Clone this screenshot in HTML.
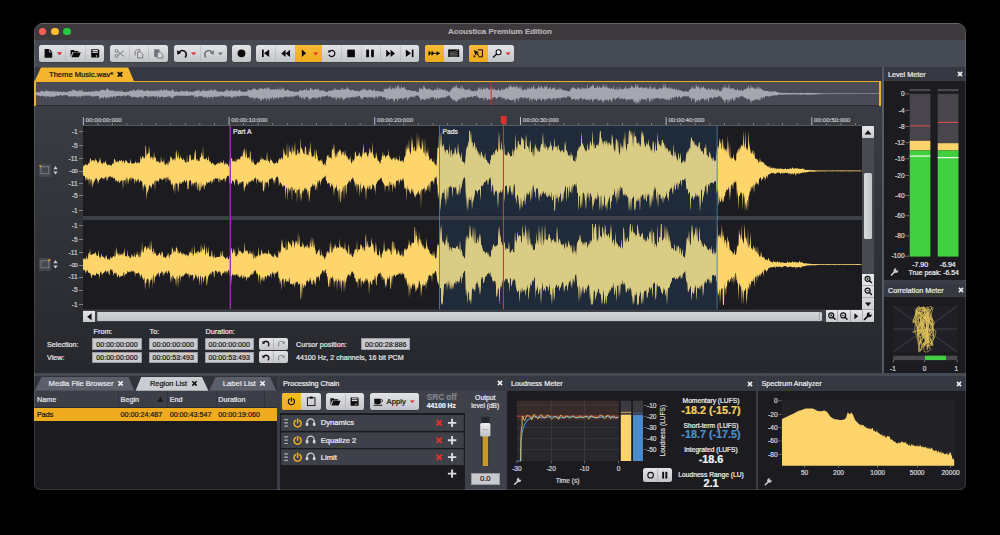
<!DOCTYPE html><html><head><meta charset="utf-8"><style>
html,body{margin:0;padding:0;background:#000;width:1000px;height:535px;overflow:hidden}
.win{position:absolute;left:34px;top:22.5px;width:932px;height:467.4px;border-radius:9px 9px 6px 6px;overflow:hidden;background:#2a2b30}
.wb{position:absolute;left:34px;top:22.5px;width:932px;height:467.4px;border-radius:9px 9px 6px 6px;box-sizing:border-box;border:1px solid rgba(200,205,215,0.16);pointer-events:none}
.win div,.win svg{position:absolute;box-sizing:border-box}
.t{white-space:nowrap;font-family:"Liberation Sans",sans-serif;-webkit-text-stroke:0.22px currentColor}
.btn{background:linear-gradient(#e3e4e7,#c3c4c8);border-radius:2.5px}
.ybtn{background:linear-gradient(#f6bb33,#eeaa1e)}
.dv{background:#b4b5ba}
</style></head><body><div class="win"><div style="left:0.00px;top:0.00px;width:932.00px;height:17.50px;background:#3d393d"></div>
<div style="left:0.00px;top:0.00px;width:932.00px;height:1.00px;background:#56525a"></div>
<div style="left:4.60px;top:5.00px;width:7.80px;height:7.80px;background:#fe5f57;border-radius:50%"></div>
<div style="left:16.90px;top:5.00px;width:7.80px;height:7.80px;background:#febc2e;border-radius:50%"></div>
<div style="left:29.10px;top:5.00px;width:7.80px;height:7.80px;background:#28c840;border-radius:50%"></div>
<div class="t" style="left:316.00px;width:300px;text-align:center;top:3.13px;font-size:8px;line-height:11.2px;color:#b3afb3;font-weight:bold;">Acoustica Premium Edition</div>
<div style="left:0.00px;top:17.50px;width:932.00px;height:27.40px;background:#464a53"></div>
<div style="left:0.00px;top:44.90px;width:848.00px;height:14.20px;background:#353840"></div>
<div style="left:0.00px;top:83.00px;width:848.00px;height:268.00px;background:linear-gradient(#3a3d44 0px,#313339 120px,#27282d 268px)"></div>
<div style="left:848.00px;top:44.90px;width:84.00px;height:306.00px;background:#3b3e46"></div>
<div class="btn" style="left:5.10px;top:22.60px;width:65.10px;height:16.60px;border-radius:2.5px;box-shadow:0 0.5px 0.5px rgba(0,0,0,0.35)"></div>
<div style="left:30.90px;top:23.10px;width:1.00px;height:15.60px;background:rgba(150,152,160,0.32)"></div>
<div style="left:51.20px;top:23.10px;width:1.00px;height:15.60px;background:rgba(150,152,160,0.32)"></div>
<div class="btn" style="left:75.80px;top:22.60px;width:58.20px;height:16.60px;border-radius:2.5px;box-shadow:0 0.5px 0.5px rgba(0,0,0,0.35)"></div>
<div style="left:94.90px;top:23.10px;width:1.00px;height:15.60px;background:rgba(150,152,160,0.32)"></div>
<div style="left:113.80px;top:23.10px;width:1.00px;height:15.60px;background:rgba(150,152,160,0.32)"></div>
<div class="btn" style="left:139.60px;top:22.60px;width:53.10px;height:16.60px;border-radius:2.5px;box-shadow:0 0.5px 0.5px rgba(0,0,0,0.35)"></div>
<div style="left:165.70px;top:23.10px;width:1.00px;height:15.60px;background:rgba(150,152,160,0.32)"></div>
<div class="btn" style="left:198.10px;top:22.60px;width:18.70px;height:16.60px;border-radius:2.5px;box-shadow:0 0.5px 0.5px rgba(0,0,0,0.35)"></div>
<div class="btn" style="left:222.30px;top:22.60px;width:162.70px;height:16.60px;border-radius:2.5px;box-shadow:0 0.5px 0.5px rgba(0,0,0,0.35)"></div>
<div class="ybtn" style="left:261.00px;top:22.60px;width:27.00px;height:16.60px;border-radius:0 0 0 0"></div>
<div style="left:240.70px;top:23.10px;width:1.00px;height:15.60px;background:rgba(150,152,160,0.32)"></div>
<div style="left:307.10px;top:23.10px;width:1.00px;height:15.60px;background:rgba(150,152,160,0.32)"></div>
<div style="left:326.70px;top:23.10px;width:1.00px;height:15.60px;background:rgba(150,152,160,0.32)"></div>
<div style="left:346.30px;top:23.10px;width:1.00px;height:15.60px;background:rgba(150,152,160,0.32)"></div>
<div style="left:365.60px;top:23.10px;width:1.00px;height:15.60px;background:rgba(150,152,160,0.32)"></div>
<div class="btn" style="left:390.80px;top:22.60px;width:38.20px;height:16.60px;border-radius:2.5px;box-shadow:0 0.5px 0.5px rgba(0,0,0,0.35)"></div>
<div class="ybtn" style="left:390.80px;top:22.60px;width:19.20px;height:16.60px;border-radius:2.5px 0 0 2.5px"></div>
<div class="btn" style="left:434.50px;top:22.60px;width:45.70px;height:16.60px;border-radius:2.5px;box-shadow:0 0.5px 0.5px rgba(0,0,0,0.35)"></div>
<div class="ybtn" style="left:434.50px;top:22.60px;width:19.50px;height:16.60px;border-radius:2.5px 0 0 2.5px"></div>
<svg style="left:0.00px;top:17.50px;width:486px;height:27px;" viewBox="34 40 486 27" width="486" height="27"><path d="M44.6 49.1h5l2.6 2.6v6h-7.6z" fill="#0a0a0a"/><path d="M49.4 49.1v2.9h2.8" fill="none" stroke="#d6d7da" stroke-width="0.7"/><path d="M56.9 52.3h5.3l-2.65 2.9z" fill="#d8262c"/><path d="M70.6 50h3.2l0.9 1h3.6v1.3h-6l-1.7 4.8z" fill="#0a0a0a"/><path d="M71.5 57.2l1.9-4.6h7.4l-2 4.6z" fill="#0a0a0a"/><path d="M91.2 49.2h7l1 1v7.3h-8z" fill="#0a0a0a"/><rect x="92.5" y="50" width="5.4" height="2.9" fill="#d9dadd"/><rect x="92.5" y="51.2" width="5.4" height="0.6" fill="#0a0a0a"/><rect x="95.9" y="55.4" width="1.2" height="1.2" fill="#d9dadd"/><g fill="none" stroke="#6f7179" stroke-width="0.9"><circle cx="116.6" cy="51" r="1.5"/><circle cx="116.6" cy="56" r="1.5"/><path d="M118 51.8L123.8 56.3M118 55.2L123.8 50.7"/></g><g fill="none" stroke="#6f7179" stroke-width="0.9"><path d="M135.2 55.5v-4l2-2h2.6v2"/><path d="M137.6 51.8h2.8l2.4 2.4v3.7h-5.2z" fill="#d4d5d8"/></g><rect x="154.2" y="49.3" width="5.2" height="7.6" fill="#6f7179"/><path d="M157.2 52.2h3.2l2.4 2.4v3.4h-5.6z" fill="#d4d5d8" stroke="#6f7179" stroke-width="0.9"/><path d="M179.2 52.3c1.2-1.6 3.4-2.2 5.2-1.2 2.2 1.2 2.4 4.2 0.8 6.3" fill="none" stroke="#0a0a0a" stroke-width="1.6"/><path d="M177 50.3l0.4 4.4 3.8-1.8z" fill="#0a0a0a"/><path d="M191.2 52.6h5l-2.5 2.7z" fill="#d8262c"/><path d="M211.8 52.3c-1.2-1.6-3.4-2.2-5.2-1.2-2.2 1.2-2.4 4.2-0.8 6.3" fill="none" stroke="#6f7179" stroke-width="1.6"/><path d="M214 50.3l-0.4 4.4-3.8-1.8z" fill="#6f7179"/><path d="M218 52.6h5l-2.5 2.7z" fill="#6f7179"/><circle cx="241.5" cy="53.3" r="3.9" fill="#0a0a0a"/><rect x="262" y="49.6" width="1.7" height="7.5" fill="#0a0a0a"/><path d="M269.2 49.6v7.5l-5.2-3.75z" fill="#0a0a0a"/><path d="M285.6 49.8v7.2l-4.4-3.6zM290 49.8v7.2l-4.4-3.6z" fill="#0a0a0a"/><path d="M301.8 49.5v7.6l4.3-3.8z" fill="#0a0a0a"/><path d="M313.3 52.6h4.9l-2.45 2.6z" fill="#d8262c"/><path d="M329.3 51.6a3.1 3.1 0 1 1 -0.4 3.2" fill="none" stroke="#0a0a0a" stroke-width="1.2"/><path d="M328.2 50l0.3 3 2.6-1.4z" fill="#0a0a0a"/><rect x="347.3" y="49.6" width="7.6" height="7.6" fill="#0a0a0a"/><rect x="366.2" y="49.6" width="2.8" height="7.6" fill="#0a0a0a"/><rect x="371.1" y="49.6" width="2.8" height="7.6" fill="#0a0a0a"/><path d="M386.2 49.8v7.2l4.4-3.6zM390.6 49.8v7.2l4.4-3.6z" fill="#0a0a0a"/><path d="M405.8 49.6v7.5l5.2-3.75z" fill="#0a0a0a"/><rect x="411.8" y="49.6" width="1.7" height="7.5" fill="#0a0a0a"/><g fill="#0a0a0a"><path d="M428.6 50.6v5.4l2.6-2.7zM431.6 50.6v5.4l2.6-2.7z"/><rect x="428.6" y="52.9" width="9" height="0.9"/><path d="M436.6 51.2l3.6 2.15-3.6 2.15z"/></g><rect x="448.2" y="49.4" width="11" height="7.6" fill="#0a0a0a"/><g fill="none" stroke="#c4c5c9" stroke-width="0.5"><path d="M449.6 52h3.6c2 0 3-1 4.6-1.6M449.6 53.4h3.6c2 0 3-0.6 4.6-0.9M449.6 54.8h3.6c2 0 3-0.3 4.6-0.4M449.6 56.1h8.2"/></g><path d="M477.8 49.8h4.6v7h-4M475.4 56.8h-1.4v-1.6" fill="none" stroke="#0a0a0a" stroke-width="1"/><path d="M473.9 50l5.2 2.2-2 0.7 2.1 2.3-0.9 0.9-2.1-2.3-0.8 1.9z" fill="#0a0a0a"/><circle cx="498.6" cy="52.3" r="2.5" fill="#f4f4f6" stroke="#0a0a0a" stroke-width="1.1"/><path d="M496.8 54.1l-3.8 3.3" stroke="#0a0a0a" stroke-width="1.3"/><path d="M505.6 52.6h5l-2.5 2.7z" fill="#d8262c"/></svg>
<svg style="left:0.00px;top:44.50px;width:110px;height:15px;" viewBox="34 67 110 15" width="110" height="15"><path d="M34.4 81.8L41 67.6H128.2L134.2 81.8Z" fill="#f5b52e"/></svg>
<div class="t" style="left:15.00px;top:47.55px;font-size:7.6px;line-height:10.64px;color:#111;font-weight:normal;">Theme Music.wav*</div>
<svg style="left:82.00px;top:47.50px;width:8px;height:8px;" viewBox="116 70 8 8" width="8" height="8"><path d="M117.8 72.2L122.2 76.6M122.2 72.2L117.8 76.6" stroke="#111" stroke-width="1.9"/></svg>
<div style="left:0.00px;top:58.70px;width:848.00px;height:24.30px;background:#4a4b55"></div>
<div style="left:0.00px;top:58.00px;width:847.00px;height:1.30px;background:#eeb028"></div>
<div style="left:0.00px;top:58.50px;width:2.00px;height:24.50px;background:#eeb028"></div>
<div style="left:845.00px;top:58.50px;width:2.00px;height:24.50px;background:#eeb028"></div>
<svg style="left:0.00px;top:58.50px;width:848px;height:25px;" viewBox="34 81 848 25" width="848" height="25"><path d="M35.5 92.1L36.0 92.0L36.5 92.4L37.0 92.1L37.5 92.2L38.0 92.3L38.5 92.0L39.0 92.2L39.5 92.4L40.0 91.0L40.5 92.3L41.0 90.4L41.5 91.0L42.0 91.2L42.5 91.1L43.0 91.1L43.5 91.6L44.0 91.6L44.5 91.7L45.0 91.4L45.5 91.3L46.0 90.6L46.5 90.6L47.0 90.8L47.5 91.0L48.0 91.0L48.5 91.1L49.0 91.3L49.5 91.4L50.0 91.1L50.5 91.4L51.0 91.6L51.5 91.8L52.0 91.0L52.5 91.0L53.0 91.6L53.5 91.3L54.0 91.8L54.5 91.8L55.0 90.3L55.5 92.0L56.0 91.7L56.5 91.7L57.0 91.6L57.5 91.1L58.0 91.5L58.5 91.7L59.0 91.8L59.5 92.0L60.0 91.8L60.5 92.0L61.0 90.6L61.5 92.2L62.0 92.4L62.5 92.0L63.0 92.1L63.5 91.2L64.0 92.2L64.5 92.3L65.0 91.5L65.5 92.0L66.0 92.1L66.5 92.1L67.0 92.3L67.5 92.2L68.0 91.9L68.5 91.3L69.0 91.4L69.5 90.9L70.0 91.2L70.5 91.0L71.0 91.4L71.5 91.2L72.0 89.4L72.5 89.6L73.0 91.5L73.5 89.3L74.0 89.9L74.5 90.2L75.0 90.3L75.5 90.6L76.0 90.7L76.5 91.0L77.0 91.3L77.5 91.1L78.0 91.1L78.5 91.7L79.0 88.9L79.5 91.3L80.0 90.5L80.5 90.8L81.0 91.4L81.5 89.8L82.0 89.8L82.5 91.2L83.0 92.0L83.5 91.7L84.0 91.4L84.5 91.9L85.0 91.6L85.5 91.8L86.0 92.0L86.5 91.7L87.0 91.7L87.5 92.0L88.0 92.1L88.5 91.9L89.0 90.2L89.5 92.0L90.0 91.9L90.5 91.9L91.0 91.6L91.5 91.5L92.0 90.2L92.5 92.0L93.0 91.3L93.5 91.6L94.0 91.7L94.5 91.6L95.0 90.3L95.5 91.5L96.0 90.4L96.5 90.8L97.0 91.0L97.5 91.6L98.0 91.5L98.5 91.6L99.0 91.4L99.5 90.6L100.0 90.7L100.5 90.4L101.0 90.3L101.5 90.1L102.0 89.8L102.5 89.5L103.0 90.1L103.5 89.7L104.0 90.0L104.5 90.5L105.0 90.4L105.5 90.3L106.0 89.8L106.5 90.1L107.0 87.6L107.5 88.4L108.0 89.3L108.5 89.8L109.0 90.5L109.5 90.8L110.0 90.1L110.5 90.2L111.0 90.4L111.5 90.5L112.0 90.5L112.5 90.0L113.0 91.0L113.5 91.1L114.0 90.6L114.5 91.0L115.0 91.7L115.5 91.2L116.0 91.1L116.5 91.1L117.0 91.2L117.5 91.4L118.0 91.1L118.5 91.3L119.0 91.8L119.5 91.6L120.0 89.6L120.5 92.0L121.0 91.9L121.5 90.1L122.0 91.3L122.5 91.3L123.0 91.9L123.5 92.1L124.0 91.8L124.5 92.3L125.0 91.8L125.5 91.8L126.0 92.1L126.5 92.4L127.0 91.2L127.5 91.4L128.0 91.9L128.5 92.1L129.0 91.2L129.5 90.9L130.0 91.0L130.5 90.6L131.0 90.6L131.5 91.0L132.0 90.8L132.5 91.0L133.0 89.6L133.5 89.5L134.0 90.1L134.5 90.4L135.0 90.8L135.5 91.1L136.0 90.5L136.5 90.1L137.0 90.1L137.5 90.2L138.0 90.5L138.5 87.7L139.0 90.5L139.5 90.1L140.0 91.1L140.5 90.0L141.0 90.1L141.5 88.8L142.0 90.4L142.5 89.8L143.0 90.8L143.5 91.1L144.0 91.1L144.5 90.9L145.0 91.2L145.5 91.1L146.0 90.3L146.5 90.9L147.0 90.8L147.5 89.6L148.0 90.4L148.5 90.5L149.0 90.8L149.5 91.4L150.0 90.7L150.5 90.7L151.0 90.9L151.5 90.6L152.0 90.7L152.5 90.9L153.0 90.8L153.5 91.2L154.0 91.0L154.5 91.2L155.0 89.8L155.5 90.4L156.0 90.9L156.5 91.3L157.0 90.7L157.5 90.7L158.0 88.9L158.5 90.9L159.0 90.9L159.5 91.3L160.0 88.9L160.5 90.8L161.0 89.1L161.5 90.1L162.0 90.4L162.5 90.2L163.0 91.2L163.5 88.4L164.0 91.1L164.5 89.6L165.0 90.1L165.5 90.0L166.0 90.4L166.5 88.0L167.0 90.7L167.5 90.9L168.0 89.9L168.5 91.1L169.0 90.5L169.5 90.7L170.0 90.7L170.5 91.3L171.0 91.2L171.5 91.0L172.0 89.1L172.5 90.1L173.0 89.3L173.5 90.9L174.0 91.4L174.5 91.3L175.0 91.8L175.5 91.6L176.0 91.5L176.5 91.7L177.0 90.6L177.5 91.8L178.0 92.0L178.5 92.1L179.0 92.1L179.5 92.0L180.0 91.8L180.5 91.8L181.0 90.1L181.5 90.7L182.0 90.9L182.5 91.6L183.0 91.3L183.5 91.6L184.0 90.6L184.5 91.4L185.0 91.7L185.5 91.2L186.0 91.4L186.5 90.0L187.0 91.2L187.5 91.5L188.0 91.3L188.5 91.6L189.0 91.7L189.5 92.2L190.0 91.2L190.5 91.1L191.0 91.9L191.5 91.9L192.0 92.1L192.5 91.6L193.0 92.0L193.5 91.3L194.0 92.3L194.5 91.3L195.0 91.1L195.5 91.1L196.0 90.5L196.5 90.6L197.0 90.3L197.5 91.2L198.0 89.5L198.5 90.9L199.0 88.9L199.5 91.0L200.0 91.8L200.5 91.4L201.0 91.7L201.5 90.4L202.0 91.0L202.5 90.9L203.0 90.7L203.5 88.6L204.0 91.0L204.5 90.9L205.0 91.2L205.5 90.6L206.0 90.6L206.5 90.9L207.0 91.1L207.5 90.9L208.0 90.4L208.5 90.4L209.0 90.0L209.5 90.8L210.0 90.7L210.5 89.9L211.0 88.4L211.5 90.0L212.0 90.4L212.5 90.5L213.0 90.9L213.5 90.6L214.0 88.4L214.5 90.7L215.0 88.7L215.5 89.9L216.0 90.5L216.5 90.6L217.0 91.2L217.5 91.4L218.0 91.5L218.5 91.7L219.0 91.4L219.5 91.3L220.0 91.8L220.5 92.1L221.0 90.7L221.5 91.7L222.0 91.6L222.5 91.8L223.0 91.9L223.5 91.9L224.0 91.2L224.5 91.2L225.0 91.5L225.5 90.9L226.0 89.0L226.5 90.6L227.0 90.8L227.5 88.5L228.0 90.8L228.5 90.9L229.0 91.2L229.5 90.6L230.0 90.9L230.5 90.7L231.0 90.6L231.5 90.6L232.0 88.3L232.5 91.0L233.0 91.0L233.5 91.2L234.0 91.2L234.5 90.8L235.0 90.2L235.5 90.4L236.0 91.0L236.5 91.1L237.0 91.4L237.5 91.3L238.0 89.9L238.5 90.5L239.0 90.9L239.5 89.5L240.0 90.1L240.5 91.2L241.0 91.4L241.5 91.8L242.0 91.6L242.5 91.8L243.0 91.8L243.5 91.7L244.0 91.8L244.5 91.9L245.0 91.9L245.5 91.8L246.0 91.9L246.5 91.1L247.0 91.9L247.5 90.7L248.0 88.7L248.5 89.7L249.0 90.0L249.5 90.1L250.0 90.8L250.5 90.0L251.0 90.4L251.5 90.2L252.0 89.5L252.5 88.7L253.0 89.3L253.5 89.6L254.0 87.4L254.5 88.6L255.0 89.1L255.5 88.8L256.0 90.3L256.5 89.4L257.0 90.1L257.5 89.4L258.0 90.2L258.5 89.3L259.0 89.4L259.5 87.9L260.0 87.9L260.5 88.6L261.0 89.1L261.5 88.8L262.0 88.7L262.5 88.0L263.0 89.1L263.5 89.5L264.0 89.2L264.5 87.9L265.0 88.1L265.5 88.9L266.0 89.3L266.5 86.6L267.0 89.3L267.5 89.1L268.0 87.3L268.5 87.3L269.0 88.0L269.5 88.5L270.0 90.2L270.5 90.0L271.0 89.1L271.5 89.5L272.0 89.6L272.5 89.4L273.0 90.0L273.5 89.0L274.0 88.9L274.5 89.7L275.0 89.6L275.5 88.7L276.0 89.9L276.5 90.2L277.0 89.1L277.5 88.4L278.0 89.1L278.5 89.8L279.0 89.4L279.5 89.7L280.0 85.8L280.5 90.1L281.0 90.3L281.5 89.9L282.0 87.5L282.5 88.8L283.0 89.3L283.5 86.6L284.0 90.6L284.5 89.7L285.0 90.6L285.5 90.7L286.0 90.8L286.5 90.5L287.0 88.9L287.5 89.6L288.0 90.1L288.5 89.9L289.0 90.3L289.5 91.1L290.0 91.3L290.5 91.1L291.0 91.1L291.5 91.1L292.0 91.3L292.5 91.6L293.0 91.2L293.5 91.5L294.0 91.8L294.5 91.9L295.0 91.5L295.5 91.8L296.0 91.4L296.5 91.6L297.0 91.8L297.5 92.3L298.0 92.2L298.5 91.4L299.0 91.2L299.5 89.4L300.0 91.1L300.5 90.3L301.0 90.3L301.5 90.2L302.0 90.2L302.5 90.7L303.0 91.0L303.5 90.0L304.0 89.6L304.5 89.9L305.0 89.5L305.5 90.6L306.0 89.9L306.5 86.9L307.0 90.7L307.5 90.8L308.0 90.1L308.5 90.6L309.0 90.2L309.5 90.8L310.0 88.1L310.5 88.6L311.0 87.0L311.5 89.6L312.0 89.7L312.5 89.5L313.0 89.6L313.5 90.3L314.0 90.0L314.5 89.7L315.0 89.6L315.5 88.3L316.0 89.3L316.5 89.6L317.0 89.2L317.5 89.5L318.0 89.9L318.5 87.5L319.0 90.4L319.5 90.6L320.0 90.1L320.5 90.7L321.0 90.5L321.5 90.9L322.0 90.4L322.5 89.6L323.0 90.2L323.5 91.0L324.0 90.6L324.5 90.9L325.0 91.3L325.5 91.4L326.0 91.8L326.5 91.8L327.0 91.9L327.5 91.7L328.0 91.7L328.5 90.2L329.0 90.7L329.5 91.0L330.0 90.5L330.5 90.7L331.0 90.9L331.5 90.9L332.0 89.4L332.5 90.2L333.0 89.9L333.5 90.4L334.0 90.5L334.5 87.7L335.0 88.0L335.5 89.5L336.0 89.7L336.5 90.1L337.0 89.5L337.5 89.6L338.0 90.1L338.5 89.4L339.0 90.3L339.5 90.0L340.0 89.6L340.5 90.2L341.0 89.6L341.5 87.6L342.0 88.9L342.5 90.2L343.0 87.1L343.5 89.7L344.0 89.5L344.5 89.2L345.0 89.3L345.5 89.2L346.0 89.6L346.5 89.3L347.0 86.5L347.5 87.4L348.0 88.5L348.5 88.9L349.0 89.2L349.5 89.6L350.0 90.4L350.5 89.5L351.0 90.5L351.5 90.5L352.0 90.1L352.5 89.4L353.0 89.6L353.5 90.9L354.0 90.3L354.5 90.6L355.0 90.7L355.5 91.0L356.0 91.3L356.5 90.8L357.0 90.6L357.5 91.0L358.0 90.5L358.5 91.7L359.0 91.8L359.5 91.0L360.0 90.6L360.5 90.5L361.0 90.8L361.5 90.3L362.0 88.8L362.5 89.6L363.0 89.2L363.5 89.5L364.0 90.9L364.5 87.1L365.0 89.0L365.5 89.4L366.0 90.2L366.5 89.9L367.0 90.3L367.5 90.4L368.0 90.8L368.5 90.2L369.0 88.4L369.5 90.4L370.0 88.8L370.5 89.5L371.0 90.2L371.5 90.0L372.0 90.7L372.5 91.0L373.0 90.7L373.5 89.5L374.0 90.9L374.5 88.5L375.0 90.6L375.5 91.5L376.0 91.4L376.5 90.9L377.0 90.7L377.5 90.6L378.0 90.8L378.5 91.6L379.0 91.1L379.5 91.6L380.0 90.9L380.5 91.7L381.0 91.8L381.5 91.2L382.0 91.2L382.5 91.9L383.0 92.0L383.5 91.0L384.0 87.7L384.5 89.5L385.0 89.0L385.5 89.3L386.0 88.3L386.5 89.2L387.0 88.2L387.5 88.5L388.0 89.7L388.5 87.1L389.0 88.8L389.5 88.1L390.0 85.1L390.5 88.6L391.0 88.6L391.5 89.9L392.0 89.5L392.5 87.3L393.0 88.1L393.5 88.5L394.0 89.5L394.5 88.3L395.0 88.8L395.5 85.2L396.0 88.4L396.5 89.5L397.0 85.5L397.5 85.2L398.0 88.3L398.5 86.0L399.0 85.0L399.5 88.5L400.0 88.7L400.5 88.5L401.0 88.6L401.5 85.4L402.0 87.7L402.5 88.2L403.0 87.9L403.5 86.9L404.0 88.0L404.5 86.5L405.0 88.7L405.5 89.3L406.0 89.9L406.5 89.2L407.0 89.9L407.5 90.2L408.0 90.5L408.5 90.2L409.0 90.1L409.5 89.4L410.0 90.5L410.5 90.2L411.0 90.6L411.5 91.2L412.0 90.8L412.5 90.9L413.0 91.0L413.5 91.3L414.0 90.5L414.5 91.3L415.0 90.9L415.5 90.4L416.0 91.5L416.5 91.8L417.0 91.6L417.5 91.7L418.0 92.3L418.5 92.3L419.0 90.8L419.5 87.6L420.0 88.3L420.5 88.7L421.0 89.1L421.5 88.6L422.0 88.1L422.5 89.7L423.0 89.6L423.5 85.4L424.0 86.0L424.5 87.0L425.0 88.1L425.5 88.4L426.0 89.1L426.5 89.4L427.0 88.8L427.5 89.5L428.0 89.9L428.5 88.3L429.0 88.6L429.5 88.6L430.0 89.3L430.5 90.0L431.0 89.9L431.5 89.6L432.0 90.2L432.5 90.7L433.0 90.4L433.5 89.9L434.0 90.6L434.5 89.3L435.0 89.4L435.5 89.6L436.0 89.8L436.5 90.4L437.0 86.7L437.5 87.4L438.0 89.7L438.5 89.8L439.0 89.9L439.5 87.7L440.0 88.6L440.5 88.7L441.0 90.0L441.5 88.3L442.0 89.4L442.5 89.9L443.0 89.7L443.5 89.8L444.0 90.7L444.5 88.6L445.0 90.5L445.5 88.5L446.0 90.9L446.5 91.6L447.0 91.2L447.5 90.0L448.0 91.6L448.5 91.9L449.0 92.1L449.5 92.6L450.0 91.2L450.5 90.3L451.0 89.4L451.5 90.0L452.0 88.3L452.5 88.0L453.0 86.6L453.5 88.3L454.0 87.9L454.5 85.8L455.0 86.1L455.5 86.7L456.0 88.7L456.5 83.8L457.0 86.3L457.5 88.1L458.0 88.1L458.5 88.5L459.0 87.8L459.5 88.6L460.0 89.6L460.5 84.9L461.0 89.6L461.5 89.1L462.0 84.8L462.5 86.6L463.0 88.9L463.5 88.0L464.0 89.2L464.5 89.2L465.0 89.3L465.5 89.7L466.0 90.6L466.5 89.6L467.0 90.2L467.5 89.6L468.0 88.0L468.5 90.6L469.0 89.3L469.5 88.1L470.0 90.3L470.5 90.4L471.0 90.7L471.5 90.2L472.0 91.0L472.5 91.1L473.0 91.1L473.5 91.5L474.0 91.6L474.5 90.4L475.0 89.8L475.5 91.4L476.0 91.5L476.5 90.6L477.0 90.5L477.5 91.1L478.0 88.7L478.5 87.2L479.0 87.0L479.5 89.0L480.0 89.6L480.5 89.4L481.0 86.2L481.5 88.9L482.0 90.0L482.5 89.7L483.0 89.6L483.5 86.1L484.0 88.5L484.5 89.4L485.0 88.6L485.5 89.1L486.0 89.0L486.5 87.3L487.0 87.8L487.5 87.8L488.0 89.1L488.5 89.7L489.0 88.7L489.5 90.1L490.0 89.6L490.5 86.2L491.0 90.2L491.5 86.1L492.0 89.3L492.5 89.9L493.0 87.3L493.5 89.7L494.0 90.8L494.5 88.3L495.0 88.9L495.5 90.3L496.0 89.8L496.5 90.7L497.0 90.6L497.5 89.4L498.0 89.5L498.5 87.8L499.0 90.4L499.5 90.6L500.0 91.0L500.5 90.0L501.0 90.3L501.5 87.8L502.0 89.3L502.5 90.9L503.0 88.0L503.5 90.1L504.0 89.0L504.5 89.4L505.0 89.2L505.5 89.0L506.0 87.4L506.5 87.5L507.0 88.3L507.5 88.4L508.0 89.6L508.5 86.2L509.0 86.4L509.5 87.5L510.0 85.0L510.5 84.6L511.0 86.7L511.5 87.0L512.0 87.1L512.5 87.7L513.0 87.3L513.5 84.9L514.0 87.0L514.5 87.2L515.0 87.3L515.5 87.1L516.0 87.1L516.5 84.5L517.0 89.2L517.5 85.8L518.0 88.7L518.5 89.3L519.0 85.8L519.5 87.6L520.0 88.4L520.5 89.1L521.0 85.8L521.5 86.2L522.0 90.4L522.5 90.5L523.0 89.9L523.5 89.6L524.0 90.1L524.5 89.7L525.0 88.0L525.5 90.0L526.0 90.4L526.5 89.1L527.0 89.9L527.5 86.8L528.0 89.4L528.5 88.8L529.0 86.9L529.5 88.6L530.0 88.7L530.5 89.2L531.0 88.3L531.5 85.8L532.0 88.5L532.5 89.2L533.0 86.5L533.5 86.8L534.0 83.9L534.5 88.3L535.0 88.8L535.5 89.3L536.0 88.8L536.5 89.5L537.0 88.2L537.5 88.0L538.0 88.6L538.5 84.3L539.0 87.5L539.5 87.1L540.0 88.8L540.5 87.4L541.0 86.0L541.5 85.8L542.0 87.0L542.5 87.9L543.0 88.7L543.5 87.7L544.0 89.5L544.5 85.8L545.0 86.4L545.5 88.1L546.0 86.1L546.5 87.2L547.0 84.8L547.5 88.8L548.0 89.4L548.5 88.4L549.0 89.3L549.5 86.9L550.0 88.2L550.5 86.0L551.0 88.9L551.5 89.5L552.0 88.8L552.5 88.6L553.0 87.1L553.5 88.3L554.0 88.3L554.5 88.3L555.0 85.9L555.5 89.9L556.0 90.1L556.5 89.0L557.0 90.4L557.5 89.1L558.0 89.1L558.5 89.4L559.0 86.6L559.5 89.2L560.0 90.0L560.5 87.0L561.0 90.2L561.5 88.2L562.0 89.0L562.5 89.7L563.0 89.8L563.5 90.9L564.0 90.0L564.5 89.9L565.0 90.7L565.5 90.4L566.0 90.8L566.5 90.5L567.0 90.6L567.5 91.5L568.0 91.1L568.5 91.4L569.0 90.9L569.5 91.4L570.0 91.5L570.5 88.7L571.0 88.8L571.5 88.4L572.0 88.5L572.5 86.8L573.0 88.1L573.5 87.4L574.0 87.5L574.5 88.0L575.0 88.8L575.5 88.7L576.0 89.3L576.5 88.8L577.0 89.7L577.5 89.0L578.0 86.5L578.5 88.3L579.0 87.6L579.5 88.9L580.0 88.2L580.5 88.9L581.0 89.9L581.5 88.8L582.0 87.4L582.5 86.8L583.0 88.5L583.5 88.2L584.0 89.2L584.5 88.7L585.0 87.6L585.5 88.6L586.0 88.8L586.5 88.2L587.0 88.6L587.5 83.3L588.0 89.2L588.5 88.2L589.0 88.2L589.5 87.9L590.0 88.1L590.5 86.6L591.0 87.0L591.5 85.8L592.0 86.6L592.5 83.6L593.0 86.7L593.5 84.2L594.0 87.8L594.5 88.0L595.0 87.9L595.5 87.3L596.0 88.2L596.5 87.9L597.0 86.4L597.5 85.3L598.0 87.2L598.5 88.4L599.0 87.5L599.5 86.1L600.0 86.4L600.5 88.5L601.0 87.8L601.5 87.4L602.0 88.1L602.5 86.9L603.0 82.7L603.5 85.7L604.0 87.0L604.5 86.3L605.0 87.4L605.5 87.5L606.0 83.9L606.5 88.5L607.0 84.9L607.5 87.7L608.0 88.3L608.5 88.5L609.0 87.1L609.5 88.5L610.0 88.4L610.5 88.8L611.0 88.7L611.5 87.7L612.0 88.5L612.5 89.3L613.0 88.7L613.5 84.8L614.0 89.5L614.5 89.0L615.0 89.4L615.5 89.3L616.0 89.6L616.5 89.2L617.0 86.1L617.5 89.5L618.0 90.1L618.5 89.6L619.0 89.1L619.5 87.3L620.0 86.6L620.5 89.5L621.0 89.6L621.5 88.5L622.0 89.2L622.5 88.5L623.0 89.5L623.5 89.6L624.0 88.4L624.5 88.5L625.0 87.7L625.5 87.3L626.0 85.3L626.5 89.0L627.0 89.0L627.5 88.4L628.0 89.3L628.5 87.4L629.0 88.2L629.5 88.6L630.0 87.6L630.5 87.9L631.0 87.5L631.5 84.9L632.0 86.7L632.5 86.5L633.0 86.9L633.5 88.8L634.0 87.3L634.5 87.9L635.0 87.5L635.5 83.0L636.0 87.1L636.5 87.7L637.0 83.8L637.5 84.9L638.0 87.0L638.5 86.5L639.0 88.2L639.5 88.2L640.0 88.0L640.5 87.5L641.0 86.9L641.5 86.4L642.0 87.9L642.5 87.4L643.0 88.7L643.5 88.2L644.0 87.0L644.5 87.9L645.0 88.5L645.5 87.8L646.0 87.3L646.5 87.1L647.0 88.5L647.5 88.6L648.0 88.5L648.5 88.7L649.0 88.6L649.5 88.8L650.0 84.3L650.5 86.9L651.0 86.8L651.5 88.9L652.0 89.1L652.5 88.4L653.0 88.4L653.5 89.1L654.0 86.9L654.5 88.0L655.0 85.4L655.5 89.4L656.0 89.6L656.5 89.1L657.0 89.8L657.5 89.4L658.0 88.3L658.5 89.4L659.0 89.2L659.5 87.3L660.0 87.9L660.5 88.0L661.0 89.2L661.5 89.1L662.0 87.6L662.5 88.8L663.0 87.8L663.5 83.1L664.0 88.6L664.5 87.5L665.0 82.5L665.5 85.7L666.0 87.1L666.5 88.4L667.0 87.4L667.5 88.7L668.0 88.0L668.5 88.5L669.0 85.9L669.5 87.9L670.0 88.8L670.5 88.1L671.0 88.9L671.5 88.7L672.0 86.2L672.5 88.9L673.0 88.9L673.5 89.6L674.0 89.1L674.5 89.3L675.0 87.9L675.5 89.8L676.0 90.6L676.5 87.5L677.0 90.8L677.5 91.1L678.0 88.9L678.5 90.3L679.0 88.8L679.5 90.2L680.0 91.3L680.5 89.7L681.0 90.9L681.5 90.6L682.0 91.1L682.5 91.1L683.0 91.7L683.5 91.5L684.0 91.7L684.5 91.5L685.0 91.4L685.5 91.4L686.0 90.3L686.5 91.5L687.0 91.7L687.5 91.5L688.0 92.1L688.5 91.7L689.0 89.9L689.5 90.3L690.0 89.4L690.5 89.0L691.0 89.1L691.5 86.5L692.0 88.3L692.5 88.9L693.0 84.8L693.5 88.3L694.0 87.8L694.5 89.0L695.0 88.9L695.5 88.5L696.0 84.5L696.5 85.2L697.0 87.5L697.5 87.1L698.0 87.1L698.5 87.5L699.0 84.4L699.5 88.2L700.0 88.6L700.5 89.5L701.0 88.5L701.5 86.6L702.0 87.7L702.5 87.3L703.0 88.3L703.5 85.6L704.0 87.6L704.5 88.4L705.0 88.4L705.5 88.6L706.0 88.5L706.5 89.7L707.0 88.9L707.5 90.2L708.0 89.2L708.5 87.4L709.0 88.6L709.5 89.7L710.0 89.5L710.5 90.0L711.0 90.3L711.5 87.8L712.0 88.7L712.5 89.0L713.0 89.1L713.5 90.3L714.0 89.9L714.5 88.0L715.0 90.5L715.5 90.5L716.0 87.8L716.5 90.5L717.0 90.8L717.5 89.6L718.0 88.9L718.5 88.5L719.0 91.1L719.5 90.9L720.0 91.1L720.5 91.1L721.0 91.2L721.5 91.4L722.0 87.6L722.5 90.2L723.0 86.5L723.5 87.8L724.0 87.8L724.5 87.4L725.0 83.7L725.5 87.5L726.0 87.9L726.5 88.6L727.0 87.0L727.5 87.8L728.0 88.6L728.5 86.5L729.0 82.9L729.5 88.6L730.0 88.3L730.5 89.4L731.0 88.3L731.5 88.4L732.0 88.3L732.5 88.5L733.0 87.9L733.5 87.9L734.0 89.2L734.5 89.9L735.0 89.8L735.5 89.6L736.0 90.5L736.5 90.3L737.0 90.0L737.5 86.9L738.0 91.0L738.5 90.6L739.0 89.6L739.5 89.9L740.0 90.5L740.5 90.4L741.0 90.7L741.5 89.4L742.0 90.2L742.5 91.2L743.0 91.0L743.5 90.0L744.0 89.4L744.5 89.3L745.0 89.1L745.5 88.7L746.0 89.7L746.5 88.8L747.0 87.9L747.5 87.5L748.0 87.8L748.5 84.2L749.0 88.2L749.5 89.0L750.0 88.2L750.5 88.0L751.0 83.7L751.5 89.1L752.0 86.4L752.5 87.3L753.0 87.9L753.5 87.3L754.0 88.2L754.5 89.5L755.0 88.4L755.5 88.4L756.0 88.9L756.5 88.3L757.0 85.1L757.5 88.6L758.0 89.2L758.5 88.7L759.0 85.2L759.5 88.0L760.0 89.1L760.5 87.8L761.0 89.3L761.5 88.9L762.0 89.7L762.5 89.2L763.0 90.2L763.5 90.8L764.0 91.0L764.5 90.3L765.0 91.3L765.5 90.7L766.0 91.0L766.5 90.9L767.0 90.7L767.5 91.0L768.0 91.1L768.5 91.1L769.0 91.4L769.5 91.7L770.0 91.4L770.5 91.6L771.0 91.7L771.5 92.2L772.0 90.3L772.5 91.5L773.0 91.5L773.5 91.9L774.0 91.8L774.5 90.6L775.0 91.6L775.5 90.9L776.0 92.3L776.5 91.5L777.0 92.2L777.5 92.1L778.0 92.6L778.5 92.8L779.0 91.7L779.5 92.6L780.0 92.9L780.5 92.7L781.0 92.9L781.5 92.7L782.0 92.4L782.5 92.9L783.0 92.9L783.5 92.9L784.0 92.9L784.5 93.1L785.0 92.9L785.5 92.5L786.0 92.9L786.5 92.4L787.0 93.0L787.5 93.0L788.0 93.0L788.5 92.9L789.0 93.2L789.5 93.1L790.0 93.1L790.5 93.1L791.0 92.9L791.5 92.9L792.0 92.9L792.5 93.1L793.0 93.1L793.5 93.1L794.0 93.0L794.5 93.0L795.0 93.0L795.5 92.9L796.0 93.1L796.5 93.1L797.0 93.1L797.5 93.2L798.0 93.1L798.5 93.1L799.0 93.2L799.5 93.2L800.0 92.9L800.5 92.9L801.0 92.9L801.5 93.1L802.0 92.8L802.5 92.9L803.0 93.0L803.5 93.0L804.0 92.9L804.5 93.0L805.0 93.1L805.5 92.9L806.0 93.1L806.5 93.1L807.0 93.0L807.5 93.0L808.0 92.3L808.5 92.9L809.0 92.9L809.5 93.0L810.0 92.9L810.5 93.0L811.0 93.0L811.5 92.9L812.0 93.0L812.5 93.0L813.0 93.0L813.5 93.0L814.0 93.0L814.5 93.1L815.0 93.1L815.5 93.0L816.0 93.0L816.5 93.1L817.0 93.2L817.5 93.2L818.0 93.3L818.5 93.3L819.0 93.1L819.5 93.2L820.0 92.9L820.5 93.3L821.0 93.3L821.5 93.4L822.0 93.3L822.5 93.4L823.0 93.3L823.5 93.3L824.0 93.3L824.5 93.3L825.0 93.4L825.5 93.4L826.0 93.4L826.5 93.4L827.0 93.4L827.5 93.4L828.0 93.3L828.5 93.4L829.0 93.4L829.5 93.4L830.0 93.4L830.5 93.4L831.0 93.4L831.5 93.4L832.0 93.4L832.5 93.2L833.0 93.4L833.5 93.4L834.0 93.4L834.5 93.4L835.0 93.4L835.5 93.4L836.0 93.3L836.5 93.4L837.0 93.2L837.5 93.4L838.0 93.4L838.5 93.4L839.0 93.4L839.5 93.3L840.0 93.3L840.5 93.4L841.0 93.4L841.5 93.4L842.0 93.2L842.5 93.3L843.0 93.4L843.5 93.4L844.0 93.4L844.5 93.4L845.0 93.4L845.5 93.4L846.0 93.4L846.5 93.3L847.0 93.4L847.5 93.4L848.0 93.4L848.5 93.4L849.0 93.4L849.5 93.4L850.0 93.4L850.5 93.4L851.0 93.4L851.5 93.4L852.0 93.4L852.5 93.3L853.0 93.3L853.5 93.4L854.0 93.3L854.5 93.4L855.0 93.4L855.5 93.4L856.0 93.4L856.5 93.4L857.0 93.4L857.5 93.4L858.0 93.4L858.5 93.3L859.0 93.4L859.5 93.4L860.0 93.4L860.5 93.4L861.0 93.4L861.5 93.4L862.0 93.4L862.5 93.4L863.0 93.4L863.5 93.4L864.0 93.4L864.5 93.4L865.0 93.4L865.5 93.4L866.0 93.4L866.5 93.4L867.0 93.4L867.5 93.4L868.0 93.4L868.5 93.4L869.0 93.4L869.5 93.4L870.0 93.4L870.5 93.4L871.0 93.4L871.5 93.4L872.0 93.4L872.5 93.3L873.0 93.4L873.5 93.4L874.0 93.3L874.5 93.4L875.0 93.4L875.5 93.4L876.0 93.4L876.5 93.4L877.0 93.3L877.5 93.4L878.0 93.4L878.5 93.4L879.0 93.4L879.0 94.0L878.5 94.0L878.0 94.0L877.5 94.0L877.0 94.0L876.5 94.0L876.0 94.0L875.5 94.0L875.0 94.0L874.5 94.0L874.0 94.0L873.5 94.0L873.0 94.0L872.5 94.0L872.0 94.0L871.5 94.0L871.0 94.0L870.5 94.0L870.0 94.0L869.5 94.0L869.0 94.0L868.5 94.1L868.0 94.0L867.5 94.0L867.0 94.0L866.5 94.0L866.0 94.0L865.5 94.0L865.0 94.0L864.5 94.0L864.0 94.0L863.5 94.1L863.0 94.0L862.5 94.0L862.0 94.0L861.5 94.0L861.0 94.1L860.5 94.0L860.0 94.0L859.5 94.0L859.0 94.0L858.5 94.0L858.0 94.0L857.5 94.0L857.0 94.0L856.5 94.0L856.0 94.0L855.5 94.0L855.0 94.1L854.5 94.1L854.0 94.0L853.5 94.0L853.0 94.0L852.5 94.0L852.0 94.0L851.5 94.0L851.0 94.0L850.5 94.0L850.0 94.0L849.5 94.0L849.0 94.0L848.5 94.0L848.0 94.0L847.5 94.0L847.0 94.0L846.5 94.0L846.0 94.0L845.5 94.1L845.0 94.0L844.5 94.0L844.0 94.0L843.5 94.0L843.0 94.0L842.5 94.0L842.0 94.0L841.5 94.0L841.0 94.0L840.5 94.1L840.0 94.0L839.5 94.0L839.0 94.0L838.5 94.0L838.0 94.0L837.5 94.1L837.0 94.2L836.5 94.0L836.0 94.1L835.5 94.0L835.0 94.0L834.5 94.0L834.0 94.0L833.5 94.0L833.0 94.0L832.5 94.0L832.0 94.0L831.5 94.0L831.0 94.1L830.5 94.1L830.0 94.0L829.5 94.0L829.0 94.0L828.5 94.3L828.0 94.0L827.5 94.0L827.0 94.0L826.5 94.1L826.0 94.2L825.5 94.0L825.0 94.1L824.5 94.0L824.0 94.1L823.5 94.0L823.0 94.1L822.5 94.3L822.0 94.0L821.5 94.0L821.0 94.4L820.5 94.2L820.0 94.2L819.5 94.1L819.0 94.2L818.5 94.3L818.0 94.4L817.5 94.2L817.0 94.5L816.5 94.2L816.0 94.2L815.5 94.3L815.0 94.4L814.5 94.6L814.0 94.5L813.5 94.3L813.0 94.4L812.5 94.4L812.0 94.4L811.5 94.3L811.0 94.9L810.5 94.6L810.0 94.9L809.5 94.6L809.0 94.3L808.5 95.1L808.0 95.1L807.5 94.5L807.0 94.5L806.5 94.5L806.0 94.8L805.5 94.4L805.0 94.3L804.5 94.3L804.0 94.3L803.5 94.4L803.0 94.5L802.5 94.5L802.0 94.4L801.5 94.5L801.0 94.7L800.5 94.9L800.0 94.4L799.5 94.3L799.0 95.0L798.5 94.7L798.0 94.2L797.5 94.4L797.0 94.5L796.5 94.3L796.0 94.3L795.5 94.4L795.0 94.3L794.5 94.3L794.0 94.3L793.5 94.4L793.0 94.4L792.5 94.3L792.0 94.3L791.5 94.7L791.0 94.2L790.5 94.3L790.0 94.4L789.5 94.4L789.0 94.5L788.5 94.9L788.0 94.4L787.5 94.4L787.0 94.3L786.5 94.5L786.0 94.5L785.5 94.4L785.0 94.5L784.5 94.4L784.0 94.5L783.5 94.6L783.0 95.1L782.5 94.7L782.0 94.4L781.5 95.1L781.0 94.4L780.5 94.5L780.0 94.5L779.5 94.8L779.0 94.6L778.5 94.8L778.0 95.1L777.5 94.9L777.0 95.8L776.5 95.2L776.0 95.1L775.5 95.2L775.0 95.4L774.5 95.4L774.0 95.4L773.5 95.6L773.0 95.6L772.5 95.4L772.0 95.7L771.5 95.8L771.0 95.7L770.5 96.4L770.0 95.8L769.5 96.6L769.0 97.5L768.5 95.9L768.0 95.8L767.5 96.3L767.0 96.3L766.5 95.9L766.0 96.1L765.5 96.2L765.0 97.0L764.5 97.3L764.0 99.1L763.5 97.3L763.0 96.6L762.5 99.7L762.0 97.5L761.5 97.3L761.0 97.0L760.5 100.7L760.0 98.8L759.5 100.5L759.0 101.1L758.5 98.8L758.0 99.3L757.5 99.2L757.0 100.1L756.5 99.5L756.0 99.5L755.5 99.6L755.0 99.1L754.5 100.5L754.0 101.1L753.5 100.1L753.0 100.5L752.5 100.5L752.0 101.8L751.5 100.4L751.0 104.1L750.5 100.5L750.0 99.7L749.5 99.4L749.0 98.7L748.5 98.2L748.0 99.2L747.5 100.5L747.0 98.9L746.5 98.5L746.0 98.3L745.5 98.2L745.0 97.8L744.5 97.3L744.0 98.0L743.5 96.7L743.0 96.4L742.5 96.4L742.0 95.7L741.5 96.5L741.0 96.6L740.5 96.1L740.0 96.6L739.5 97.2L739.0 97.6L738.5 98.4L738.0 97.3L737.5 97.3L737.0 97.6L736.5 97.8L736.0 97.0L735.5 97.9L735.0 101.0L734.5 99.6L734.0 101.0L733.5 101.2L733.0 97.9L732.5 98.0L732.0 99.2L731.5 100.5L731.0 98.4L730.5 100.1L730.0 99.1L729.5 101.4L729.0 102.0L728.5 98.7L728.0 105.1L727.5 100.1L727.0 99.2L726.5 99.2L726.0 99.7L725.5 100.3L725.0 103.6L724.5 102.6L724.0 99.4L723.5 99.9L723.0 100.3L722.5 99.2L722.0 98.4L721.5 97.3L721.0 96.1L720.5 98.1L720.0 95.8L719.5 96.2L719.0 96.4L718.5 96.4L718.0 96.6L717.5 97.2L717.0 97.3L716.5 98.6L716.0 97.0L715.5 96.9L715.0 97.3L714.5 97.1L714.0 97.5L713.5 96.9L713.0 99.3L712.5 98.6L712.0 98.7L711.5 97.2L711.0 97.7L710.5 97.5L710.0 97.3L709.5 97.9L709.0 98.8L708.5 101.9L708.0 101.9L707.5 97.7L707.0 99.0L706.5 99.4L706.0 99.1L705.5 99.2L705.0 102.0L704.5 99.7L704.0 99.0L703.5 99.1L703.0 98.5L702.5 98.2L702.0 98.0L701.5 98.7L701.0 100.1L700.5 99.6L700.0 100.5L699.5 102.1L699.0 98.9L698.5 99.4L698.0 100.3L697.5 102.6L697.0 99.4L696.5 100.6L696.0 101.4L695.5 101.6L695.0 104.0L694.5 98.3L694.0 98.8L693.5 99.3L693.0 97.8L692.5 98.4L692.0 99.8L691.5 102.3L691.0 97.8L690.5 97.7L690.0 98.0L689.5 97.9L689.0 97.1L688.5 95.3L688.0 97.2L687.5 96.0L687.0 96.0L686.5 96.4L686.0 95.9L685.5 96.1L685.0 97.2L684.5 95.8L684.0 96.1L683.5 96.4L683.0 95.9L682.5 96.7L682.0 97.8L681.5 97.3L681.0 97.6L680.5 98.7L680.0 96.9L679.5 96.2L679.0 96.2L678.5 96.7L678.0 97.4L677.5 99.0L677.0 97.1L676.5 96.6L676.0 96.6L675.5 97.0L675.0 97.3L674.5 96.9L674.0 97.0L673.5 99.8L673.0 97.2L672.5 97.3L672.0 97.5L671.5 101.1L671.0 97.9L670.5 97.8L670.0 98.4L669.5 100.5L669.0 100.4L668.5 99.2L668.0 99.3L667.5 99.7L667.0 100.0L666.5 99.5L666.0 99.7L665.5 99.3L665.0 100.1L664.5 98.1L664.0 99.8L663.5 98.0L663.0 98.0L662.5 99.7L662.0 97.8L661.5 98.7L661.0 98.1L660.5 98.7L660.0 99.5L659.5 99.3L659.0 97.8L658.5 97.9L658.0 98.8L657.5 97.5L657.0 97.7L656.5 98.3L656.0 98.4L655.5 98.6L655.0 98.2L654.5 98.9L654.0 99.5L653.5 98.2L653.0 98.4L652.5 101.9L652.0 99.0L651.5 98.0L651.0 101.2L650.5 99.1L650.0 102.4L649.5 102.3L649.0 99.2L648.5 98.1L648.0 98.3L647.5 98.0L647.0 98.3L646.5 102.5L646.0 99.7L645.5 99.4L645.0 99.0L644.5 99.7L644.0 99.5L643.5 99.5L643.0 99.5L642.5 99.3L642.0 99.3L641.5 98.7L641.0 100.3L640.5 102.1L640.0 98.6L639.5 100.5L639.0 104.6L638.5 101.1L638.0 102.4L637.5 103.7L637.0 99.4L636.5 104.1L636.0 104.3L635.5 101.0L635.0 101.2L634.5 102.4L634.0 103.0L633.5 100.0L633.0 98.7L632.5 99.4L632.0 99.8L631.5 98.4L631.0 99.8L630.5 99.3L630.0 99.7L629.5 99.6L629.0 99.6L628.5 99.0L628.0 98.8L627.5 99.4L627.0 101.3L626.5 101.0L626.0 98.7L625.5 99.1L625.0 99.2L624.5 98.1L624.0 99.0L623.5 99.3L623.0 99.2L622.5 98.0L622.0 99.0L621.5 98.4L621.0 98.9L620.5 98.7L620.0 97.5L619.5 100.9L619.0 96.7L618.5 97.0L618.0 98.1L617.5 98.3L617.0 97.8L616.5 98.4L616.0 99.3L615.5 99.8L615.0 100.4L614.5 98.2L614.0 98.4L613.5 97.5L613.0 98.2L612.5 99.5L612.0 102.6L611.5 99.9L611.0 101.9L610.5 99.4L610.0 99.6L609.5 99.3L609.0 99.3L608.5 101.0L608.0 102.1L607.5 99.2L607.0 99.8L606.5 99.7L606.0 100.2L605.5 99.9L605.0 100.4L604.5 99.4L604.0 101.2L603.5 103.4L603.0 101.1L602.5 100.9L602.0 102.6L601.5 99.1L601.0 99.7L600.5 99.6L600.0 100.4L599.5 99.9L599.0 100.7L598.5 100.1L598.0 101.8L597.5 98.6L597.0 99.5L596.5 99.6L596.0 98.8L595.5 98.6L595.0 99.9L594.5 98.9L594.0 99.5L593.5 99.7L593.0 103.1L592.5 101.5L592.0 99.5L591.5 99.1L591.0 98.8L590.5 99.4L590.0 100.2L589.5 100.9L589.0 99.5L588.5 99.2L588.0 99.4L587.5 99.9L587.0 99.7L586.5 100.1L586.0 99.9L585.5 98.9L585.0 98.8L584.5 98.7L584.0 98.6L583.5 98.9L583.0 99.8L582.5 100.4L582.0 98.0L581.5 98.3L581.0 98.3L580.5 97.9L580.0 98.3L579.5 98.6L579.0 102.1L578.5 98.7L578.0 99.3L577.5 100.3L577.0 98.9L576.5 99.0L576.0 99.9L575.5 101.1L575.0 97.9L574.5 99.3L574.0 98.9L573.5 98.4L573.0 99.3L572.5 99.5L572.0 99.6L571.5 99.9L571.0 97.4L570.5 97.3L570.0 96.1L569.5 97.8L569.0 97.0L568.5 95.7L568.0 96.0L567.5 96.7L567.0 96.4L566.5 99.1L566.0 96.7L565.5 97.5L565.0 98.4L564.5 97.0L564.0 97.3L563.5 97.3L563.0 97.6L562.5 97.7L562.0 98.0L561.5 97.4L561.0 97.7L560.5 98.0L560.0 101.6L559.5 97.7L559.0 97.8L558.5 98.1L558.0 98.4L557.5 98.6L557.0 97.8L556.5 98.1L556.0 98.6L555.5 100.1L555.0 100.7L554.5 98.4L554.0 97.5L553.5 98.0L553.0 98.8L552.5 98.6L552.0 101.6L551.5 98.7L551.0 100.2L550.5 98.8L550.0 97.9L549.5 98.6L549.0 98.3L548.5 98.8L548.0 98.0L547.5 98.5L547.0 99.4L546.5 99.2L546.0 100.8L545.5 99.0L545.0 98.4L544.5 102.2L544.0 99.1L543.5 99.2L543.0 98.2L542.5 98.5L542.0 100.1L541.5 100.9L541.0 100.5L540.5 99.1L540.0 99.2L539.5 98.6L539.0 97.9L538.5 99.7L538.0 99.0L537.5 99.2L537.0 100.6L536.5 101.5L536.0 100.1L535.5 99.4L535.0 99.3L534.5 100.0L534.0 98.4L533.5 98.0L533.0 99.1L532.5 98.9L532.0 103.2L531.5 98.8L531.0 99.5L530.5 98.1L530.0 100.2L529.5 101.0L529.0 97.5L528.5 97.7L528.0 97.2L527.5 98.7L527.0 98.0L526.5 98.6L526.0 98.1L525.5 98.5L525.0 97.3L524.5 97.3L524.0 97.6L523.5 98.6L523.0 99.7L522.5 97.1L522.0 97.6L521.5 97.6L521.0 97.5L520.5 97.2L520.0 98.5L519.5 98.0L519.0 98.6L518.5 102.2L518.0 98.3L517.5 100.0L517.0 98.0L516.5 97.7L516.0 99.1L515.5 103.8L515.0 98.2L514.5 103.8L514.0 98.4L513.5 99.9L513.0 100.2L512.5 100.3L512.0 99.2L511.5 101.3L511.0 100.0L510.5 100.3L510.0 99.5L509.5 100.0L509.0 99.5L508.5 98.9L508.0 98.4L507.5 98.6L507.0 99.7L506.5 99.4L506.0 99.8L505.5 100.6L505.0 97.8L504.5 98.8L504.0 98.2L503.5 98.8L503.0 97.5L502.5 98.4L502.0 96.5L501.5 100.1L501.0 97.1L500.5 96.6L500.0 97.2L499.5 96.7L499.0 96.7L498.5 97.1L498.0 97.6L497.5 98.1L497.0 98.3L496.5 98.2L496.0 99.9L495.5 97.0L495.0 97.0L494.5 97.1L494.0 97.7L493.5 96.8L493.0 97.2L492.5 98.5L492.0 98.8L491.5 98.7L491.0 98.8L490.5 99.4L490.0 100.2L489.5 99.5L489.0 98.4L488.5 98.9L488.0 99.3L487.5 100.4L487.0 100.8L486.5 98.1L486.0 98.6L485.5 98.0L485.0 97.7L484.5 97.6L484.0 101.8L483.5 99.2L483.0 98.1L482.5 97.8L482.0 98.2L481.5 98.0L481.0 97.7L480.5 98.5L480.0 97.9L479.5 98.5L479.0 98.6L478.5 96.8L478.0 97.2L477.5 97.8L477.0 95.3L476.5 95.3L476.0 96.9L475.5 95.8L475.0 96.4L474.5 96.1L474.0 96.5L473.5 96.0L473.0 96.6L472.5 98.2L472.0 96.5L471.5 96.3L471.0 96.9L470.5 96.7L470.0 96.9L469.5 97.0L469.0 97.1L468.5 96.9L468.0 97.1L467.5 97.4L467.0 97.5L466.5 97.5L466.0 98.2L465.5 99.9L465.0 98.3L464.5 97.2L464.0 97.6L463.5 98.6L463.0 97.3L462.5 97.5L462.0 98.1L461.5 98.1L461.0 101.5L460.5 98.0L460.0 98.5L459.5 99.8L459.0 99.1L458.5 99.2L458.0 99.9L457.5 101.7L457.0 100.6L456.5 101.8L456.0 102.2L455.5 100.4L455.0 100.5L454.5 99.8L454.0 99.4L453.5 100.3L453.0 101.5L452.5 98.7L452.0 98.9L451.5 98.6L451.0 97.7L450.5 97.8L450.0 96.6L449.5 95.3L449.0 95.4L448.5 95.8L448.0 95.8L447.5 96.1L447.0 97.1L446.5 96.1L446.0 96.5L445.5 98.3L445.0 96.6L444.5 97.4L444.0 98.7L443.5 96.9L443.0 97.4L442.5 97.2L442.0 97.7L441.5 97.7L441.0 97.8L440.5 97.8L440.0 98.0L439.5 97.9L439.0 97.9L438.5 100.0L438.0 97.9L437.5 97.8L437.0 97.4L436.5 101.0L436.0 98.1L435.5 97.7L435.0 98.9L434.5 99.4L434.0 97.5L433.5 96.5L433.0 97.2L432.5 97.4L432.0 97.5L431.5 97.2L431.0 97.1L430.5 98.1L430.0 98.3L429.5 99.1L429.0 99.5L428.5 99.0L428.0 97.4L427.5 98.9L427.0 98.6L426.5 98.7L426.0 99.2L425.5 99.0L425.0 100.4L424.5 99.6L424.0 100.0L423.5 98.9L423.0 99.2L422.5 98.1L422.0 99.5L421.5 99.3L421.0 100.3L420.5 100.7L420.0 97.6L419.5 97.9L419.0 96.7L418.5 95.5L418.0 96.2L417.5 95.3L417.0 95.5L416.5 95.6L416.0 95.6L415.5 95.8L415.0 98.2L414.5 96.3L414.0 96.3L413.5 97.1L413.0 96.6L412.5 98.0L412.0 96.8L411.5 96.1L411.0 97.3L410.5 96.7L410.0 97.1L409.5 97.8L409.0 97.7L408.5 99.1L408.0 97.5L407.5 100.5L407.0 100.2L406.5 97.3L406.0 97.1L405.5 98.0L405.0 98.0L404.5 97.6L404.0 97.9L403.5 98.7L403.0 99.8L402.5 99.6L402.0 98.4L401.5 97.5L401.0 98.4L400.5 98.6L400.0 98.1L399.5 99.2L399.0 98.3L398.5 98.7L398.0 100.0L397.5 101.7L397.0 99.0L396.5 98.5L396.0 99.2L395.5 98.6L395.0 99.7L394.5 102.8L394.0 98.9L393.5 102.0L393.0 99.0L392.5 98.8L392.0 98.2L391.5 98.7L391.0 98.9L390.5 98.6L390.0 98.9L389.5 100.0L389.0 99.4L388.5 98.0L388.0 101.7L387.5 97.6L387.0 98.7L386.5 100.2L386.0 98.9L385.5 97.9L385.0 96.5L384.5 97.5L384.0 97.1L383.5 96.8L383.0 97.4L382.5 97.4L382.0 96.4L381.5 96.4L381.0 96.3L380.5 95.8L380.0 96.4L379.5 97.1L379.0 95.9L378.5 96.3L378.0 97.8L377.5 98.7L377.0 96.3L376.5 96.8L376.0 96.5L375.5 96.4L375.0 98.8L374.5 99.0L374.0 96.1L373.5 98.8L373.0 97.2L372.5 96.9L372.0 96.9L371.5 98.3L371.0 96.8L370.5 97.2L370.0 97.2L369.5 97.4L369.0 96.8L368.5 96.7L368.0 99.1L367.5 97.4L367.0 97.2L366.5 97.4L366.0 96.8L365.5 96.9L365.0 97.1L364.5 96.9L364.0 97.3L363.5 97.6L363.0 97.6L362.5 100.2L362.0 98.0L361.5 100.1L361.0 96.6L360.5 99.0L360.0 96.6L359.5 95.9L359.0 95.7L358.5 96.1L358.0 95.9L357.5 97.7L357.0 96.2L356.5 96.4L356.0 96.4L355.5 96.8L355.0 97.3L354.5 97.9L354.0 96.4L353.5 96.8L353.0 97.9L352.5 96.5L352.0 97.2L351.5 96.9L351.0 97.2L350.5 97.7L350.0 97.4L349.5 96.9L349.0 100.8L348.5 96.7L348.0 97.6L347.5 97.3L347.0 98.3L346.5 97.1L346.0 98.1L345.5 98.4L345.0 98.4L344.5 99.0L344.0 100.0L343.5 101.3L343.0 97.8L342.5 98.7L342.0 98.9L341.5 97.1L341.0 96.8L340.5 97.4L340.0 100.0L339.5 98.0L339.0 98.2L338.5 97.8L338.0 97.8L337.5 97.3L337.0 97.9L336.5 99.6L336.0 100.4L335.5 98.1L335.0 96.5L334.5 96.5L334.0 99.6L333.5 97.3L333.0 97.4L332.5 97.3L332.0 98.7L331.5 96.4L331.0 97.0L330.5 96.4L330.0 96.1L329.5 96.4L329.0 96.9L328.5 97.1L328.0 95.2L327.5 95.2L327.0 95.9L326.5 95.9L326.0 95.7L325.5 96.6L325.0 96.8L324.5 96.3L324.0 96.5L323.5 96.8L323.0 96.2L322.5 96.4L322.0 97.0L321.5 96.9L321.0 96.2L320.5 100.0L320.0 96.4L319.5 96.9L319.0 97.6L318.5 97.8L318.0 97.4L317.5 97.2L317.0 97.9L316.5 99.0L316.0 98.8L315.5 97.6L315.0 98.0L314.5 97.1L314.0 97.5L313.5 98.0L313.0 97.7L312.5 97.6L312.0 97.7L311.5 98.8L311.0 99.1L310.5 98.1L310.0 101.0L309.5 99.0L309.0 97.7L308.5 100.4L308.0 96.6L307.5 97.4L307.0 96.8L306.5 96.9L306.0 97.3L305.5 97.0L305.0 100.0L304.5 98.0L304.0 99.3L303.5 97.4L303.0 96.7L302.5 97.4L302.0 99.4L301.5 98.0L301.0 97.2L300.5 96.6L300.0 96.8L299.5 98.0L299.0 96.8L298.5 94.9L298.0 95.4L297.5 95.3L297.0 95.6L296.5 95.6L296.0 95.7L295.5 96.4L295.0 95.4L294.5 95.8L294.0 97.0L293.5 96.9L293.0 96.1L292.5 95.9L292.0 98.2L291.5 96.5L291.0 96.6L290.5 96.5L290.0 97.0L289.5 96.6L289.0 97.3L288.5 96.6L288.0 98.1L287.5 96.9L287.0 96.2L286.5 96.4L286.0 97.1L285.5 96.7L285.0 96.7L284.5 96.7L284.0 96.8L283.5 97.0L283.0 97.4L282.5 99.0L282.0 97.8L281.5 97.1L281.0 97.6L280.5 97.2L280.0 97.1L279.5 97.3L279.0 98.5L278.5 99.3L278.0 97.1L277.5 97.5L277.0 98.2L276.5 98.1L276.0 98.3L275.5 98.0L275.0 97.6L274.5 97.7L274.0 99.5L273.5 99.9L273.0 97.2L272.5 97.1L272.0 98.0L271.5 98.6L271.0 98.3L270.5 98.5L270.0 97.3L269.5 102.1L269.0 97.9L268.5 100.7L268.0 97.7L267.5 98.1L267.0 97.7L266.5 101.7L266.0 98.4L265.5 98.5L265.0 99.4L264.5 97.9L264.0 97.6L263.5 100.7L263.0 98.3L262.5 98.8L262.0 99.3L261.5 100.3L261.0 100.7L260.5 101.5L260.0 97.7L259.5 98.6L259.0 99.1L258.5 98.8L258.0 99.3L257.5 97.6L257.0 97.5L256.5 97.8L256.0 97.9L255.5 97.3L255.0 100.8L254.5 97.7L254.0 98.4L253.5 99.4L253.0 96.8L252.5 97.5L252.0 97.7L251.5 97.5L251.0 97.7L250.5 98.5L250.0 97.1L249.5 96.8L249.0 96.9L248.5 96.5L248.0 96.7L247.5 95.9L247.0 95.4L246.5 95.8L246.0 95.7L245.5 96.0L245.0 96.0L244.5 95.8L244.0 95.6L243.5 95.6L243.0 95.7L242.5 95.9L242.0 95.8L241.5 95.8L241.0 96.1L240.5 95.8L240.0 96.4L239.5 96.9L239.0 96.1L238.5 96.0L238.0 96.3L237.5 96.1L237.0 96.4L236.5 96.1L236.0 97.8L235.5 96.4L235.0 97.0L234.5 96.0L234.0 96.3L233.5 96.6L233.0 98.0L232.5 97.2L232.0 97.4L231.5 98.5L231.0 96.3L230.5 96.9L230.0 96.3L229.5 96.8L229.0 96.2L228.5 96.6L228.0 97.1L227.5 96.5L227.0 96.5L226.5 96.5L226.0 96.3L225.5 96.4L225.0 97.9L224.5 96.3L224.0 96.1L223.5 96.0L223.0 95.5L222.5 95.9L222.0 96.4L221.5 95.6L221.0 97.3L220.5 95.6L220.0 95.8L219.5 97.5L219.0 95.9L218.5 96.5L218.0 96.5L217.5 96.3L217.0 96.9L216.5 96.8L216.0 97.6L215.5 96.5L215.0 96.4L214.5 96.9L214.0 96.5L213.5 96.4L213.0 99.7L212.5 97.2L212.0 97.0L211.5 96.9L211.0 96.7L210.5 97.4L210.0 96.8L209.5 98.9L209.0 96.5L208.5 97.2L208.0 96.8L207.5 98.0L207.0 98.6L206.5 96.1L206.0 98.9L205.5 96.5L205.0 97.0L204.5 97.2L204.0 96.9L203.5 97.3L203.0 97.5L202.5 96.5L202.0 95.9L201.5 95.9L201.0 96.2L200.5 96.0L200.0 96.4L199.5 96.3L199.0 96.0L198.5 96.3L198.0 96.7L197.5 98.0L197.0 96.6L196.5 96.1L196.0 97.3L195.5 96.8L195.0 97.5L194.5 97.7L194.0 95.0L193.5 95.2L193.0 95.6L192.5 96.0L192.0 95.6L191.5 95.0L191.0 95.7L190.5 95.6L190.0 95.8L189.5 95.7L189.0 95.8L188.5 95.7L188.0 95.6L187.5 95.9L187.0 96.1L186.5 96.5L186.0 95.6L185.5 95.8L185.0 95.9L184.5 95.5L184.0 96.0L183.5 95.8L183.0 95.6L182.5 96.5L182.0 95.9L181.5 95.6L181.0 95.6L180.5 95.6L180.0 96.0L179.5 96.3L179.0 95.4L178.5 95.5L178.0 95.6L177.5 95.7L177.0 95.6L176.5 95.8L176.0 96.0L175.5 95.9L175.0 96.4L174.5 95.5L174.0 96.1L173.5 98.0L173.0 96.2L172.5 98.4L172.0 98.2L171.5 96.8L171.0 98.8L170.5 96.5L170.0 95.9L169.5 96.3L169.0 96.4L168.5 96.7L168.0 96.0L167.5 96.7L167.0 96.6L166.5 97.4L166.0 97.1L165.5 97.1L165.0 97.1L164.5 97.1L164.0 97.1L163.5 98.8L163.0 96.3L162.5 96.9L162.0 96.1L161.5 97.0L161.0 96.6L160.5 97.2L160.0 97.5L159.5 98.2L159.0 96.1L158.5 96.1L158.0 96.8L157.5 99.1L157.0 96.3L156.5 96.3L156.0 96.4L155.5 96.8L155.0 96.9L154.5 96.5L154.0 96.6L153.5 96.3L153.0 95.8L152.5 96.5L152.0 96.1L151.5 96.8L151.0 96.9L150.5 96.3L150.0 96.3L149.5 96.6L149.0 97.2L148.5 97.6L148.0 96.2L147.5 96.4L147.0 96.7L146.5 95.8L146.0 96.3L145.5 96.0L145.0 95.9L144.5 96.0L144.0 96.4L143.5 98.3L143.0 96.6L142.5 99.2L142.0 96.3L141.5 96.6L141.0 97.9L140.5 96.8L140.0 96.7L139.5 96.4L139.0 97.1L138.5 97.4L138.0 97.6L137.5 97.4L137.0 97.8L136.5 97.0L136.0 97.2L135.5 96.9L135.0 96.8L134.5 96.9L134.0 96.3L133.5 97.1L133.0 97.0L132.5 97.4L132.0 97.7L131.5 96.6L131.0 96.4L130.5 96.3L130.0 96.5L129.5 95.5L129.0 95.3L128.5 95.4L128.0 95.1L127.5 95.3L127.0 95.5L126.5 95.6L126.0 95.9L125.5 96.4L125.0 96.4L124.5 95.6L124.0 95.3L123.5 95.7L123.0 95.6L122.5 96.3L122.0 95.7L121.5 96.1L121.0 96.8L120.5 96.6L120.0 95.4L119.5 95.7L119.0 96.0L118.5 96.1L118.0 96.0L117.5 96.1L117.0 96.1L116.5 96.3L116.0 96.2L115.5 96.7L115.0 97.9L114.5 96.2L114.0 96.0L113.5 96.0L113.0 96.7L112.5 97.3L112.0 98.0L111.5 96.5L111.0 96.6L110.5 96.3L110.0 96.9L109.5 97.2L109.0 99.2L108.5 96.9L108.0 97.3L107.5 97.1L107.0 98.2L106.5 98.1L106.0 99.0L105.5 97.4L105.0 96.6L104.5 97.0L104.0 97.1L103.5 99.6L103.0 97.2L102.5 97.6L102.0 97.8L101.5 97.7L101.0 97.4L100.5 97.9L100.0 99.3L99.5 98.9L99.0 96.2L98.5 96.6L98.0 95.7L97.5 95.9L97.0 95.6L96.5 96.3L96.0 96.3L95.5 96.2L95.0 95.9L94.5 96.5L94.0 96.3L93.5 97.1L93.0 95.8L92.5 97.2L92.0 95.9L91.5 95.6L91.0 97.0L90.5 96.0L90.0 95.8L89.5 95.2L89.0 95.5L88.5 95.9L88.0 95.4L87.5 95.5L87.0 95.8L86.5 96.6L86.0 95.4L85.5 95.2L85.0 95.5L84.5 95.7L84.0 95.9L83.5 97.0L83.0 95.6L82.5 95.6L82.0 96.3L81.5 96.3L81.0 96.1L80.5 98.2L80.0 95.6L79.5 96.4L79.0 96.5L78.5 96.4L78.0 96.9L77.5 96.3L77.0 97.5L76.5 96.5L76.0 95.9L75.5 96.2L75.0 96.2L74.5 96.3L74.0 96.5L73.5 96.5L73.0 96.0L72.5 96.4L72.0 96.2L71.5 95.8L71.0 96.7L70.5 96.4L70.0 96.3L69.5 96.4L69.0 97.2L68.5 96.1L68.0 95.5L67.5 95.8L67.0 95.3L66.5 94.9L66.0 94.9L65.5 95.1L65.0 95.2L64.5 95.4L64.0 95.2L63.5 95.2L63.0 95.8L62.5 96.0L62.0 95.5L61.5 95.2L61.0 95.3L60.5 95.1L60.0 95.5L59.5 95.2L59.0 95.7L58.5 95.8L58.0 96.4L57.5 95.7L57.0 95.7L56.5 95.4L56.0 95.7L55.5 96.0L55.0 96.6L54.5 96.9L54.0 96.2L53.5 97.1L53.0 96.6L52.5 96.7L52.0 96.9L51.5 96.4L51.0 96.2L50.5 96.6L50.0 97.6L49.5 97.6L49.0 95.8L48.5 96.4L48.0 96.4L47.5 95.9L47.0 95.9L46.5 97.1L46.0 98.0L45.5 96.3L45.0 95.9L44.5 96.1L44.0 96.5L43.5 96.4L43.0 95.8L42.5 95.8L42.0 96.0L41.5 96.0L41.0 95.7L40.5 96.9L40.0 95.9L39.5 96.0L39.0 95.3L38.5 96.3L38.0 95.2L37.5 95.4L37.0 95.3L36.5 95.2L36.0 95.0L35.5 94.8Z" fill="#a6a6b0"/><rect x="490.6" y="82" width="1" height="23.5" fill="#d8262c"/></svg>
<svg style="left:46.00px;top:89.50px;width:790px;height:15px;" viewBox="80 112 790 15" width="790" height="15"><rect x="82.90" y="117.2" width="0.9" height="8.5" fill="#c9cace"/><rect x="97.52" y="123.2" width="0.7" height="2.5" fill="#9a9ca2"/><rect x="112.09" y="123.2" width="0.7" height="2.5" fill="#9a9ca2"/><rect x="126.66" y="123.2" width="0.7" height="2.5" fill="#9a9ca2"/><rect x="141.23" y="123.2" width="0.7" height="2.5" fill="#9a9ca2"/><rect x="155.80" y="123.2" width="0.7" height="2.5" fill="#9a9ca2"/><rect x="170.37" y="123.2" width="0.7" height="2.5" fill="#9a9ca2"/><rect x="184.94" y="123.2" width="0.7" height="2.5" fill="#9a9ca2"/><rect x="199.51" y="123.2" width="0.7" height="2.5" fill="#9a9ca2"/><rect x="214.08" y="123.2" width="0.7" height="2.5" fill="#9a9ca2"/><rect x="228.60" y="117.2" width="0.9" height="8.5" fill="#c9cace"/><rect x="243.22" y="123.2" width="0.7" height="2.5" fill="#9a9ca2"/><rect x="257.79" y="123.2" width="0.7" height="2.5" fill="#9a9ca2"/><rect x="272.36" y="123.2" width="0.7" height="2.5" fill="#9a9ca2"/><rect x="286.93" y="123.2" width="0.7" height="2.5" fill="#9a9ca2"/><rect x="301.50" y="123.2" width="0.7" height="2.5" fill="#9a9ca2"/><rect x="316.07" y="123.2" width="0.7" height="2.5" fill="#9a9ca2"/><rect x="330.64" y="123.2" width="0.7" height="2.5" fill="#9a9ca2"/><rect x="345.21" y="123.2" width="0.7" height="2.5" fill="#9a9ca2"/><rect x="359.78" y="123.2" width="0.7" height="2.5" fill="#9a9ca2"/><rect x="374.30" y="117.2" width="0.9" height="8.5" fill="#c9cace"/><rect x="388.92" y="123.2" width="0.7" height="2.5" fill="#9a9ca2"/><rect x="403.49" y="123.2" width="0.7" height="2.5" fill="#9a9ca2"/><rect x="418.06" y="123.2" width="0.7" height="2.5" fill="#9a9ca2"/><rect x="432.63" y="123.2" width="0.7" height="2.5" fill="#9a9ca2"/><rect x="447.20" y="123.2" width="0.7" height="2.5" fill="#9a9ca2"/><rect x="461.77" y="123.2" width="0.7" height="2.5" fill="#9a9ca2"/><rect x="476.34" y="123.2" width="0.7" height="2.5" fill="#9a9ca2"/><rect x="490.91" y="123.2" width="0.7" height="2.5" fill="#9a9ca2"/><rect x="505.48" y="123.2" width="0.7" height="2.5" fill="#9a9ca2"/><rect x="520.00" y="117.2" width="0.9" height="8.5" fill="#c9cace"/><rect x="534.62" y="123.2" width="0.7" height="2.5" fill="#9a9ca2"/><rect x="549.19" y="123.2" width="0.7" height="2.5" fill="#9a9ca2"/><rect x="563.76" y="123.2" width="0.7" height="2.5" fill="#9a9ca2"/><rect x="578.33" y="123.2" width="0.7" height="2.5" fill="#9a9ca2"/><rect x="592.90" y="123.2" width="0.7" height="2.5" fill="#9a9ca2"/><rect x="607.47" y="123.2" width="0.7" height="2.5" fill="#9a9ca2"/><rect x="622.04" y="123.2" width="0.7" height="2.5" fill="#9a9ca2"/><rect x="636.61" y="123.2" width="0.7" height="2.5" fill="#9a9ca2"/><rect x="651.18" y="123.2" width="0.7" height="2.5" fill="#9a9ca2"/><rect x="665.70" y="117.2" width="0.9" height="8.5" fill="#c9cace"/><rect x="680.32" y="123.2" width="0.7" height="2.5" fill="#9a9ca2"/><rect x="694.89" y="123.2" width="0.7" height="2.5" fill="#9a9ca2"/><rect x="709.46" y="123.2" width="0.7" height="2.5" fill="#9a9ca2"/><rect x="724.03" y="123.2" width="0.7" height="2.5" fill="#9a9ca2"/><rect x="738.60" y="123.2" width="0.7" height="2.5" fill="#9a9ca2"/><rect x="753.17" y="123.2" width="0.7" height="2.5" fill="#9a9ca2"/><rect x="767.74" y="123.2" width="0.7" height="2.5" fill="#9a9ca2"/><rect x="782.31" y="123.2" width="0.7" height="2.5" fill="#9a9ca2"/><rect x="796.88" y="123.2" width="0.7" height="2.5" fill="#9a9ca2"/><rect x="811.40" y="117.2" width="0.9" height="8.5" fill="#c9cace"/><rect x="826.02" y="123.2" width="0.7" height="2.5" fill="#9a9ca2"/><rect x="840.59" y="123.2" width="0.7" height="2.5" fill="#9a9ca2"/><rect x="855.16" y="123.2" width="0.7" height="2.5" fill="#9a9ca2"/></svg>
<div class="t" style="left:51.60px;top:93.68px;font-size:6.2px;line-height:8.68px;color:#c6c7cb;font-weight:normal;">00:00:00:000</div>
<div class="t" style="left:197.30px;top:93.68px;font-size:6.2px;line-height:8.68px;color:#c6c7cb;font-weight:normal;">00:00:10:000</div>
<div class="t" style="left:343.00px;top:93.68px;font-size:6.2px;line-height:8.68px;color:#c6c7cb;font-weight:normal;">00:00:20:000</div>
<div class="t" style="left:488.70px;top:93.68px;font-size:6.2px;line-height:8.68px;color:#c6c7cb;font-weight:normal;">00:00:30:000</div>
<div class="t" style="left:634.40px;top:93.68px;font-size:6.2px;line-height:8.68px;color:#c6c7cb;font-weight:normal;">00:00:40:000</div>
<div class="t" style="left:780.10px;top:93.68px;font-size:6.2px;line-height:8.68px;color:#c6c7cb;font-weight:normal;">00:00:50:000</div>
<div style="left:49.30px;top:103.30px;width:778.50px;height:89.80px;background:#1b1b20"></div>
<div class="t" style="left:13.60px;width:30px;text-align:right;top:104.09px;font-size:6.6px;line-height:9.24px;color:#c8c9cd;font-weight:normal;">-1</div>
<div style="left:44.50px;top:108.35px;width:4.50px;height:0.70px;background:#7e8086"></div>
<div class="t" style="left:13.60px;width:30px;text-align:right;top:118.69px;font-size:6.6px;line-height:9.24px;color:#c8c9cd;font-weight:normal;">-5</div>
<div style="left:44.50px;top:122.95px;width:4.50px;height:0.70px;background:#7e8086"></div>
<div class="t" style="left:13.60px;width:30px;text-align:right;top:131.19px;font-size:6.6px;line-height:9.24px;color:#c8c9cd;font-weight:normal;">-11</div>
<div style="left:44.50px;top:135.45px;width:4.50px;height:0.70px;background:#7e8086"></div>
<div class="t" style="left:13.60px;width:30px;text-align:right;top:143.89px;font-size:6.6px;line-height:9.24px;color:#c8c9cd;font-weight:normal;">-o<span style="margin-left:-1.3px">o</span></div>
<div style="left:44.50px;top:148.15px;width:4.50px;height:0.70px;background:#7e8086"></div>
<div class="t" style="left:13.60px;width:30px;text-align:right;top:156.19px;font-size:6.6px;line-height:9.24px;color:#c8c9cd;font-weight:normal;">-11</div>
<div style="left:44.50px;top:160.45px;width:4.50px;height:0.70px;background:#7e8086"></div>
<div class="t" style="left:13.60px;width:30px;text-align:right;top:168.69px;font-size:6.6px;line-height:9.24px;color:#c8c9cd;font-weight:normal;">-5</div>
<div style="left:44.50px;top:172.95px;width:4.50px;height:0.70px;background:#7e8086"></div>
<div class="t" style="left:13.60px;width:30px;text-align:right;top:183.29px;font-size:6.6px;line-height:9.24px;color:#c8c9cd;font-weight:normal;">-1</div>
<div style="left:44.50px;top:187.55px;width:4.50px;height:0.70px;background:#7e8086"></div>
<svg style="left:49.30px;top:103.30px;width:778.5px;height:89.8px;" viewBox="83.3 125.8 778.5 89.8" width="778.5" height="89.8"><defs><clipPath id="sel1"><rect x="439.6" y="125.8" width="278" height="89.8"/></clipPath></defs><rect x="439.6" y="125.8" width="278" height="89.8" fill="#1f2b3a"/><path d="M83.3 167.0L83.8 165.7L84.3 164.9L84.8 165.3L85.3 165.0L85.8 163.9L86.3 163.9L86.8 165.2L87.3 164.4L87.8 165.3L88.3 163.8L88.8 163.0L89.3 162.0L89.8 163.8L90.3 158.8L90.8 157.5L91.3 159.7L91.8 161.5L92.3 159.6L92.8 160.4L93.3 160.6L93.8 160.1L94.3 160.1L94.8 162.4L95.3 157.5L95.8 159.2L96.3 160.5L96.8 159.9L97.3 161.3L97.8 163.7L98.3 160.7L98.8 162.1L99.3 162.7L99.8 157.9L100.3 161.4L100.8 156.8L101.3 163.6L101.8 162.0L102.3 164.6L102.8 163.0L103.3 162.9L103.8 162.7L104.3 160.8L104.8 163.2L105.3 162.5L105.8 160.0L106.3 162.1L106.8 164.6L107.3 163.3L107.8 165.6L108.3 164.5L108.8 164.7L109.3 164.1L109.8 164.8L110.3 164.9L110.8 165.0L111.3 165.2L111.8 165.6L112.3 164.0L112.8 162.8L113.3 164.1L113.8 163.7L114.3 159.9L114.8 158.3L115.3 159.1L115.8 161.0L116.3 162.3L116.8 161.4L117.3 162.5L117.8 160.9L118.3 160.6L118.8 162.8L119.3 160.9L119.8 160.1L120.3 160.0L120.8 161.4L121.3 159.8L121.8 159.7L122.3 161.1L122.8 162.5L123.3 160.6L123.8 160.2L124.3 161.1L124.8 163.3L125.3 162.3L125.8 159.1L126.3 161.1L126.8 160.1L127.3 161.4L127.8 162.4L128.3 162.7L128.8 162.9L129.3 163.0L129.8 163.2L130.3 162.0L130.8 158.0L131.3 162.5L131.8 163.0L132.3 163.6L132.8 163.2L133.3 163.5L133.8 163.4L134.3 163.0L134.8 162.4L135.3 163.4L135.8 160.3L136.3 162.3L136.8 163.0L137.3 163.5L137.8 161.4L138.3 162.4L138.8 162.6L139.3 162.7L139.8 162.5L140.3 162.2L140.8 155.0L141.3 157.8L141.8 159.5L142.3 157.3L142.8 155.8L143.3 156.1L143.8 157.1L144.3 158.9L144.8 156.9L145.3 158.9L145.8 144.6L146.3 146.2L146.8 156.5L147.3 154.2L147.8 154.0L148.3 152.3L148.8 153.6L149.3 145.3L149.8 150.1L150.3 155.0L150.8 158.3L151.3 158.5L151.8 156.0L152.3 156.7L152.8 157.4L153.3 160.2L153.8 157.6L154.3 151.4L154.8 156.8L155.3 157.8L155.8 156.8L156.3 158.6L156.8 161.7L157.3 161.2L157.8 161.7L158.3 160.6L158.8 161.8L159.3 161.0L159.8 163.2L160.3 162.4L160.8 162.3L161.3 155.5L161.8 160.5L162.3 162.3L162.8 161.5L163.3 161.0L163.8 162.3L164.3 157.7L164.8 162.8L165.3 165.0L165.8 164.3L166.3 164.8L166.8 162.5L167.3 163.3L167.8 165.4L168.3 159.9L168.8 165.8L169.3 159.7L169.8 163.0L170.3 160.5L170.8 155.0L171.3 157.6L171.8 157.1L172.3 157.5L172.8 160.6L173.3 159.1L173.8 159.9L174.3 157.7L174.8 158.4L175.3 160.8L175.8 158.7L176.3 149.4L176.8 151.3L177.3 155.1L177.8 157.2L178.3 158.1L178.8 150.3L179.3 158.4L179.8 159.1L180.3 157.7L180.8 154.6L181.3 157.7L181.8 158.0L182.3 158.9L182.8 159.7L183.3 159.7L183.8 157.0L184.3 160.6L184.8 159.3L185.3 162.8L185.8 161.6L186.3 161.8L186.8 163.0L187.3 154.3L187.8 161.9L188.3 161.8L188.8 161.9L189.3 160.6L189.8 154.4L190.3 155.4L190.8 154.0L191.3 158.7L191.8 160.6L192.3 159.6L192.8 158.9L193.3 160.4L193.8 159.4L194.3 159.5L194.8 153.9L195.3 150.9L195.8 149.3L196.3 157.8L196.8 161.1L197.3 158.9L197.8 159.1L198.3 161.2L198.8 160.8L199.3 160.4L199.8 161.0L200.3 156.5L200.8 157.9L201.3 156.2L201.8 151.9L202.3 154.6L202.8 157.2L203.3 145.4L203.8 157.4L204.3 158.9L204.8 159.1L205.3 159.1L205.8 159.0L206.3 157.8L206.8 157.0L207.3 159.8L207.8 159.8L208.3 160.5L208.8 155.1L209.3 159.1L209.8 161.2L210.3 161.8L210.8 160.8L211.3 163.9L211.8 163.6L212.3 163.1L212.8 162.4L213.3 163.2L213.8 163.2L214.3 164.8L214.8 164.6L215.3 165.4L215.8 165.1L216.3 164.1L216.8 163.5L217.3 164.5L217.8 163.0L218.3 162.4L218.8 163.3L219.3 162.2L219.8 163.6L220.3 163.8L220.8 160.7L221.3 162.7L221.8 161.3L222.3 163.0L222.8 162.9L223.3 161.9L223.8 158.9L224.3 163.7L224.8 164.7L225.3 161.6L225.8 163.5L226.3 164.6L226.8 163.0L227.3 163.1L227.8 164.1L228.3 164.6L228.8 166.1L229.3 166.6L229.8 162.7L230.3 156.8L230.8 157.0L231.3 156.7L231.8 158.8L232.3 158.0L232.8 161.0L233.3 161.7L233.8 160.4L234.3 161.1L234.8 160.5L235.3 161.2L235.8 162.5L236.3 157.7L236.8 161.9L237.3 159.1L237.8 160.1L238.3 158.0L238.8 158.9L239.3 159.3L239.8 158.7L240.3 159.7L240.8 156.0L241.3 156.8L241.8 155.3L242.3 156.5L242.8 156.5L243.3 152.1L243.8 149.4L244.3 155.2L244.8 149.4L245.3 147.3L245.8 156.5L246.3 157.9L246.8 148.6L247.3 155.8L247.8 159.1L248.3 156.9L248.8 157.3L249.3 157.8L249.8 160.0L250.3 150.4L250.8 151.8L251.3 159.1L251.8 161.1L252.3 163.1L252.8 161.5L253.3 157.8L253.8 162.4L254.3 162.8L254.8 164.6L255.3 164.8L255.8 164.4L256.3 164.8L256.8 163.8L257.3 162.7L257.8 162.0L258.3 161.3L258.8 162.8L259.3 162.2L259.8 161.9L260.3 159.7L260.8 160.1L261.3 156.0L261.8 159.0L262.3 159.2L262.8 158.0L263.3 160.3L263.8 157.9L264.3 160.4L264.8 160.0L265.3 159.3L265.8 159.6L266.3 161.1L266.8 160.1L267.3 150.5L267.8 158.1L268.3 160.7L268.8 160.6L269.3 160.9L269.8 163.3L270.3 160.9L270.8 157.9L271.3 160.3L271.8 159.6L272.3 160.5L272.8 161.2L273.3 163.3L273.8 162.7L274.3 162.6L274.8 164.4L275.3 162.6L275.8 163.1L276.3 162.7L276.8 161.0L277.3 163.0L277.8 163.3L278.3 162.5L278.8 159.3L279.3 159.7L279.8 158.0L280.3 158.1L280.8 159.9L281.3 158.4L281.8 157.4L282.3 156.7L282.8 159.6L283.3 159.1L283.8 148.1L284.3 149.8L284.8 152.7L285.3 153.5L285.8 155.7L286.3 155.2L286.8 154.4L287.3 141.3L287.8 157.6L288.3 157.3L288.8 157.0L289.3 143.8L289.8 150.1L290.3 152.7L290.8 150.6L291.3 151.6L291.8 155.7L292.3 144.7L292.8 148.6L293.3 154.1L293.8 148.8L294.3 153.1L294.8 149.1L295.3 140.6L295.8 153.7L296.3 156.0L296.8 153.3L297.3 155.6L297.8 149.3L298.3 149.1L298.8 152.8L299.3 154.7L299.8 151.9L300.3 153.3L300.8 136.5L301.3 149.7L301.8 146.7L302.3 148.4L302.8 149.7L303.3 151.7L303.8 153.0L304.3 153.9L304.8 154.3L305.3 146.9L305.8 145.8L306.3 147.8L306.8 154.4L307.3 155.0L307.8 153.5L308.3 155.0L308.8 155.6L309.3 146.8L309.8 151.5L310.3 152.2L310.8 140.3L311.3 151.2L311.8 154.6L312.3 157.8L312.8 155.2L313.3 157.1L313.8 155.3L314.3 156.3L314.8 147.7L315.3 159.1L315.8 158.0L316.3 148.3L316.8 151.2L317.3 155.6L317.8 156.1L318.3 160.0L318.8 160.0L319.3 162.4L319.8 159.9L320.3 160.9L320.8 159.1L321.3 161.0L321.8 161.1L322.3 158.3L322.8 162.2L323.3 163.8L323.8 165.0L324.3 164.6L324.8 162.3L325.3 164.8L325.8 165.8L326.3 160.2L326.8 160.0L327.3 154.6L327.8 156.2L328.3 154.3L328.8 155.6L329.3 158.5L329.8 156.5L330.3 157.0L330.8 157.6L331.3 157.8L331.8 159.4L332.3 147.5L332.8 149.6L333.3 150.0L333.8 143.2L334.3 154.0L334.8 143.3L335.3 158.5L335.8 155.9L336.3 152.6L336.8 154.7L337.3 157.9L337.8 152.5L338.3 150.1L338.8 152.4L339.3 152.1L339.8 148.4L340.3 151.0L340.8 149.4L341.3 151.9L341.8 154.2L342.3 155.6L342.8 151.7L343.3 152.3L343.8 150.5L344.3 155.6L344.8 155.8L345.3 148.9L345.8 153.6L346.3 154.7L346.8 155.5L347.3 157.9L347.8 155.4L348.3 158.7L348.8 159.6L349.3 159.1L349.8 157.4L350.3 161.2L350.8 154.0L351.3 161.7L351.8 162.8L352.3 163.7L352.8 158.1L353.3 161.9L353.8 160.5L354.3 158.8L354.8 159.7L355.3 150.7L355.8 151.6L356.3 153.2L356.8 157.1L357.3 155.2L357.8 156.2L358.3 155.4L358.8 155.5L359.3 152.1L359.8 152.3L360.3 156.0L360.8 155.6L361.3 157.0L361.8 157.8L362.3 154.6L362.8 154.3L363.3 148.0L363.8 142.9L364.3 154.4L364.8 151.9L365.3 153.3L365.8 151.7L366.3 152.0L366.8 152.1L367.3 155.1L367.8 155.8L368.3 157.5L368.8 153.3L369.3 153.4L369.8 148.6L370.3 147.9L370.8 151.3L371.3 153.7L371.8 151.6L372.3 152.9L372.8 141.1L373.3 155.2L373.8 153.8L374.3 158.2L374.8 158.0L375.3 157.4L375.8 158.1L376.3 151.2L376.8 154.1L377.3 156.5L377.8 158.7L378.3 161.0L378.8 160.4L379.3 161.0L379.8 161.8L380.3 163.9L380.8 162.9L381.3 159.4L381.8 160.0L382.3 155.6L382.8 155.3L383.3 150.7L383.8 156.9L384.3 155.2L384.8 154.9L385.3 155.2L385.8 157.5L386.3 157.5L386.8 155.6L387.3 155.2L387.8 155.1L388.3 155.0L388.8 148.7L389.3 156.9L389.8 154.7L390.3 158.8L390.8 156.6L391.3 159.6L391.8 158.5L392.3 160.7L392.8 158.2L393.3 158.0L393.8 158.1L394.3 156.6L394.8 158.5L395.3 160.4L395.8 159.5L396.3 155.9L396.8 158.7L397.3 158.8L397.8 159.3L398.3 159.8L398.8 160.3L399.3 161.2L399.8 154.0L400.3 160.5L400.8 160.6L401.3 162.1L401.8 160.2L402.3 160.3L402.8 160.1L403.3 161.8L403.8 162.3L404.3 159.3L404.8 156.7L405.3 156.2L405.8 155.4L406.3 145.3L406.8 153.1L407.3 142.5L407.8 149.2L408.3 148.1L408.8 148.6L409.3 138.2L409.8 152.0L410.3 150.6L410.8 155.0L411.3 152.4L411.8 134.0L412.3 148.9L412.8 137.9L413.3 144.3L413.8 152.4L414.3 146.7L414.8 146.5L415.3 151.0L415.8 149.9L416.3 152.1L416.8 147.3L417.3 130.2L417.8 149.9L418.3 137.9L418.8 147.2L419.3 132.9L419.8 145.6L420.3 146.8L420.8 148.6L421.3 149.0L421.8 149.5L422.3 136.5L422.8 147.3L423.3 138.6L423.8 153.5L424.3 151.1L424.8 154.6L425.3 137.1L425.8 151.8L426.3 157.5L426.8 151.6L427.3 150.9L427.8 154.3L428.3 146.1L428.8 155.8L429.3 156.1L429.8 160.8L430.3 159.3L430.8 159.4L431.3 157.5L431.8 158.2L432.3 161.1L432.8 161.4L433.3 161.5L433.8 162.6L434.3 158.1L434.8 163.7L435.3 163.8L435.8 164.1L436.3 165.7L436.8 165.0L437.3 157.6L437.8 147.0L438.3 147.8L438.8 147.6L439.3 133.0L439.8 146.7L440.3 146.1L440.8 145.9L441.3 130.2L441.8 144.1L442.3 145.1L442.8 148.4L443.3 145.7L443.8 143.9L444.3 146.3L444.8 152.8L445.3 149.4L445.8 155.2L446.3 150.9L446.8 149.0L447.3 150.0L447.8 149.9L448.3 151.8L448.8 153.8L449.3 157.0L449.8 143.2L450.3 158.0L450.8 157.0L451.3 149.1L451.8 150.6L452.3 156.0L452.8 156.8L453.3 152.9L453.8 153.6L454.3 153.8L454.8 154.9L455.3 146.3L455.8 150.2L456.3 151.7L456.8 155.0L457.3 153.7L457.8 153.8L458.3 142.8L458.8 152.5L459.3 152.3L459.8 155.3L460.3 155.4L460.8 158.5L461.3 159.1L461.8 151.4L462.3 162.0L462.8 161.0L463.3 162.0L463.8 162.9L464.3 161.2L464.8 164.5L465.3 164.4L465.8 160.7L466.3 151.7L466.8 149.0L467.3 147.0L467.8 144.8L468.3 150.9L468.8 142.9L469.3 140.9L469.8 130.2L470.3 130.7L470.8 144.8L471.3 130.2L471.8 144.8L472.3 141.1L472.8 143.6L473.3 151.2L473.8 144.8L474.3 148.2L474.8 141.9L475.3 143.6L475.8 150.1L476.3 151.6L476.8 146.8L477.3 149.2L477.8 153.3L478.3 150.3L478.8 156.5L479.3 152.3L479.8 155.2L480.3 157.8L480.8 157.0L481.3 152.2L481.8 151.1L482.3 155.4L482.8 154.9L483.3 159.6L483.8 157.6L484.3 157.0L484.8 160.8L485.3 151.7L485.8 159.5L486.3 160.4L486.8 159.4L487.3 160.8L487.8 162.4L488.3 163.5L488.8 162.3L489.3 163.7L489.8 164.9L490.3 163.7L490.8 160.4L491.3 158.7L491.8 154.6L492.3 155.2L492.8 154.3L493.3 157.8L493.8 153.5L494.3 151.8L494.8 156.0L495.3 154.1L495.8 149.9L496.3 150.7L496.8 148.0L497.3 154.0L497.8 150.5L498.3 152.6L498.8 149.1L499.3 130.6L499.8 147.1L500.3 150.0L500.8 148.7L501.3 153.4L501.8 140.1L502.3 148.2L502.8 150.3L503.3 152.1L503.8 153.4L504.3 142.6L504.8 154.1L505.3 154.6L505.8 155.7L506.3 154.0L506.8 156.3L507.3 154.9L507.8 155.8L508.3 150.7L508.8 152.6L509.3 155.0L509.8 153.1L510.3 156.1L510.8 156.6L511.3 156.1L511.8 156.2L512.3 155.8L512.8 147.8L513.3 157.4L513.8 156.4L514.3 148.7L514.8 153.2L515.3 148.2L515.8 133.5L516.3 152.2L516.8 148.9L517.3 146.2L517.8 151.8L518.3 140.6L518.8 140.7L519.3 144.3L519.8 145.3L520.3 143.6L520.8 147.5L521.3 143.6L521.8 135.0L522.3 143.2L522.8 137.5L523.3 139.2L523.8 140.6L524.3 148.3L524.8 149.0L525.3 149.3L525.8 148.2L526.3 133.6L526.8 142.3L527.3 146.5L527.8 146.2L528.3 146.2L528.8 148.2L529.3 150.7L529.8 153.2L530.3 139.4L530.8 143.7L531.3 152.1L531.8 151.6L532.3 154.0L532.8 155.5L533.3 146.7L533.8 157.8L534.3 155.8L534.8 156.0L535.3 143.4L535.8 146.8L536.3 147.7L536.8 147.6L537.3 153.8L537.8 150.7L538.3 148.5L538.8 152.1L539.3 152.7L539.8 151.0L540.3 152.1L540.8 148.0L541.3 145.1L541.8 143.4L542.3 145.1L542.8 143.6L543.3 132.0L543.8 147.6L544.3 147.3L544.8 149.7L545.3 141.8L545.8 150.5L546.3 147.4L546.8 145.8L547.3 148.3L547.8 152.4L548.3 146.0L548.8 150.6L549.3 147.6L549.8 146.9L550.3 146.1L550.8 140.6L551.3 147.9L551.8 144.2L552.3 149.5L552.8 151.7L553.3 149.1L553.8 145.8L554.3 151.8L554.8 137.2L555.3 147.2L555.8 147.2L556.3 145.6L556.8 147.3L557.3 150.4L557.8 150.9L558.3 144.1L558.8 146.5L559.3 150.4L559.8 149.3L560.3 151.3L560.8 151.2L561.3 153.4L561.8 150.0L562.3 150.8L562.8 149.3L563.3 154.1L563.8 151.4L564.3 152.3L564.8 152.8L565.3 140.3L565.8 145.6L566.3 152.3L566.8 149.6L567.3 150.7L567.8 153.2L568.3 156.9L568.8 155.3L569.3 155.1L569.8 155.0L570.3 158.5L570.8 157.4L571.3 151.5L571.8 157.4L572.3 154.3L572.8 156.3L573.3 160.1L573.8 160.5L574.3 160.7L574.8 160.7L575.3 162.0L575.8 162.7L576.3 154.9L576.8 163.0L577.3 154.1L577.8 149.9L578.3 152.1L578.8 149.3L579.3 146.2L579.8 149.7L580.3 145.4L580.8 146.0L581.3 148.8L581.8 131.4L582.3 143.1L582.8 143.4L583.3 146.0L583.8 145.1L584.3 149.0L584.8 147.5L585.3 153.5L585.8 150.1L586.3 150.3L586.8 152.8L587.3 149.4L587.8 142.7L588.3 150.1L588.8 149.4L589.3 150.3L589.8 149.8L590.3 142.8L590.8 140.6L591.3 146.5L591.8 146.0L592.3 143.1L592.8 130.2L593.3 149.5L593.8 145.5L594.3 141.6L594.8 148.4L595.3 148.7L595.8 148.1L596.3 147.4L596.8 144.2L597.3 146.1L597.8 143.7L598.3 146.6L598.8 146.2L599.3 142.6L599.8 141.3L600.3 130.2L600.8 131.3L601.3 137.1L601.8 138.7L602.3 143.2L602.8 144.4L603.3 139.9L603.8 148.9L604.3 141.1L604.8 141.1L605.3 142.8L605.8 145.8L606.3 139.4L606.8 144.8L607.3 140.5L607.8 148.0L608.3 141.2L608.8 144.3L609.3 147.7L609.8 142.1L610.3 143.3L610.8 147.2L611.3 143.9L611.8 146.3L612.3 133.5L612.8 138.5L613.3 141.9L613.8 147.8L614.3 151.7L614.8 151.2L615.3 149.1L615.8 153.6L616.3 137.7L616.8 141.1L617.3 138.7L617.8 150.6L618.3 138.6L618.8 151.8L619.3 152.2L619.8 154.1L620.3 157.5L620.8 140.8L621.3 157.0L621.8 143.9L622.3 148.6L622.8 145.7L623.3 153.3L623.8 147.8L624.3 136.6L624.8 148.7L625.3 130.2L625.8 146.6L626.3 147.4L626.8 151.0L627.3 151.4L627.8 144.0L628.3 143.8L628.8 144.3L629.3 130.2L629.8 130.2L630.3 140.6L630.8 130.2L631.3 135.3L631.8 136.9L632.3 130.2L632.8 142.3L633.3 147.5L633.8 145.5L634.3 130.2L634.8 138.5L635.3 136.6L635.8 136.6L636.3 135.8L636.8 142.9L637.3 143.9L637.8 142.6L638.3 147.0L638.8 143.8L639.3 141.1L639.8 147.5L640.3 143.3L640.8 146.8L641.3 147.0L641.8 130.2L642.3 138.2L642.8 130.2L643.3 140.1L643.8 132.9L644.3 141.6L644.8 144.9L645.3 146.7L645.8 145.8L646.3 150.5L646.8 141.5L647.3 144.6L647.8 144.2L648.3 144.7L648.8 138.8L649.3 149.0L649.8 146.3L650.3 145.2L650.8 152.5L651.3 148.6L651.8 150.9L652.3 153.3L652.8 149.8L653.3 139.7L653.8 143.4L654.3 147.9L654.8 153.1L655.3 153.4L655.8 141.0L656.3 151.1L656.8 150.9L657.3 149.7L657.8 131.9L658.3 150.5L658.8 139.2L659.3 146.2L659.8 143.4L660.3 146.2L660.8 144.9L661.3 149.9L661.8 146.3L662.3 139.5L662.8 139.8L663.3 144.0L663.8 142.9L664.3 142.4L664.8 150.0L665.3 144.0L665.8 148.6L666.3 151.8L666.8 147.8L667.3 148.4L667.8 148.4L668.3 153.5L668.8 150.1L669.3 153.8L669.8 151.5L670.3 149.4L670.8 152.0L671.3 154.9L671.8 155.1L672.3 154.3L672.8 156.4L673.3 159.5L673.8 143.5L674.3 155.8L674.8 157.7L675.3 150.0L675.8 154.8L676.3 155.0L676.8 158.9L677.3 158.2L677.8 161.3L678.3 160.4L678.8 152.2L679.3 156.1L679.8 160.0L680.3 159.1L680.8 152.4L681.3 163.2L681.8 162.7L682.3 162.5L682.8 163.4L683.3 160.2L683.8 160.5L684.3 162.0L684.8 163.1L685.3 160.6L685.8 163.3L686.3 156.8L686.8 154.3L687.3 151.3L687.8 154.5L688.3 149.3L688.8 154.2L689.3 148.0L689.8 147.8L690.3 151.9L690.8 148.5L691.3 137.8L691.8 137.0L692.3 139.5L692.8 140.3L693.3 145.1L693.8 142.3L694.3 140.6L694.8 145.4L695.3 147.5L695.8 144.8L696.3 144.2L696.8 145.7L697.3 146.9L697.8 148.3L698.3 145.4L698.8 147.3L699.3 141.6L699.8 142.9L700.3 151.2L700.8 147.9L701.3 150.0L701.8 151.9L702.3 151.3L702.8 151.0L703.3 152.6L703.8 155.0L704.3 153.9L704.8 147.2L705.3 148.4L705.8 149.3L706.3 143.3L706.8 155.1L707.3 155.5L707.8 154.6L708.3 159.4L708.8 157.2L709.3 156.4L709.8 151.2L710.3 152.8L710.8 156.1L711.3 157.4L711.8 158.2L712.3 161.3L712.8 161.3L713.3 156.5L713.8 158.7L714.3 159.9L714.8 161.0L715.3 162.7L715.8 160.7L716.3 159.9L716.8 155.8L717.3 148.5L717.8 146.5L718.3 145.3L718.8 149.4L719.3 144.6L719.8 137.5L720.3 141.7L720.8 144.1L721.3 138.9L721.8 148.8L722.3 148.5L722.8 137.5L723.3 140.3L723.8 147.5L724.3 149.8L724.8 146.1L725.3 151.2L725.8 149.9L726.3 148.6L726.8 148.5L727.3 153.4L727.8 133.9L728.3 153.7L728.8 139.4L729.3 155.4L729.8 157.1L730.3 142.3L730.8 157.6L731.3 159.4L731.8 156.7L732.3 158.8L732.8 157.8L733.3 157.6L733.8 153.1L734.3 158.6L734.8 159.0L735.3 160.1L735.8 160.3L736.3 161.4L736.8 151.9L737.3 153.9L737.8 151.3L738.3 149.1L738.8 148.3L739.3 152.3L739.8 149.1L740.3 146.5L740.8 149.2L741.3 144.6L741.8 144.6L742.3 146.8L742.8 144.1L743.3 147.5L743.8 130.2L744.3 140.9L744.8 148.5L745.3 143.8L745.8 130.2L746.3 149.1L746.8 146.5L747.3 150.6L747.8 149.6L748.3 146.8L748.8 130.2L749.3 141.7L749.8 145.2L750.3 148.3L750.8 150.5L751.3 153.1L751.8 154.0L752.3 150.6L752.8 150.4L753.3 153.5L753.8 154.9L754.3 149.7L754.8 153.0L755.3 157.6L755.8 158.2L756.3 159.1L756.8 158.8L757.3 158.6L757.8 159.5L758.3 160.0L758.8 163.3L759.3 161.4L759.8 161.9L760.3 156.9L760.8 162.4L761.3 160.1L761.8 161.5L762.3 161.9L762.8 161.7L763.3 162.9L763.8 162.0L764.3 162.1L764.8 164.6L765.3 164.4L765.8 164.3L766.3 165.3L766.8 165.4L767.3 165.6L767.8 166.0L768.3 166.8L768.8 166.1L769.3 167.3L769.8 167.2L770.3 165.0L770.8 168.1L771.3 168.4L771.8 167.0L772.3 168.2L772.8 168.2L773.3 167.1L773.8 167.5L774.3 167.7L774.8 168.4L775.3 168.2L775.8 168.1L776.3 168.3L776.8 169.0L777.3 167.9L777.8 168.7L778.3 168.3L778.8 168.5L779.3 168.5L779.8 168.5L780.3 168.8L780.8 168.6L781.3 167.8L781.8 168.5L782.3 168.5L782.8 168.7L783.3 168.9L783.8 169.0L784.3 168.9L784.8 168.6L785.3 169.0L785.8 167.3L786.3 169.3L786.8 169.2L787.3 168.8L787.8 168.8L788.3 168.4L788.8 168.7L789.3 168.7L789.8 168.7L790.3 168.0L790.8 168.1L791.3 168.6L791.8 168.7L792.3 168.3L792.8 166.7L793.3 167.9L793.8 168.5L794.3 168.2L794.8 168.2L795.3 168.4L795.8 168.1L796.3 168.3L796.8 168.3L797.3 168.1L797.8 168.1L798.3 168.4L798.8 168.8L799.3 168.3L799.8 168.6L800.3 169.0L800.8 168.6L801.3 168.8L801.8 168.8L802.3 168.5L802.8 168.5L803.3 167.6L803.8 168.9L804.3 169.2L804.8 169.2L805.3 169.3L805.8 169.7L806.3 169.8L806.8 169.6L807.3 169.8L807.8 169.7L808.3 169.5L808.8 169.8L809.3 170.0L809.8 169.9L810.3 169.4L810.8 170.0L811.3 169.9L811.8 170.1L812.3 170.1L812.8 169.7L813.3 169.8L813.8 170.0L814.3 170.0L814.8 170.1L815.3 170.1L815.8 170.2L816.3 170.3L816.8 170.2L817.3 170.2L817.8 170.2L818.3 170.2L818.8 170.0L819.3 170.1L819.8 170.3L820.3 170.3L820.8 170.1L821.3 170.3L821.8 170.3L822.3 170.3L822.8 170.3L823.3 170.3L823.8 170.3L824.3 170.0L824.8 170.2L825.3 170.3L825.8 170.3L826.3 170.3L826.8 170.3L827.3 170.3L827.8 170.3L828.3 170.3L828.8 170.3L829.3 170.3L829.8 170.3L830.3 170.3L830.8 170.3L831.3 170.3L831.8 170.2L832.3 170.3L832.8 170.1L833.3 170.1L833.8 170.2L834.3 170.3L834.8 170.3L835.3 170.3L835.8 170.3L836.3 170.3L836.8 170.3L837.3 170.3L837.8 170.1L838.3 170.2L838.8 170.3L839.3 170.3L839.8 170.3L840.3 170.3L840.8 170.3L841.3 170.0L841.8 170.3L842.3 170.3L842.8 170.3L843.3 170.0L843.8 170.1L844.3 170.3L844.8 170.3L845.3 170.0L845.8 170.3L846.3 170.3L846.8 170.3L847.3 170.3L847.8 170.3L848.3 170.3L848.8 170.3L849.3 170.3L849.8 170.1L850.3 170.3L850.8 170.3L851.3 170.3L851.8 170.3L852.3 170.3L852.8 170.3L853.3 170.3L853.8 170.2L854.3 170.1L854.8 170.3L855.3 170.3L855.8 170.3L856.3 170.3L856.8 170.3L857.3 170.3L857.8 170.3L858.3 170.3L858.8 170.3L859.3 170.3L859.8 170.3L860.3 170.3L860.8 170.3L861.3 170.3L861.8 170.3L861.8 171.1L861.3 171.1L860.8 171.1L860.3 171.2L859.8 171.2L859.3 171.1L858.8 171.1L858.3 171.1L857.8 171.1L857.3 171.1L856.8 171.1L856.3 171.1L855.8 171.1L855.3 171.1L854.8 171.1L854.3 171.1L853.8 171.1L853.3 171.1L852.8 171.1L852.3 171.3L851.8 171.1L851.3 171.3L850.8 171.1L850.3 171.1L849.8 171.2L849.3 171.1L848.8 171.1L848.3 171.1L847.8 171.1L847.3 171.1L846.8 171.1L846.3 171.2L845.8 171.1L845.3 171.1L844.8 171.1L844.3 171.1L843.8 171.1L843.3 171.1L842.8 171.1L842.3 171.4L841.8 171.1L841.3 171.3L840.8 171.1L840.3 171.1L839.8 171.1L839.3 171.1L838.8 171.3L838.3 171.1L837.8 171.1L837.3 171.1L836.8 171.1L836.3 171.1L835.8 171.1L835.3 171.1L834.8 171.1L834.3 171.1L833.8 171.1L833.3 171.1L832.8 171.1L832.3 171.1L831.8 171.1L831.3 171.1L830.8 171.3L830.3 171.1L829.8 171.1L829.3 171.1L828.8 171.1L828.3 171.1L827.8 171.1L827.3 171.1L826.8 171.1L826.3 171.4L825.8 171.1L825.3 171.2L824.8 171.1L824.3 171.2L823.8 171.1L823.3 171.1L822.8 171.1L822.3 171.2L821.8 171.1L821.3 171.2L820.8 171.3L820.3 171.1L819.8 171.1L819.3 171.1L818.8 171.1L818.3 171.2L817.8 171.3L817.3 171.1L816.8 171.2L816.3 171.6L815.8 171.4L815.3 171.4L814.8 171.4L814.3 171.8L813.8 171.6L813.3 171.2L812.8 171.9L812.3 171.3L811.8 171.4L811.3 171.3L810.8 171.4L810.3 172.0L809.8 171.4L809.3 171.6L808.8 171.5L808.3 171.9L807.8 172.2L807.3 171.7L806.8 171.8L806.3 172.2L805.8 172.5L805.3 172.1L804.8 171.9L804.3 173.3L803.8 172.1L803.3 172.3L802.8 172.3L802.3 172.5L801.8 172.7L801.3 172.8L800.8 173.0L800.3 173.2L799.8 173.1L799.3 174.5L798.8 172.8L798.3 173.0L797.8 173.2L797.3 173.9L796.8 172.5L796.3 175.3L795.8 175.2L795.3 172.6L794.8 173.2L794.3 172.7L793.8 175.1L793.3 173.4L792.8 173.2L792.3 173.9L791.8 174.4L791.3 172.9L790.8 173.3L790.3 174.8L789.8 172.9L789.3 172.8L788.8 174.3L788.3 172.7L787.8 172.6L787.3 172.6L786.8 172.7L786.3 172.5L785.8 172.5L785.3 172.9L784.8 173.2L784.3 172.2L783.8 172.5L783.3 174.2L782.8 172.7L782.3 172.8L781.8 172.5L781.3 173.0L780.8 174.4L780.3 172.9L779.8 172.5L779.3 172.6L778.8 172.4L778.3 172.4L777.8 172.7L777.3 172.6L776.8 172.5L776.3 174.2L775.8 173.1L775.3 173.6L774.8 173.4L774.3 173.6L773.8 172.5L773.3 172.9L772.8 173.0L772.3 172.6L771.8 172.7L771.3 172.8L770.8 173.8L770.3 173.6L769.8 173.8L769.3 174.5L768.8 174.3L768.3 175.0L767.8 178.7L767.3 175.0L766.8 175.8L766.3 177.6L765.8 178.3L765.3 180.5L764.8 176.7L764.3 176.8L763.8 176.1L763.3 178.8L762.8 178.7L762.3 179.2L761.8 181.5L761.3 177.3L760.8 177.3L760.3 177.8L759.8 178.5L759.3 179.3L758.8 186.4L758.3 182.5L757.8 183.8L757.3 184.2L756.8 182.8L756.3 181.1L755.8 184.9L755.3 184.0L754.8 186.5L754.3 194.1L753.8 183.1L753.3 188.2L752.8 185.1L752.3 190.0L751.8 187.5L751.3 185.7L750.8 191.8L750.3 190.5L749.8 193.4L749.3 195.7L748.8 196.9L748.3 211.2L747.8 199.9L747.3 200.5L746.8 211.2L746.3 202.1L745.8 204.8L745.3 211.2L744.8 194.7L744.3 198.7L743.8 193.9L743.3 192.9L742.8 211.2L742.3 191.2L741.8 194.0L741.3 192.1L740.8 192.5L740.3 195.0L739.8 196.1L739.3 195.0L738.8 210.2L738.3 195.8L737.8 189.5L737.3 198.5L736.8 185.6L736.3 180.0L735.8 182.0L735.3 182.6L734.8 182.5L734.3 181.0L733.8 184.0L733.3 189.4L732.8 185.3L732.3 183.7L731.8 185.8L731.3 184.0L730.8 198.8L730.3 187.1L729.8 202.0L729.3 185.5L728.8 188.6L728.3 189.1L727.8 190.1L727.3 189.4L726.8 189.3L726.3 192.4L725.8 191.2L725.3 195.9L724.8 195.8L724.3 197.7L723.8 201.7L723.3 200.8L722.8 202.7L722.3 195.8L721.8 199.2L721.3 200.6L720.8 201.9L720.3 202.0L719.8 195.4L719.3 204.4L718.8 204.2L718.3 189.1L717.8 190.9L717.3 193.5L716.8 186.7L716.3 180.3L715.8 180.7L715.3 181.2L714.8 179.7L714.3 182.6L713.8 182.4L713.3 183.5L712.8 181.9L712.3 181.0L711.8 183.0L711.3 180.5L710.8 183.0L710.3 182.7L709.8 183.8L709.3 186.9L708.8 182.9L708.3 184.0L707.8 190.4L707.3 195.2L706.8 183.3L706.3 183.7L705.8 186.9L705.3 184.6L704.8 190.1L704.3 193.2L703.8 194.6L703.3 197.9L702.8 203.4L702.3 190.1L701.8 188.3L701.3 190.5L700.8 202.1L700.3 211.2L699.8 194.2L699.3 195.2L698.8 195.8L698.3 197.1L697.8 193.8L697.3 193.5L696.8 196.8L696.3 192.4L695.8 192.9L695.3 197.0L694.8 195.7L694.3 198.2L693.8 199.6L693.3 195.0L692.8 196.6L692.3 194.0L691.8 197.5L691.3 198.5L690.8 211.2L690.3 191.5L689.8 191.9L689.3 192.6L688.8 194.3L688.3 188.9L687.8 188.3L687.3 190.0L686.8 187.3L686.3 182.5L685.8 177.3L685.3 177.8L684.8 178.5L684.3 179.9L683.8 179.9L683.3 180.1L682.8 179.0L682.3 179.5L681.8 186.5L681.3 178.9L680.8 179.6L680.3 182.0L679.8 182.7L679.3 184.0L678.8 183.8L678.3 190.9L677.8 181.6L677.3 181.7L676.8 183.4L676.3 185.7L675.8 189.7L675.3 188.7L674.8 181.4L674.3 186.0L673.8 187.1L673.3 194.4L672.8 191.4L672.3 184.3L671.8 187.3L671.3 188.6L670.8 188.8L670.3 185.7L669.8 190.6L669.3 192.0L668.8 202.1L668.3 194.3L667.8 198.7L667.3 194.3L666.8 189.0L666.3 195.5L665.8 196.2L665.3 196.0L664.8 199.2L664.3 196.7L663.8 195.2L663.3 203.7L662.8 193.8L662.3 197.4L661.8 198.7L661.3 198.8L660.8 193.8L660.3 192.4L659.8 195.1L659.3 193.3L658.8 194.6L658.3 208.1L657.8 190.9L657.3 192.0L656.8 201.0L656.3 190.0L655.8 187.8L655.3 185.8L654.8 186.1L654.3 191.9L653.8 187.9L653.3 202.1L652.8 195.4L652.3 194.3L651.8 196.5L651.3 207.1L650.8 194.3L650.3 209.4L649.8 192.7L649.3 195.2L648.8 191.4L648.3 196.5L647.8 191.6L647.3 197.6L646.8 201.6L646.3 200.1L645.8 194.3L645.3 191.1L644.8 198.6L644.3 199.8L643.8 194.4L643.3 192.8L642.8 194.9L642.3 194.1L641.8 196.2L641.3 196.7L640.8 192.9L640.3 211.2L639.8 196.0L639.3 201.4L638.8 195.3L638.3 201.5L637.8 196.9L637.3 202.2L636.8 199.8L636.3 196.8L635.8 205.7L635.3 210.9L634.8 208.0L634.3 191.5L633.8 196.7L633.3 196.7L632.8 198.5L632.3 197.4L631.8 200.6L631.3 211.2L630.8 196.6L630.3 200.2L629.8 203.2L629.3 211.2L628.8 196.3L628.3 195.8L627.8 197.9L627.3 192.4L626.8 195.7L626.3 193.3L625.8 196.5L625.3 189.7L624.8 195.8L624.3 192.1L623.8 195.6L623.3 194.1L622.8 187.0L622.3 187.3L621.8 188.0L621.3 185.5L620.8 185.8L620.3 191.3L619.8 184.9L619.3 200.1L618.8 190.3L618.3 185.7L617.8 189.6L617.3 204.2L616.8 190.0L616.3 193.7L615.8 198.0L615.3 187.7L614.8 188.7L614.3 192.5L613.8 194.2L613.3 195.4L612.8 192.7L612.3 197.8L611.8 201.4L611.3 200.7L610.8 210.5L610.3 199.8L609.8 193.3L609.3 198.1L608.8 198.8L608.3 202.0L607.8 201.4L607.3 211.2L606.8 202.2L606.3 204.8L605.8 207.6L605.3 198.7L604.8 193.4L604.3 197.0L603.8 204.5L603.3 205.9L602.8 200.2L602.3 211.2L601.8 193.2L601.3 196.2L600.8 194.7L600.3 211.2L599.8 203.0L599.3 193.2L598.8 197.6L598.3 191.7L597.8 192.4L597.3 200.0L596.8 196.8L596.3 199.4L595.8 194.0L595.3 199.9L594.8 197.2L594.3 203.6L593.8 206.4L593.3 195.0L592.8 211.2L592.3 197.1L591.8 195.8L591.3 193.1L590.8 193.8L590.3 189.2L589.8 202.2L589.3 190.8L588.8 192.8L588.3 199.0L587.8 190.3L587.3 194.1L586.8 195.7L586.3 210.4L585.8 199.3L585.3 200.1L584.8 192.3L584.3 194.3L583.8 191.2L583.3 192.6L582.8 192.7L582.3 207.5L581.8 192.0L581.3 208.5L580.8 203.9L580.3 194.9L579.8 195.5L579.3 196.5L578.8 211.2L578.3 192.3L577.8 193.0L577.3 189.5L576.8 178.8L576.3 186.7L575.8 183.1L575.3 184.8L574.8 183.9L574.3 182.6L573.8 186.7L573.3 185.3L572.8 182.3L572.3 194.2L571.8 185.3L571.3 188.1L570.8 191.8L570.3 192.6L569.8 185.5L569.3 184.3L568.8 198.8L568.3 186.9L567.8 186.0L567.3 189.0L566.8 202.3L566.3 187.5L565.8 185.4L565.3 185.5L564.8 189.9L564.3 192.6L563.8 193.1L563.3 201.6L562.8 194.4L562.3 201.3L561.8 201.2L561.3 188.4L560.8 194.2L560.3 192.7L559.8 197.2L559.3 195.9L558.8 203.4L558.3 191.6L557.8 195.5L557.3 199.0L556.8 197.3L556.3 191.4L555.8 194.7L555.3 211.2L554.8 209.6L554.3 194.9L553.8 194.3L553.3 198.4L552.8 200.2L552.3 199.7L551.8 191.5L551.3 191.5L550.8 196.8L550.3 196.4L549.8 191.9L549.3 196.9L548.8 195.0L548.3 189.8L547.8 196.7L547.3 197.2L546.8 194.4L546.3 195.3L545.8 190.0L545.3 192.9L544.8 194.4L544.3 191.0L543.8 190.3L543.3 193.0L542.8 193.5L542.3 188.8L541.8 194.2L541.3 196.8L540.8 192.0L540.3 194.1L539.8 194.6L539.3 201.6L538.8 192.6L538.3 190.4L537.8 186.8L537.3 187.9L536.8 188.8L536.3 186.5L535.8 199.1L535.3 187.8L534.8 192.3L534.3 188.8L533.8 183.8L533.3 185.8L532.8 184.7L532.3 200.1L531.8 188.7L531.3 189.0L530.8 202.0L530.3 191.3L529.8 189.6L529.3 194.5L528.8 194.2L528.3 190.9L527.8 194.7L527.3 191.2L526.8 192.6L526.3 198.1L525.8 199.5L525.3 205.8L524.8 192.9L524.3 196.1L523.8 201.3L523.3 199.9L522.8 203.9L522.3 207.8L521.8 198.9L521.3 194.2L520.8 199.4L520.3 211.2L519.8 204.2L519.3 203.1L518.8 196.5L518.3 195.4L517.8 194.4L517.3 194.0L516.8 204.6L516.3 195.3L515.8 199.6L515.3 186.5L514.8 183.2L514.3 183.4L513.8 184.8L513.3 196.5L512.8 186.7L512.3 195.8L511.8 189.9L511.3 192.2L510.8 184.0L510.3 185.7L509.8 184.7L509.3 189.4L508.8 193.9L508.3 185.3L507.8 195.8L507.3 186.4L506.8 183.6L506.3 186.6L505.8 185.3L505.3 185.5L504.8 202.4L504.3 188.7L503.8 188.6L503.3 192.3L502.8 188.4L502.3 188.8L501.8 192.5L501.3 191.6L500.8 188.6L500.3 192.3L499.8 192.9L499.3 191.0L498.8 192.6L498.3 208.6L497.8 193.3L497.3 191.0L496.8 189.0L496.3 192.4L495.8 189.9L495.3 190.2L494.8 192.9L494.3 196.2L493.8 188.1L493.3 184.0L492.8 185.7L492.3 183.0L491.8 193.4L491.3 181.4L490.8 175.9L490.3 177.4L489.8 177.8L489.3 178.8L488.8 180.1L488.3 185.5L487.8 180.2L487.3 178.5L486.8 180.5L486.3 178.8L485.8 181.5L485.3 181.7L484.8 181.5L484.3 182.5L483.8 182.8L483.3 186.1L482.8 185.5L482.3 182.3L481.8 185.9L481.3 185.9L480.8 200.3L480.3 188.6L479.8 188.8L479.3 189.8L478.8 190.3L478.3 189.6L477.8 194.2L477.3 189.5L476.8 191.4L476.3 190.0L475.8 188.8L475.3 190.4L474.8 194.0L474.3 197.6L473.8 198.4L473.3 202.0L472.8 200.0L472.3 209.8L471.8 192.9L471.3 199.4L470.8 200.2L470.3 196.0L469.8 196.7L469.3 200.8L468.8 195.2L468.3 211.2L467.8 195.2L467.3 210.5L466.8 190.8L466.3 199.5L465.8 180.2L465.3 175.2L464.8 177.1L464.3 178.1L463.8 177.1L463.3 180.0L462.8 179.8L462.3 184.3L461.8 188.8L461.3 180.2L460.8 194.1L460.3 183.5L459.8 184.1L459.3 196.2L458.8 188.1L458.3 191.9L457.8 193.1L457.3 195.0L456.8 188.1L456.3 184.7L455.8 188.1L455.3 185.0L454.8 188.9L454.3 186.2L453.8 187.6L453.3 185.0L452.8 197.6L452.3 187.4L451.8 187.0L451.3 182.7L450.8 186.9L450.3 185.0L449.8 186.5L449.3 187.9L448.8 184.7L448.3 201.4L447.8 191.5L447.3 185.1L446.8 189.2L446.3 206.2L445.8 194.3L445.3 200.5L444.8 188.4L444.3 188.9L443.8 192.7L443.3 192.2L442.8 192.0L442.3 193.5L441.8 196.3L441.3 200.0L440.8 203.5L440.3 211.2L439.8 195.0L439.3 191.7L438.8 196.1L438.3 199.0L437.8 184.7L437.3 184.0L436.8 176.6L436.3 176.2L435.8 177.7L435.3 178.0L434.8 178.2L434.3 184.5L433.8 183.0L433.3 180.1L432.8 180.8L432.3 182.0L431.8 180.3L431.3 181.5L430.8 182.4L430.3 194.1L429.8 182.1L429.3 192.0L428.8 183.7L428.3 185.7L427.8 185.9L427.3 190.7L426.8 188.2L426.3 191.0L425.8 188.6L425.3 194.0L424.8 187.1L424.3 187.5L423.8 189.0L423.3 188.6L422.8 189.6L422.3 190.9L421.8 188.1L421.3 209.1L420.8 189.8L420.3 193.4L419.8 195.3L419.3 192.4L418.8 189.8L418.3 193.7L417.8 191.7L417.3 194.4L416.8 194.2L416.3 194.9L415.8 196.1L415.3 198.2L414.8 195.4L414.3 193.8L413.8 192.9L413.3 189.0L412.8 192.8L412.3 188.0L411.8 189.1L411.3 192.1L410.8 193.7L410.3 193.2L409.8 190.2L409.3 191.2L408.8 187.7L408.3 190.2L407.8 188.8L407.3 184.5L406.8 201.8L406.3 187.6L405.8 188.4L405.3 188.7L404.8 188.1L404.3 182.7L403.8 178.8L403.3 177.8L402.8 179.1L402.3 180.7L401.8 180.7L401.3 179.3L400.8 178.8L400.3 181.6L399.8 181.2L399.3 186.4L398.8 178.7L398.3 180.0L397.8 181.4L397.3 179.7L396.8 181.4L396.3 180.6L395.8 189.6L395.3 184.3L394.8 186.3L394.3 188.4L393.8 182.8L393.3 184.0L392.8 193.4L392.3 181.9L391.8 184.7L391.3 185.0L390.8 184.9L390.3 181.1L389.8 182.2L389.3 193.4L388.8 185.6L388.3 185.3L387.8 185.1L387.3 186.6L386.8 185.2L386.3 186.2L385.8 185.8L385.3 192.7L384.8 184.3L384.3 184.9L383.8 182.8L383.3 182.6L382.8 181.4L382.3 180.6L381.8 177.5L381.3 177.7L380.8 177.6L380.3 179.6L379.8 179.8L379.3 178.9L378.8 180.4L378.3 180.6L377.8 181.3L377.3 182.3L376.8 183.6L376.3 184.3L375.8 195.1L375.3 185.2L374.8 191.1L374.3 185.1L373.8 184.9L373.3 185.4L372.8 182.9L372.3 188.6L371.8 188.3L371.3 190.3L370.8 188.3L370.3 184.6L369.8 189.5L369.3 184.4L368.8 189.1L368.3 189.4L367.8 185.0L367.3 188.7L366.8 189.3L366.3 201.7L365.8 190.7L365.3 187.1L364.8 188.4L364.3 185.3L363.8 184.8L363.3 186.7L362.8 188.7L362.3 187.6L361.8 191.0L361.3 193.1L360.8 182.0L360.3 186.6L359.8 197.3L359.3 185.2L358.8 185.1L358.3 183.3L357.8 185.1L357.3 193.8L356.8 184.0L356.3 182.9L355.8 185.2L355.3 187.0L354.8 181.4L354.3 181.4L353.8 179.0L353.3 177.3L352.8 177.3L352.3 179.6L351.8 178.6L351.3 180.1L350.8 183.3L350.3 180.9L349.8 181.5L349.3 179.2L348.8 182.6L348.3 182.6L347.8 184.8L347.3 182.9L346.8 191.9L346.3 195.2L345.8 184.7L345.3 184.7L344.8 186.6L344.3 200.2L343.8 187.6L343.3 185.8L342.8 189.9L342.3 191.5L341.8 191.5L341.3 202.1L340.8 201.5L340.3 188.2L339.8 188.6L339.3 202.7L338.8 191.3L338.3 189.9L337.8 191.5L337.3 188.2L336.8 184.0L336.3 187.8L335.8 188.3L335.3 186.8L334.8 189.2L334.3 196.0L333.8 189.7L333.3 185.9L332.8 186.1L332.3 183.0L331.8 183.7L331.3 186.2L330.8 187.5L330.3 185.7L329.8 183.4L329.3 182.3L328.8 182.8L328.3 183.5L327.8 184.0L327.3 181.7L326.8 180.3L326.3 180.3L325.8 175.1L325.3 175.8L324.8 177.1L324.3 176.5L323.8 177.9L323.3 177.7L322.8 179.0L322.3 178.0L321.8 180.8L321.3 181.4L320.8 186.1L320.3 180.6L319.8 179.8L319.3 182.1L318.8 183.4L318.3 179.9L317.8 181.8L317.3 191.4L316.8 183.7L316.3 189.6L315.8 189.9L315.3 183.7L314.8 184.8L314.3 185.7L313.8 186.5L313.3 182.7L312.8 184.6L312.3 186.0L311.8 186.4L311.3 186.8L310.8 188.1L310.3 194.0L309.8 198.2L309.3 202.9L308.8 191.4L308.3 190.3L307.8 195.8L307.3 188.1L306.8 190.2L306.3 187.0L305.8 190.2L305.3 187.9L304.8 187.7L304.3 190.5L303.8 189.9L303.3 193.6L302.8 190.9L302.3 189.7L301.8 202.3L301.3 192.7L300.8 193.9L300.3 201.4L299.8 186.9L299.3 190.3L298.8 188.7L298.3 189.9L297.8 189.5L297.3 203.5L296.8 188.2L296.3 193.7L295.8 192.1L295.3 193.0L294.8 187.7L294.3 189.6L293.8 190.3L293.3 189.9L292.8 185.8L292.3 201.0L291.8 187.6L291.3 186.6L290.8 189.0L290.3 191.4L289.8 188.1L289.3 193.7L288.8 187.0L288.3 188.8L287.8 201.6L287.3 186.9L286.8 187.5L286.3 189.0L285.8 199.7L285.3 187.0L284.8 184.7L284.3 185.1L283.8 186.1L283.3 186.1L282.8 187.1L282.3 183.9L281.8 184.9L281.3 182.8L280.8 182.9L280.3 181.2L279.8 184.4L279.3 185.7L278.8 179.8L278.3 177.1L277.8 176.5L277.3 176.3L276.8 176.8L276.3 177.6L275.8 178.9L275.3 183.2L274.8 179.5L274.3 185.0L273.8 180.1L273.3 179.9L272.8 177.7L272.3 177.5L271.8 177.9L271.3 179.7L270.8 177.8L270.3 179.1L269.8 179.1L269.3 179.9L268.8 187.7L268.3 183.2L267.8 181.0L267.3 183.1L266.8 182.2L266.3 182.4L265.8 181.1L265.3 189.9L264.8 181.1L264.3 192.4L263.8 190.4L263.3 190.7L262.8 180.3L262.3 180.2L261.8 183.2L261.3 181.2L260.8 181.6L260.3 183.0L259.8 179.5L259.3 183.4L258.8 180.9L258.3 178.8L257.8 179.5L257.3 178.2L256.8 184.9L256.3 177.5L255.8 177.1L255.3 179.5L254.8 177.7L254.3 178.9L253.8 180.9L253.3 181.7L252.8 179.7L252.3 179.3L251.8 180.5L251.3 181.6L250.8 181.0L250.3 181.5L249.8 182.9L249.3 180.8L248.8 181.7L248.3 185.5L247.8 184.1L247.3 183.5L246.8 181.9L246.3 185.6L245.8 186.1L245.3 187.1L244.8 189.4L244.3 192.2L243.8 182.5L243.3 180.6L242.8 181.2L242.3 181.9L241.8 181.9L241.3 184.1L240.8 181.0L240.3 183.8L239.8 181.9L239.3 184.7L238.8 183.5L238.3 186.4L237.8 179.6L237.3 181.5L236.8 178.8L236.3 178.9L235.8 179.6L235.3 182.2L234.8 185.8L234.3 182.5L233.8 180.9L233.3 180.7L232.8 179.7L232.3 181.8L231.8 183.4L231.3 184.3L230.8 182.8L230.3 183.7L229.8 182.5L229.3 174.8L228.8 175.5L228.3 176.1L227.8 176.4L227.3 175.6L226.8 178.0L226.3 178.5L225.8 180.2L225.3 182.3L224.8 178.1L224.3 178.0L223.8 178.9L223.3 178.1L222.8 180.8L222.3 179.8L221.8 179.8L221.3 179.6L220.8 178.6L220.3 183.2L219.8 179.0L219.3 177.3L218.8 183.2L218.3 178.2L217.8 177.8L217.3 178.6L216.8 178.6L216.3 178.4L215.8 177.6L215.3 178.8L214.8 178.9L214.3 182.2L213.8 178.5L213.3 179.4L212.8 183.9L212.3 179.8L211.8 184.2L211.3 180.0L210.8 180.9L210.3 181.2L209.8 183.1L209.3 181.9L208.8 182.2L208.3 182.0L207.8 183.9L207.3 181.7L206.8 181.6L206.3 184.8L205.8 186.1L205.3 183.8L204.8 188.0L204.3 189.7L203.8 183.3L203.3 184.9L202.8 185.7L202.3 186.4L201.8 187.8L201.3 181.0L200.8 190.1L200.3 190.1L199.8 191.7L199.3 182.4L198.8 184.6L198.3 190.5L197.8 189.3L197.3 181.7L196.8 181.2L196.3 188.3L195.8 181.0L195.3 182.8L194.8 182.6L194.3 183.0L193.8 183.9L193.3 186.4L192.8 182.4L192.3 183.5L191.8 186.5L191.3 180.2L190.8 179.6L190.3 181.3L189.8 179.7L189.3 181.1L188.8 188.6L188.3 189.1L187.8 188.7L187.3 180.6L186.8 179.3L186.3 182.6L185.8 182.1L185.3 180.8L184.8 180.0L184.3 179.8L183.8 182.0L183.3 182.5L182.8 181.5L182.3 181.5L181.8 183.3L181.3 183.9L180.8 184.1L180.3 181.1L179.8 182.9L179.3 183.8L178.8 189.6L178.3 192.9L177.8 183.0L177.3 184.3L176.8 182.4L176.3 184.1L175.8 182.1L175.3 195.5L174.8 183.6L174.3 186.4L173.8 191.8L173.3 186.1L172.8 183.6L172.3 182.8L171.8 185.0L171.3 184.4L170.8 180.1L170.3 179.4L169.8 179.8L169.3 180.8L168.8 176.1L168.3 181.3L167.8 177.1L167.3 177.5L166.8 176.3L166.3 183.6L165.8 177.4L165.3 178.3L164.8 178.7L164.3 176.9L163.8 178.9L163.3 179.2L162.8 179.5L162.3 180.5L161.8 179.0L161.3 177.8L160.8 178.7L160.3 178.6L159.8 178.1L159.3 180.8L158.8 182.4L158.3 180.0L157.8 180.9L157.3 180.4L156.8 181.9L156.3 179.6L155.8 181.0L155.3 191.1L154.8 180.4L154.3 182.1L153.8 184.5L153.3 184.6L152.8 182.7L152.3 184.9L151.8 189.0L151.3 185.2L150.8 187.5L150.3 185.2L149.8 185.1L149.3 185.6L148.8 189.5L148.3 190.2L147.8 191.7L147.3 193.3L146.8 200.7L146.3 183.2L145.8 188.0L145.3 186.1L144.8 183.1L144.3 186.9L143.8 185.6L143.3 191.7L142.8 184.2L142.3 180.9L141.8 181.0L141.3 181.5L140.8 179.2L140.3 180.7L139.8 182.4L139.3 182.2L138.8 178.5L138.3 178.5L137.8 180.3L137.3 180.1L136.8 181.1L136.3 182.9L135.8 179.2L135.3 178.7L134.8 184.7L134.3 178.9L133.8 178.9L133.3 178.4L132.8 178.6L132.3 176.9L131.8 177.7L131.3 182.3L130.8 177.6L130.3 177.4L129.8 179.3L129.3 179.0L128.8 181.6L128.3 184.5L127.8 179.0L127.3 177.2L126.8 178.1L126.3 185.8L125.8 178.2L125.3 180.9L124.8 180.5L124.3 179.6L123.8 180.4L123.3 189.4L122.8 181.5L122.3 179.7L121.8 180.3L121.3 179.7L120.8 182.0L120.3 180.7L119.8 182.9L119.3 183.1L118.8 179.9L118.3 180.5L117.8 182.2L117.3 181.0L116.8 179.2L116.3 181.4L115.8 181.1L115.3 178.5L114.8 177.5L114.3 178.0L113.8 178.4L113.3 178.2L112.8 176.7L112.3 176.3L111.8 176.8L111.3 177.9L110.8 176.1L110.3 176.2L109.8 176.3L109.3 176.2L108.8 176.7L108.3 179.3L107.8 180.5L107.3 175.6L106.8 181.6L106.3 176.1L105.8 177.2L105.3 177.0L104.8 177.9L104.3 179.8L103.8 178.3L103.3 177.7L102.8 178.7L102.3 177.5L101.8 176.8L101.3 178.3L100.8 178.1L100.3 178.9L99.8 179.8L99.3 179.9L98.8 182.0L98.3 183.8L97.8 180.4L97.3 179.2L96.8 178.1L96.3 177.9L95.8 178.5L95.3 180.0L94.8 180.9L94.3 181.5L93.8 182.6L93.3 185.1L92.8 188.0L92.3 180.2L91.8 178.6L91.3 186.0L90.8 180.3L90.3 178.7L89.8 177.8L89.3 185.8L88.8 178.5L88.3 179.5L87.8 180.1L87.3 176.4L86.8 180.3L86.3 176.6L85.8 181.6L85.3 176.6L84.8 175.9L84.3 176.1L83.8 175.2L83.3 174.9Z" fill="#fdd56b"/><path d="M83.3 167.0L83.8 165.7L84.3 164.9L84.8 165.3L85.3 165.0L85.8 163.9L86.3 163.9L86.8 165.2L87.3 164.4L87.8 165.3L88.3 163.8L88.8 163.0L89.3 162.0L89.8 163.8L90.3 158.8L90.8 157.5L91.3 159.7L91.8 161.5L92.3 159.6L92.8 160.4L93.3 160.6L93.8 160.1L94.3 160.1L94.8 162.4L95.3 157.5L95.8 159.2L96.3 160.5L96.8 159.9L97.3 161.3L97.8 163.7L98.3 160.7L98.8 162.1L99.3 162.7L99.8 157.9L100.3 161.4L100.8 156.8L101.3 163.6L101.8 162.0L102.3 164.6L102.8 163.0L103.3 162.9L103.8 162.7L104.3 160.8L104.8 163.2L105.3 162.5L105.8 160.0L106.3 162.1L106.8 164.6L107.3 163.3L107.8 165.6L108.3 164.5L108.8 164.7L109.3 164.1L109.8 164.8L110.3 164.9L110.8 165.0L111.3 165.2L111.8 165.6L112.3 164.0L112.8 162.8L113.3 164.1L113.8 163.7L114.3 159.9L114.8 158.3L115.3 159.1L115.8 161.0L116.3 162.3L116.8 161.4L117.3 162.5L117.8 160.9L118.3 160.6L118.8 162.8L119.3 160.9L119.8 160.1L120.3 160.0L120.8 161.4L121.3 159.8L121.8 159.7L122.3 161.1L122.8 162.5L123.3 160.6L123.8 160.2L124.3 161.1L124.8 163.3L125.3 162.3L125.8 159.1L126.3 161.1L126.8 160.1L127.3 161.4L127.8 162.4L128.3 162.7L128.8 162.9L129.3 163.0L129.8 163.2L130.3 162.0L130.8 158.0L131.3 162.5L131.8 163.0L132.3 163.6L132.8 163.2L133.3 163.5L133.8 163.4L134.3 163.0L134.8 162.4L135.3 163.4L135.8 160.3L136.3 162.3L136.8 163.0L137.3 163.5L137.8 161.4L138.3 162.4L138.8 162.6L139.3 162.7L139.8 162.5L140.3 162.2L140.8 155.0L141.3 157.8L141.8 159.5L142.3 157.3L142.8 155.8L143.3 156.1L143.8 157.1L144.3 158.9L144.8 156.9L145.3 158.9L145.8 144.6L146.3 146.2L146.8 156.5L147.3 154.2L147.8 154.0L148.3 152.3L148.8 153.6L149.3 145.3L149.8 150.1L150.3 155.0L150.8 158.3L151.3 158.5L151.8 156.0L152.3 156.7L152.8 157.4L153.3 160.2L153.8 157.6L154.3 151.4L154.8 156.8L155.3 157.8L155.8 156.8L156.3 158.6L156.8 161.7L157.3 161.2L157.8 161.7L158.3 160.6L158.8 161.8L159.3 161.0L159.8 163.2L160.3 162.4L160.8 162.3L161.3 155.5L161.8 160.5L162.3 162.3L162.8 161.5L163.3 161.0L163.8 162.3L164.3 157.7L164.8 162.8L165.3 165.0L165.8 164.3L166.3 164.8L166.8 162.5L167.3 163.3L167.8 165.4L168.3 159.9L168.8 165.8L169.3 159.7L169.8 163.0L170.3 160.5L170.8 155.0L171.3 157.6L171.8 157.1L172.3 157.5L172.8 160.6L173.3 159.1L173.8 159.9L174.3 157.7L174.8 158.4L175.3 160.8L175.8 158.7L176.3 149.4L176.8 151.3L177.3 155.1L177.8 157.2L178.3 158.1L178.8 150.3L179.3 158.4L179.8 159.1L180.3 157.7L180.8 154.6L181.3 157.7L181.8 158.0L182.3 158.9L182.8 159.7L183.3 159.7L183.8 157.0L184.3 160.6L184.8 159.3L185.3 162.8L185.8 161.6L186.3 161.8L186.8 163.0L187.3 154.3L187.8 161.9L188.3 161.8L188.8 161.9L189.3 160.6L189.8 154.4L190.3 155.4L190.8 154.0L191.3 158.7L191.8 160.6L192.3 159.6L192.8 158.9L193.3 160.4L193.8 159.4L194.3 159.5L194.8 153.9L195.3 150.9L195.8 149.3L196.3 157.8L196.8 161.1L197.3 158.9L197.8 159.1L198.3 161.2L198.8 160.8L199.3 160.4L199.8 161.0L200.3 156.5L200.8 157.9L201.3 156.2L201.8 151.9L202.3 154.6L202.8 157.2L203.3 145.4L203.8 157.4L204.3 158.9L204.8 159.1L205.3 159.1L205.8 159.0L206.3 157.8L206.8 157.0L207.3 159.8L207.8 159.8L208.3 160.5L208.8 155.1L209.3 159.1L209.8 161.2L210.3 161.8L210.8 160.8L211.3 163.9L211.8 163.6L212.3 163.1L212.8 162.4L213.3 163.2L213.8 163.2L214.3 164.8L214.8 164.6L215.3 165.4L215.8 165.1L216.3 164.1L216.8 163.5L217.3 164.5L217.8 163.0L218.3 162.4L218.8 163.3L219.3 162.2L219.8 163.6L220.3 163.8L220.8 160.7L221.3 162.7L221.8 161.3L222.3 163.0L222.8 162.9L223.3 161.9L223.8 158.9L224.3 163.7L224.8 164.7L225.3 161.6L225.8 163.5L226.3 164.6L226.8 163.0L227.3 163.1L227.8 164.1L228.3 164.6L228.8 166.1L229.3 166.6L229.8 162.7L230.3 156.8L230.8 157.0L231.3 156.7L231.8 158.8L232.3 158.0L232.8 161.0L233.3 161.7L233.8 160.4L234.3 161.1L234.8 160.5L235.3 161.2L235.8 162.5L236.3 157.7L236.8 161.9L237.3 159.1L237.8 160.1L238.3 158.0L238.8 158.9L239.3 159.3L239.8 158.7L240.3 159.7L240.8 156.0L241.3 156.8L241.8 155.3L242.3 156.5L242.8 156.5L243.3 152.1L243.8 149.4L244.3 155.2L244.8 149.4L245.3 147.3L245.8 156.5L246.3 157.9L246.8 148.6L247.3 155.8L247.8 159.1L248.3 156.9L248.8 157.3L249.3 157.8L249.8 160.0L250.3 150.4L250.8 151.8L251.3 159.1L251.8 161.1L252.3 163.1L252.8 161.5L253.3 157.8L253.8 162.4L254.3 162.8L254.8 164.6L255.3 164.8L255.8 164.4L256.3 164.8L256.8 163.8L257.3 162.7L257.8 162.0L258.3 161.3L258.8 162.8L259.3 162.2L259.8 161.9L260.3 159.7L260.8 160.1L261.3 156.0L261.8 159.0L262.3 159.2L262.8 158.0L263.3 160.3L263.8 157.9L264.3 160.4L264.8 160.0L265.3 159.3L265.8 159.6L266.3 161.1L266.8 160.1L267.3 150.5L267.8 158.1L268.3 160.7L268.8 160.6L269.3 160.9L269.8 163.3L270.3 160.9L270.8 157.9L271.3 160.3L271.8 159.6L272.3 160.5L272.8 161.2L273.3 163.3L273.8 162.7L274.3 162.6L274.8 164.4L275.3 162.6L275.8 163.1L276.3 162.7L276.8 161.0L277.3 163.0L277.8 163.3L278.3 162.5L278.8 159.3L279.3 159.7L279.8 158.0L280.3 158.1L280.8 159.9L281.3 158.4L281.8 157.4L282.3 156.7L282.8 159.6L283.3 159.1L283.8 148.1L284.3 149.8L284.8 152.7L285.3 153.5L285.8 155.7L286.3 155.2L286.8 154.4L287.3 141.3L287.8 157.6L288.3 157.3L288.8 157.0L289.3 143.8L289.8 150.1L290.3 152.7L290.8 150.6L291.3 151.6L291.8 155.7L292.3 144.7L292.8 148.6L293.3 154.1L293.8 148.8L294.3 153.1L294.8 149.1L295.3 140.6L295.8 153.7L296.3 156.0L296.8 153.3L297.3 155.6L297.8 149.3L298.3 149.1L298.8 152.8L299.3 154.7L299.8 151.9L300.3 153.3L300.8 136.5L301.3 149.7L301.8 146.7L302.3 148.4L302.8 149.7L303.3 151.7L303.8 153.0L304.3 153.9L304.8 154.3L305.3 146.9L305.8 145.8L306.3 147.8L306.8 154.4L307.3 155.0L307.8 153.5L308.3 155.0L308.8 155.6L309.3 146.8L309.8 151.5L310.3 152.2L310.8 140.3L311.3 151.2L311.8 154.6L312.3 157.8L312.8 155.2L313.3 157.1L313.8 155.3L314.3 156.3L314.8 147.7L315.3 159.1L315.8 158.0L316.3 148.3L316.8 151.2L317.3 155.6L317.8 156.1L318.3 160.0L318.8 160.0L319.3 162.4L319.8 159.9L320.3 160.9L320.8 159.1L321.3 161.0L321.8 161.1L322.3 158.3L322.8 162.2L323.3 163.8L323.8 165.0L324.3 164.6L324.8 162.3L325.3 164.8L325.8 165.8L326.3 160.2L326.8 160.0L327.3 154.6L327.8 156.2L328.3 154.3L328.8 155.6L329.3 158.5L329.8 156.5L330.3 157.0L330.8 157.6L331.3 157.8L331.8 159.4L332.3 147.5L332.8 149.6L333.3 150.0L333.8 143.2L334.3 154.0L334.8 143.3L335.3 158.5L335.8 155.9L336.3 152.6L336.8 154.7L337.3 157.9L337.8 152.5L338.3 150.1L338.8 152.4L339.3 152.1L339.8 148.4L340.3 151.0L340.8 149.4L341.3 151.9L341.8 154.2L342.3 155.6L342.8 151.7L343.3 152.3L343.8 150.5L344.3 155.6L344.8 155.8L345.3 148.9L345.8 153.6L346.3 154.7L346.8 155.5L347.3 157.9L347.8 155.4L348.3 158.7L348.8 159.6L349.3 159.1L349.8 157.4L350.3 161.2L350.8 154.0L351.3 161.7L351.8 162.8L352.3 163.7L352.8 158.1L353.3 161.9L353.8 160.5L354.3 158.8L354.8 159.7L355.3 150.7L355.8 151.6L356.3 153.2L356.8 157.1L357.3 155.2L357.8 156.2L358.3 155.4L358.8 155.5L359.3 152.1L359.8 152.3L360.3 156.0L360.8 155.6L361.3 157.0L361.8 157.8L362.3 154.6L362.8 154.3L363.3 148.0L363.8 142.9L364.3 154.4L364.8 151.9L365.3 153.3L365.8 151.7L366.3 152.0L366.8 152.1L367.3 155.1L367.8 155.8L368.3 157.5L368.8 153.3L369.3 153.4L369.8 148.6L370.3 147.9L370.8 151.3L371.3 153.7L371.8 151.6L372.3 152.9L372.8 141.1L373.3 155.2L373.8 153.8L374.3 158.2L374.8 158.0L375.3 157.4L375.8 158.1L376.3 151.2L376.8 154.1L377.3 156.5L377.8 158.7L378.3 161.0L378.8 160.4L379.3 161.0L379.8 161.8L380.3 163.9L380.8 162.9L381.3 159.4L381.8 160.0L382.3 155.6L382.8 155.3L383.3 150.7L383.8 156.9L384.3 155.2L384.8 154.9L385.3 155.2L385.8 157.5L386.3 157.5L386.8 155.6L387.3 155.2L387.8 155.1L388.3 155.0L388.8 148.7L389.3 156.9L389.8 154.7L390.3 158.8L390.8 156.6L391.3 159.6L391.8 158.5L392.3 160.7L392.8 158.2L393.3 158.0L393.8 158.1L394.3 156.6L394.8 158.5L395.3 160.4L395.8 159.5L396.3 155.9L396.8 158.7L397.3 158.8L397.8 159.3L398.3 159.8L398.8 160.3L399.3 161.2L399.8 154.0L400.3 160.5L400.8 160.6L401.3 162.1L401.8 160.2L402.3 160.3L402.8 160.1L403.3 161.8L403.8 162.3L404.3 159.3L404.8 156.7L405.3 156.2L405.8 155.4L406.3 145.3L406.8 153.1L407.3 142.5L407.8 149.2L408.3 148.1L408.8 148.6L409.3 138.2L409.8 152.0L410.3 150.6L410.8 155.0L411.3 152.4L411.8 134.0L412.3 148.9L412.8 137.9L413.3 144.3L413.8 152.4L414.3 146.7L414.8 146.5L415.3 151.0L415.8 149.9L416.3 152.1L416.8 147.3L417.3 130.2L417.8 149.9L418.3 137.9L418.8 147.2L419.3 132.9L419.8 145.6L420.3 146.8L420.8 148.6L421.3 149.0L421.8 149.5L422.3 136.5L422.8 147.3L423.3 138.6L423.8 153.5L424.3 151.1L424.8 154.6L425.3 137.1L425.8 151.8L426.3 157.5L426.8 151.6L427.3 150.9L427.8 154.3L428.3 146.1L428.8 155.8L429.3 156.1L429.8 160.8L430.3 159.3L430.8 159.4L431.3 157.5L431.8 158.2L432.3 161.1L432.8 161.4L433.3 161.5L433.8 162.6L434.3 158.1L434.8 163.7L435.3 163.8L435.8 164.1L436.3 165.7L436.8 165.0L437.3 157.6L437.8 147.0L438.3 147.8L438.8 147.6L439.3 133.0L439.8 146.7L440.3 146.1L440.8 145.9L441.3 130.2L441.8 144.1L442.3 145.1L442.8 148.4L443.3 145.7L443.8 143.9L444.3 146.3L444.8 152.8L445.3 149.4L445.8 155.2L446.3 150.9L446.8 149.0L447.3 150.0L447.8 149.9L448.3 151.8L448.8 153.8L449.3 157.0L449.8 143.2L450.3 158.0L450.8 157.0L451.3 149.1L451.8 150.6L452.3 156.0L452.8 156.8L453.3 152.9L453.8 153.6L454.3 153.8L454.8 154.9L455.3 146.3L455.8 150.2L456.3 151.7L456.8 155.0L457.3 153.7L457.8 153.8L458.3 142.8L458.8 152.5L459.3 152.3L459.8 155.3L460.3 155.4L460.8 158.5L461.3 159.1L461.8 151.4L462.3 162.0L462.8 161.0L463.3 162.0L463.8 162.9L464.3 161.2L464.8 164.5L465.3 164.4L465.8 160.7L466.3 151.7L466.8 149.0L467.3 147.0L467.8 144.8L468.3 150.9L468.8 142.9L469.3 140.9L469.8 130.2L470.3 130.7L470.8 144.8L471.3 130.2L471.8 144.8L472.3 141.1L472.8 143.6L473.3 151.2L473.8 144.8L474.3 148.2L474.8 141.9L475.3 143.6L475.8 150.1L476.3 151.6L476.8 146.8L477.3 149.2L477.8 153.3L478.3 150.3L478.8 156.5L479.3 152.3L479.8 155.2L480.3 157.8L480.8 157.0L481.3 152.2L481.8 151.1L482.3 155.4L482.8 154.9L483.3 159.6L483.8 157.6L484.3 157.0L484.8 160.8L485.3 151.7L485.8 159.5L486.3 160.4L486.8 159.4L487.3 160.8L487.8 162.4L488.3 163.5L488.8 162.3L489.3 163.7L489.8 164.9L490.3 163.7L490.8 160.4L491.3 158.7L491.8 154.6L492.3 155.2L492.8 154.3L493.3 157.8L493.8 153.5L494.3 151.8L494.8 156.0L495.3 154.1L495.8 149.9L496.3 150.7L496.8 148.0L497.3 154.0L497.8 150.5L498.3 152.6L498.8 149.1L499.3 130.6L499.8 147.1L500.3 150.0L500.8 148.7L501.3 153.4L501.8 140.1L502.3 148.2L502.8 150.3L503.3 152.1L503.8 153.4L504.3 142.6L504.8 154.1L505.3 154.6L505.8 155.7L506.3 154.0L506.8 156.3L507.3 154.9L507.8 155.8L508.3 150.7L508.8 152.6L509.3 155.0L509.8 153.1L510.3 156.1L510.8 156.6L511.3 156.1L511.8 156.2L512.3 155.8L512.8 147.8L513.3 157.4L513.8 156.4L514.3 148.7L514.8 153.2L515.3 148.2L515.8 133.5L516.3 152.2L516.8 148.9L517.3 146.2L517.8 151.8L518.3 140.6L518.8 140.7L519.3 144.3L519.8 145.3L520.3 143.6L520.8 147.5L521.3 143.6L521.8 135.0L522.3 143.2L522.8 137.5L523.3 139.2L523.8 140.6L524.3 148.3L524.8 149.0L525.3 149.3L525.8 148.2L526.3 133.6L526.8 142.3L527.3 146.5L527.8 146.2L528.3 146.2L528.8 148.2L529.3 150.7L529.8 153.2L530.3 139.4L530.8 143.7L531.3 152.1L531.8 151.6L532.3 154.0L532.8 155.5L533.3 146.7L533.8 157.8L534.3 155.8L534.8 156.0L535.3 143.4L535.8 146.8L536.3 147.7L536.8 147.6L537.3 153.8L537.8 150.7L538.3 148.5L538.8 152.1L539.3 152.7L539.8 151.0L540.3 152.1L540.8 148.0L541.3 145.1L541.8 143.4L542.3 145.1L542.8 143.6L543.3 132.0L543.8 147.6L544.3 147.3L544.8 149.7L545.3 141.8L545.8 150.5L546.3 147.4L546.8 145.8L547.3 148.3L547.8 152.4L548.3 146.0L548.8 150.6L549.3 147.6L549.8 146.9L550.3 146.1L550.8 140.6L551.3 147.9L551.8 144.2L552.3 149.5L552.8 151.7L553.3 149.1L553.8 145.8L554.3 151.8L554.8 137.2L555.3 147.2L555.8 147.2L556.3 145.6L556.8 147.3L557.3 150.4L557.8 150.9L558.3 144.1L558.8 146.5L559.3 150.4L559.8 149.3L560.3 151.3L560.8 151.2L561.3 153.4L561.8 150.0L562.3 150.8L562.8 149.3L563.3 154.1L563.8 151.4L564.3 152.3L564.8 152.8L565.3 140.3L565.8 145.6L566.3 152.3L566.8 149.6L567.3 150.7L567.8 153.2L568.3 156.9L568.8 155.3L569.3 155.1L569.8 155.0L570.3 158.5L570.8 157.4L571.3 151.5L571.8 157.4L572.3 154.3L572.8 156.3L573.3 160.1L573.8 160.5L574.3 160.7L574.8 160.7L575.3 162.0L575.8 162.7L576.3 154.9L576.8 163.0L577.3 154.1L577.8 149.9L578.3 152.1L578.8 149.3L579.3 146.2L579.8 149.7L580.3 145.4L580.8 146.0L581.3 148.8L581.8 131.4L582.3 143.1L582.8 143.4L583.3 146.0L583.8 145.1L584.3 149.0L584.8 147.5L585.3 153.5L585.8 150.1L586.3 150.3L586.8 152.8L587.3 149.4L587.8 142.7L588.3 150.1L588.8 149.4L589.3 150.3L589.8 149.8L590.3 142.8L590.8 140.6L591.3 146.5L591.8 146.0L592.3 143.1L592.8 130.2L593.3 149.5L593.8 145.5L594.3 141.6L594.8 148.4L595.3 148.7L595.8 148.1L596.3 147.4L596.8 144.2L597.3 146.1L597.8 143.7L598.3 146.6L598.8 146.2L599.3 142.6L599.8 141.3L600.3 130.2L600.8 131.3L601.3 137.1L601.8 138.7L602.3 143.2L602.8 144.4L603.3 139.9L603.8 148.9L604.3 141.1L604.8 141.1L605.3 142.8L605.8 145.8L606.3 139.4L606.8 144.8L607.3 140.5L607.8 148.0L608.3 141.2L608.8 144.3L609.3 147.7L609.8 142.1L610.3 143.3L610.8 147.2L611.3 143.9L611.8 146.3L612.3 133.5L612.8 138.5L613.3 141.9L613.8 147.8L614.3 151.7L614.8 151.2L615.3 149.1L615.8 153.6L616.3 137.7L616.8 141.1L617.3 138.7L617.8 150.6L618.3 138.6L618.8 151.8L619.3 152.2L619.8 154.1L620.3 157.5L620.8 140.8L621.3 157.0L621.8 143.9L622.3 148.6L622.8 145.7L623.3 153.3L623.8 147.8L624.3 136.6L624.8 148.7L625.3 130.2L625.8 146.6L626.3 147.4L626.8 151.0L627.3 151.4L627.8 144.0L628.3 143.8L628.8 144.3L629.3 130.2L629.8 130.2L630.3 140.6L630.8 130.2L631.3 135.3L631.8 136.9L632.3 130.2L632.8 142.3L633.3 147.5L633.8 145.5L634.3 130.2L634.8 138.5L635.3 136.6L635.8 136.6L636.3 135.8L636.8 142.9L637.3 143.9L637.8 142.6L638.3 147.0L638.8 143.8L639.3 141.1L639.8 147.5L640.3 143.3L640.8 146.8L641.3 147.0L641.8 130.2L642.3 138.2L642.8 130.2L643.3 140.1L643.8 132.9L644.3 141.6L644.8 144.9L645.3 146.7L645.8 145.8L646.3 150.5L646.8 141.5L647.3 144.6L647.8 144.2L648.3 144.7L648.8 138.8L649.3 149.0L649.8 146.3L650.3 145.2L650.8 152.5L651.3 148.6L651.8 150.9L652.3 153.3L652.8 149.8L653.3 139.7L653.8 143.4L654.3 147.9L654.8 153.1L655.3 153.4L655.8 141.0L656.3 151.1L656.8 150.9L657.3 149.7L657.8 131.9L658.3 150.5L658.8 139.2L659.3 146.2L659.8 143.4L660.3 146.2L660.8 144.9L661.3 149.9L661.8 146.3L662.3 139.5L662.8 139.8L663.3 144.0L663.8 142.9L664.3 142.4L664.8 150.0L665.3 144.0L665.8 148.6L666.3 151.8L666.8 147.8L667.3 148.4L667.8 148.4L668.3 153.5L668.8 150.1L669.3 153.8L669.8 151.5L670.3 149.4L670.8 152.0L671.3 154.9L671.8 155.1L672.3 154.3L672.8 156.4L673.3 159.5L673.8 143.5L674.3 155.8L674.8 157.7L675.3 150.0L675.8 154.8L676.3 155.0L676.8 158.9L677.3 158.2L677.8 161.3L678.3 160.4L678.8 152.2L679.3 156.1L679.8 160.0L680.3 159.1L680.8 152.4L681.3 163.2L681.8 162.7L682.3 162.5L682.8 163.4L683.3 160.2L683.8 160.5L684.3 162.0L684.8 163.1L685.3 160.6L685.8 163.3L686.3 156.8L686.8 154.3L687.3 151.3L687.8 154.5L688.3 149.3L688.8 154.2L689.3 148.0L689.8 147.8L690.3 151.9L690.8 148.5L691.3 137.8L691.8 137.0L692.3 139.5L692.8 140.3L693.3 145.1L693.8 142.3L694.3 140.6L694.8 145.4L695.3 147.5L695.8 144.8L696.3 144.2L696.8 145.7L697.3 146.9L697.8 148.3L698.3 145.4L698.8 147.3L699.3 141.6L699.8 142.9L700.3 151.2L700.8 147.9L701.3 150.0L701.8 151.9L702.3 151.3L702.8 151.0L703.3 152.6L703.8 155.0L704.3 153.9L704.8 147.2L705.3 148.4L705.8 149.3L706.3 143.3L706.8 155.1L707.3 155.5L707.8 154.6L708.3 159.4L708.8 157.2L709.3 156.4L709.8 151.2L710.3 152.8L710.8 156.1L711.3 157.4L711.8 158.2L712.3 161.3L712.8 161.3L713.3 156.5L713.8 158.7L714.3 159.9L714.8 161.0L715.3 162.7L715.8 160.7L716.3 159.9L716.8 155.8L717.3 148.5L717.8 146.5L718.3 145.3L718.8 149.4L719.3 144.6L719.8 137.5L720.3 141.7L720.8 144.1L721.3 138.9L721.8 148.8L722.3 148.5L722.8 137.5L723.3 140.3L723.8 147.5L724.3 149.8L724.8 146.1L725.3 151.2L725.8 149.9L726.3 148.6L726.8 148.5L727.3 153.4L727.8 133.9L728.3 153.7L728.8 139.4L729.3 155.4L729.8 157.1L730.3 142.3L730.8 157.6L731.3 159.4L731.8 156.7L732.3 158.8L732.8 157.8L733.3 157.6L733.8 153.1L734.3 158.6L734.8 159.0L735.3 160.1L735.8 160.3L736.3 161.4L736.8 151.9L737.3 153.9L737.8 151.3L738.3 149.1L738.8 148.3L739.3 152.3L739.8 149.1L740.3 146.5L740.8 149.2L741.3 144.6L741.8 144.6L742.3 146.8L742.8 144.1L743.3 147.5L743.8 130.2L744.3 140.9L744.8 148.5L745.3 143.8L745.8 130.2L746.3 149.1L746.8 146.5L747.3 150.6L747.8 149.6L748.3 146.8L748.8 130.2L749.3 141.7L749.8 145.2L750.3 148.3L750.8 150.5L751.3 153.1L751.8 154.0L752.3 150.6L752.8 150.4L753.3 153.5L753.8 154.9L754.3 149.7L754.8 153.0L755.3 157.6L755.8 158.2L756.3 159.1L756.8 158.8L757.3 158.6L757.8 159.5L758.3 160.0L758.8 163.3L759.3 161.4L759.8 161.9L760.3 156.9L760.8 162.4L761.3 160.1L761.8 161.5L762.3 161.9L762.8 161.7L763.3 162.9L763.8 162.0L764.3 162.1L764.8 164.6L765.3 164.4L765.8 164.3L766.3 165.3L766.8 165.4L767.3 165.6L767.8 166.0L768.3 166.8L768.8 166.1L769.3 167.3L769.8 167.2L770.3 165.0L770.8 168.1L771.3 168.4L771.8 167.0L772.3 168.2L772.8 168.2L773.3 167.1L773.8 167.5L774.3 167.7L774.8 168.4L775.3 168.2L775.8 168.1L776.3 168.3L776.8 169.0L777.3 167.9L777.8 168.7L778.3 168.3L778.8 168.5L779.3 168.5L779.8 168.5L780.3 168.8L780.8 168.6L781.3 167.8L781.8 168.5L782.3 168.5L782.8 168.7L783.3 168.9L783.8 169.0L784.3 168.9L784.8 168.6L785.3 169.0L785.8 167.3L786.3 169.3L786.8 169.2L787.3 168.8L787.8 168.8L788.3 168.4L788.8 168.7L789.3 168.7L789.8 168.7L790.3 168.0L790.8 168.1L791.3 168.6L791.8 168.7L792.3 168.3L792.8 166.7L793.3 167.9L793.8 168.5L794.3 168.2L794.8 168.2L795.3 168.4L795.8 168.1L796.3 168.3L796.8 168.3L797.3 168.1L797.8 168.1L798.3 168.4L798.8 168.8L799.3 168.3L799.8 168.6L800.3 169.0L800.8 168.6L801.3 168.8L801.8 168.8L802.3 168.5L802.8 168.5L803.3 167.6L803.8 168.9L804.3 169.2L804.8 169.2L805.3 169.3L805.8 169.7L806.3 169.8L806.8 169.6L807.3 169.8L807.8 169.7L808.3 169.5L808.8 169.8L809.3 170.0L809.8 169.9L810.3 169.4L810.8 170.0L811.3 169.9L811.8 170.1L812.3 170.1L812.8 169.7L813.3 169.8L813.8 170.0L814.3 170.0L814.8 170.1L815.3 170.1L815.8 170.2L816.3 170.3L816.8 170.2L817.3 170.2L817.8 170.2L818.3 170.2L818.8 170.0L819.3 170.1L819.8 170.3L820.3 170.3L820.8 170.1L821.3 170.3L821.8 170.3L822.3 170.3L822.8 170.3L823.3 170.3L823.8 170.3L824.3 170.0L824.8 170.2L825.3 170.3L825.8 170.3L826.3 170.3L826.8 170.3L827.3 170.3L827.8 170.3L828.3 170.3L828.8 170.3L829.3 170.3L829.8 170.3L830.3 170.3L830.8 170.3L831.3 170.3L831.8 170.2L832.3 170.3L832.8 170.1L833.3 170.1L833.8 170.2L834.3 170.3L834.8 170.3L835.3 170.3L835.8 170.3L836.3 170.3L836.8 170.3L837.3 170.3L837.8 170.1L838.3 170.2L838.8 170.3L839.3 170.3L839.8 170.3L840.3 170.3L840.8 170.3L841.3 170.0L841.8 170.3L842.3 170.3L842.8 170.3L843.3 170.0L843.8 170.1L844.3 170.3L844.8 170.3L845.3 170.0L845.8 170.3L846.3 170.3L846.8 170.3L847.3 170.3L847.8 170.3L848.3 170.3L848.8 170.3L849.3 170.3L849.8 170.1L850.3 170.3L850.8 170.3L851.3 170.3L851.8 170.3L852.3 170.3L852.8 170.3L853.3 170.3L853.8 170.2L854.3 170.1L854.8 170.3L855.3 170.3L855.8 170.3L856.3 170.3L856.8 170.3L857.3 170.3L857.8 170.3L858.3 170.3L858.8 170.3L859.3 170.3L859.8 170.3L860.3 170.3L860.8 170.3L861.3 170.3L861.8 170.3L861.8 171.1L861.3 171.1L860.8 171.1L860.3 171.2L859.8 171.2L859.3 171.1L858.8 171.1L858.3 171.1L857.8 171.1L857.3 171.1L856.8 171.1L856.3 171.1L855.8 171.1L855.3 171.1L854.8 171.1L854.3 171.1L853.8 171.1L853.3 171.1L852.8 171.1L852.3 171.3L851.8 171.1L851.3 171.3L850.8 171.1L850.3 171.1L849.8 171.2L849.3 171.1L848.8 171.1L848.3 171.1L847.8 171.1L847.3 171.1L846.8 171.1L846.3 171.2L845.8 171.1L845.3 171.1L844.8 171.1L844.3 171.1L843.8 171.1L843.3 171.1L842.8 171.1L842.3 171.4L841.8 171.1L841.3 171.3L840.8 171.1L840.3 171.1L839.8 171.1L839.3 171.1L838.8 171.3L838.3 171.1L837.8 171.1L837.3 171.1L836.8 171.1L836.3 171.1L835.8 171.1L835.3 171.1L834.8 171.1L834.3 171.1L833.8 171.1L833.3 171.1L832.8 171.1L832.3 171.1L831.8 171.1L831.3 171.1L830.8 171.3L830.3 171.1L829.8 171.1L829.3 171.1L828.8 171.1L828.3 171.1L827.8 171.1L827.3 171.1L826.8 171.1L826.3 171.4L825.8 171.1L825.3 171.2L824.8 171.1L824.3 171.2L823.8 171.1L823.3 171.1L822.8 171.1L822.3 171.2L821.8 171.1L821.3 171.2L820.8 171.3L820.3 171.1L819.8 171.1L819.3 171.1L818.8 171.1L818.3 171.2L817.8 171.3L817.3 171.1L816.8 171.2L816.3 171.6L815.8 171.4L815.3 171.4L814.8 171.4L814.3 171.8L813.8 171.6L813.3 171.2L812.8 171.9L812.3 171.3L811.8 171.4L811.3 171.3L810.8 171.4L810.3 172.0L809.8 171.4L809.3 171.6L808.8 171.5L808.3 171.9L807.8 172.2L807.3 171.7L806.8 171.8L806.3 172.2L805.8 172.5L805.3 172.1L804.8 171.9L804.3 173.3L803.8 172.1L803.3 172.3L802.8 172.3L802.3 172.5L801.8 172.7L801.3 172.8L800.8 173.0L800.3 173.2L799.8 173.1L799.3 174.5L798.8 172.8L798.3 173.0L797.8 173.2L797.3 173.9L796.8 172.5L796.3 175.3L795.8 175.2L795.3 172.6L794.8 173.2L794.3 172.7L793.8 175.1L793.3 173.4L792.8 173.2L792.3 173.9L791.8 174.4L791.3 172.9L790.8 173.3L790.3 174.8L789.8 172.9L789.3 172.8L788.8 174.3L788.3 172.7L787.8 172.6L787.3 172.6L786.8 172.7L786.3 172.5L785.8 172.5L785.3 172.9L784.8 173.2L784.3 172.2L783.8 172.5L783.3 174.2L782.8 172.7L782.3 172.8L781.8 172.5L781.3 173.0L780.8 174.4L780.3 172.9L779.8 172.5L779.3 172.6L778.8 172.4L778.3 172.4L777.8 172.7L777.3 172.6L776.8 172.5L776.3 174.2L775.8 173.1L775.3 173.6L774.8 173.4L774.3 173.6L773.8 172.5L773.3 172.9L772.8 173.0L772.3 172.6L771.8 172.7L771.3 172.8L770.8 173.8L770.3 173.6L769.8 173.8L769.3 174.5L768.8 174.3L768.3 175.0L767.8 178.7L767.3 175.0L766.8 175.8L766.3 177.6L765.8 178.3L765.3 180.5L764.8 176.7L764.3 176.8L763.8 176.1L763.3 178.8L762.8 178.7L762.3 179.2L761.8 181.5L761.3 177.3L760.8 177.3L760.3 177.8L759.8 178.5L759.3 179.3L758.8 186.4L758.3 182.5L757.8 183.8L757.3 184.2L756.8 182.8L756.3 181.1L755.8 184.9L755.3 184.0L754.8 186.5L754.3 194.1L753.8 183.1L753.3 188.2L752.8 185.1L752.3 190.0L751.8 187.5L751.3 185.7L750.8 191.8L750.3 190.5L749.8 193.4L749.3 195.7L748.8 196.9L748.3 211.2L747.8 199.9L747.3 200.5L746.8 211.2L746.3 202.1L745.8 204.8L745.3 211.2L744.8 194.7L744.3 198.7L743.8 193.9L743.3 192.9L742.8 211.2L742.3 191.2L741.8 194.0L741.3 192.1L740.8 192.5L740.3 195.0L739.8 196.1L739.3 195.0L738.8 210.2L738.3 195.8L737.8 189.5L737.3 198.5L736.8 185.6L736.3 180.0L735.8 182.0L735.3 182.6L734.8 182.5L734.3 181.0L733.8 184.0L733.3 189.4L732.8 185.3L732.3 183.7L731.8 185.8L731.3 184.0L730.8 198.8L730.3 187.1L729.8 202.0L729.3 185.5L728.8 188.6L728.3 189.1L727.8 190.1L727.3 189.4L726.8 189.3L726.3 192.4L725.8 191.2L725.3 195.9L724.8 195.8L724.3 197.7L723.8 201.7L723.3 200.8L722.8 202.7L722.3 195.8L721.8 199.2L721.3 200.6L720.8 201.9L720.3 202.0L719.8 195.4L719.3 204.4L718.8 204.2L718.3 189.1L717.8 190.9L717.3 193.5L716.8 186.7L716.3 180.3L715.8 180.7L715.3 181.2L714.8 179.7L714.3 182.6L713.8 182.4L713.3 183.5L712.8 181.9L712.3 181.0L711.8 183.0L711.3 180.5L710.8 183.0L710.3 182.7L709.8 183.8L709.3 186.9L708.8 182.9L708.3 184.0L707.8 190.4L707.3 195.2L706.8 183.3L706.3 183.7L705.8 186.9L705.3 184.6L704.8 190.1L704.3 193.2L703.8 194.6L703.3 197.9L702.8 203.4L702.3 190.1L701.8 188.3L701.3 190.5L700.8 202.1L700.3 211.2L699.8 194.2L699.3 195.2L698.8 195.8L698.3 197.1L697.8 193.8L697.3 193.5L696.8 196.8L696.3 192.4L695.8 192.9L695.3 197.0L694.8 195.7L694.3 198.2L693.8 199.6L693.3 195.0L692.8 196.6L692.3 194.0L691.8 197.5L691.3 198.5L690.8 211.2L690.3 191.5L689.8 191.9L689.3 192.6L688.8 194.3L688.3 188.9L687.8 188.3L687.3 190.0L686.8 187.3L686.3 182.5L685.8 177.3L685.3 177.8L684.8 178.5L684.3 179.9L683.8 179.9L683.3 180.1L682.8 179.0L682.3 179.5L681.8 186.5L681.3 178.9L680.8 179.6L680.3 182.0L679.8 182.7L679.3 184.0L678.8 183.8L678.3 190.9L677.8 181.6L677.3 181.7L676.8 183.4L676.3 185.7L675.8 189.7L675.3 188.7L674.8 181.4L674.3 186.0L673.8 187.1L673.3 194.4L672.8 191.4L672.3 184.3L671.8 187.3L671.3 188.6L670.8 188.8L670.3 185.7L669.8 190.6L669.3 192.0L668.8 202.1L668.3 194.3L667.8 198.7L667.3 194.3L666.8 189.0L666.3 195.5L665.8 196.2L665.3 196.0L664.8 199.2L664.3 196.7L663.8 195.2L663.3 203.7L662.8 193.8L662.3 197.4L661.8 198.7L661.3 198.8L660.8 193.8L660.3 192.4L659.8 195.1L659.3 193.3L658.8 194.6L658.3 208.1L657.8 190.9L657.3 192.0L656.8 201.0L656.3 190.0L655.8 187.8L655.3 185.8L654.8 186.1L654.3 191.9L653.8 187.9L653.3 202.1L652.8 195.4L652.3 194.3L651.8 196.5L651.3 207.1L650.8 194.3L650.3 209.4L649.8 192.7L649.3 195.2L648.8 191.4L648.3 196.5L647.8 191.6L647.3 197.6L646.8 201.6L646.3 200.1L645.8 194.3L645.3 191.1L644.8 198.6L644.3 199.8L643.8 194.4L643.3 192.8L642.8 194.9L642.3 194.1L641.8 196.2L641.3 196.7L640.8 192.9L640.3 211.2L639.8 196.0L639.3 201.4L638.8 195.3L638.3 201.5L637.8 196.9L637.3 202.2L636.8 199.8L636.3 196.8L635.8 205.7L635.3 210.9L634.8 208.0L634.3 191.5L633.8 196.7L633.3 196.7L632.8 198.5L632.3 197.4L631.8 200.6L631.3 211.2L630.8 196.6L630.3 200.2L629.8 203.2L629.3 211.2L628.8 196.3L628.3 195.8L627.8 197.9L627.3 192.4L626.8 195.7L626.3 193.3L625.8 196.5L625.3 189.7L624.8 195.8L624.3 192.1L623.8 195.6L623.3 194.1L622.8 187.0L622.3 187.3L621.8 188.0L621.3 185.5L620.8 185.8L620.3 191.3L619.8 184.9L619.3 200.1L618.8 190.3L618.3 185.7L617.8 189.6L617.3 204.2L616.8 190.0L616.3 193.7L615.8 198.0L615.3 187.7L614.8 188.7L614.3 192.5L613.8 194.2L613.3 195.4L612.8 192.7L612.3 197.8L611.8 201.4L611.3 200.7L610.8 210.5L610.3 199.8L609.8 193.3L609.3 198.1L608.8 198.8L608.3 202.0L607.8 201.4L607.3 211.2L606.8 202.2L606.3 204.8L605.8 207.6L605.3 198.7L604.8 193.4L604.3 197.0L603.8 204.5L603.3 205.9L602.8 200.2L602.3 211.2L601.8 193.2L601.3 196.2L600.8 194.7L600.3 211.2L599.8 203.0L599.3 193.2L598.8 197.6L598.3 191.7L597.8 192.4L597.3 200.0L596.8 196.8L596.3 199.4L595.8 194.0L595.3 199.9L594.8 197.2L594.3 203.6L593.8 206.4L593.3 195.0L592.8 211.2L592.3 197.1L591.8 195.8L591.3 193.1L590.8 193.8L590.3 189.2L589.8 202.2L589.3 190.8L588.8 192.8L588.3 199.0L587.8 190.3L587.3 194.1L586.8 195.7L586.3 210.4L585.8 199.3L585.3 200.1L584.8 192.3L584.3 194.3L583.8 191.2L583.3 192.6L582.8 192.7L582.3 207.5L581.8 192.0L581.3 208.5L580.8 203.9L580.3 194.9L579.8 195.5L579.3 196.5L578.8 211.2L578.3 192.3L577.8 193.0L577.3 189.5L576.8 178.8L576.3 186.7L575.8 183.1L575.3 184.8L574.8 183.9L574.3 182.6L573.8 186.7L573.3 185.3L572.8 182.3L572.3 194.2L571.8 185.3L571.3 188.1L570.8 191.8L570.3 192.6L569.8 185.5L569.3 184.3L568.8 198.8L568.3 186.9L567.8 186.0L567.3 189.0L566.8 202.3L566.3 187.5L565.8 185.4L565.3 185.5L564.8 189.9L564.3 192.6L563.8 193.1L563.3 201.6L562.8 194.4L562.3 201.3L561.8 201.2L561.3 188.4L560.8 194.2L560.3 192.7L559.8 197.2L559.3 195.9L558.8 203.4L558.3 191.6L557.8 195.5L557.3 199.0L556.8 197.3L556.3 191.4L555.8 194.7L555.3 211.2L554.8 209.6L554.3 194.9L553.8 194.3L553.3 198.4L552.8 200.2L552.3 199.7L551.8 191.5L551.3 191.5L550.8 196.8L550.3 196.4L549.8 191.9L549.3 196.9L548.8 195.0L548.3 189.8L547.8 196.7L547.3 197.2L546.8 194.4L546.3 195.3L545.8 190.0L545.3 192.9L544.8 194.4L544.3 191.0L543.8 190.3L543.3 193.0L542.8 193.5L542.3 188.8L541.8 194.2L541.3 196.8L540.8 192.0L540.3 194.1L539.8 194.6L539.3 201.6L538.8 192.6L538.3 190.4L537.8 186.8L537.3 187.9L536.8 188.8L536.3 186.5L535.8 199.1L535.3 187.8L534.8 192.3L534.3 188.8L533.8 183.8L533.3 185.8L532.8 184.7L532.3 200.1L531.8 188.7L531.3 189.0L530.8 202.0L530.3 191.3L529.8 189.6L529.3 194.5L528.8 194.2L528.3 190.9L527.8 194.7L527.3 191.2L526.8 192.6L526.3 198.1L525.8 199.5L525.3 205.8L524.8 192.9L524.3 196.1L523.8 201.3L523.3 199.9L522.8 203.9L522.3 207.8L521.8 198.9L521.3 194.2L520.8 199.4L520.3 211.2L519.8 204.2L519.3 203.1L518.8 196.5L518.3 195.4L517.8 194.4L517.3 194.0L516.8 204.6L516.3 195.3L515.8 199.6L515.3 186.5L514.8 183.2L514.3 183.4L513.8 184.8L513.3 196.5L512.8 186.7L512.3 195.8L511.8 189.9L511.3 192.2L510.8 184.0L510.3 185.7L509.8 184.7L509.3 189.4L508.8 193.9L508.3 185.3L507.8 195.8L507.3 186.4L506.8 183.6L506.3 186.6L505.8 185.3L505.3 185.5L504.8 202.4L504.3 188.7L503.8 188.6L503.3 192.3L502.8 188.4L502.3 188.8L501.8 192.5L501.3 191.6L500.8 188.6L500.3 192.3L499.8 192.9L499.3 191.0L498.8 192.6L498.3 208.6L497.8 193.3L497.3 191.0L496.8 189.0L496.3 192.4L495.8 189.9L495.3 190.2L494.8 192.9L494.3 196.2L493.8 188.1L493.3 184.0L492.8 185.7L492.3 183.0L491.8 193.4L491.3 181.4L490.8 175.9L490.3 177.4L489.8 177.8L489.3 178.8L488.8 180.1L488.3 185.5L487.8 180.2L487.3 178.5L486.8 180.5L486.3 178.8L485.8 181.5L485.3 181.7L484.8 181.5L484.3 182.5L483.8 182.8L483.3 186.1L482.8 185.5L482.3 182.3L481.8 185.9L481.3 185.9L480.8 200.3L480.3 188.6L479.8 188.8L479.3 189.8L478.8 190.3L478.3 189.6L477.8 194.2L477.3 189.5L476.8 191.4L476.3 190.0L475.8 188.8L475.3 190.4L474.8 194.0L474.3 197.6L473.8 198.4L473.3 202.0L472.8 200.0L472.3 209.8L471.8 192.9L471.3 199.4L470.8 200.2L470.3 196.0L469.8 196.7L469.3 200.8L468.8 195.2L468.3 211.2L467.8 195.2L467.3 210.5L466.8 190.8L466.3 199.5L465.8 180.2L465.3 175.2L464.8 177.1L464.3 178.1L463.8 177.1L463.3 180.0L462.8 179.8L462.3 184.3L461.8 188.8L461.3 180.2L460.8 194.1L460.3 183.5L459.8 184.1L459.3 196.2L458.8 188.1L458.3 191.9L457.8 193.1L457.3 195.0L456.8 188.1L456.3 184.7L455.8 188.1L455.3 185.0L454.8 188.9L454.3 186.2L453.8 187.6L453.3 185.0L452.8 197.6L452.3 187.4L451.8 187.0L451.3 182.7L450.8 186.9L450.3 185.0L449.8 186.5L449.3 187.9L448.8 184.7L448.3 201.4L447.8 191.5L447.3 185.1L446.8 189.2L446.3 206.2L445.8 194.3L445.3 200.5L444.8 188.4L444.3 188.9L443.8 192.7L443.3 192.2L442.8 192.0L442.3 193.5L441.8 196.3L441.3 200.0L440.8 203.5L440.3 211.2L439.8 195.0L439.3 191.7L438.8 196.1L438.3 199.0L437.8 184.7L437.3 184.0L436.8 176.6L436.3 176.2L435.8 177.7L435.3 178.0L434.8 178.2L434.3 184.5L433.8 183.0L433.3 180.1L432.8 180.8L432.3 182.0L431.8 180.3L431.3 181.5L430.8 182.4L430.3 194.1L429.8 182.1L429.3 192.0L428.8 183.7L428.3 185.7L427.8 185.9L427.3 190.7L426.8 188.2L426.3 191.0L425.8 188.6L425.3 194.0L424.8 187.1L424.3 187.5L423.8 189.0L423.3 188.6L422.8 189.6L422.3 190.9L421.8 188.1L421.3 209.1L420.8 189.8L420.3 193.4L419.8 195.3L419.3 192.4L418.8 189.8L418.3 193.7L417.8 191.7L417.3 194.4L416.8 194.2L416.3 194.9L415.8 196.1L415.3 198.2L414.8 195.4L414.3 193.8L413.8 192.9L413.3 189.0L412.8 192.8L412.3 188.0L411.8 189.1L411.3 192.1L410.8 193.7L410.3 193.2L409.8 190.2L409.3 191.2L408.8 187.7L408.3 190.2L407.8 188.8L407.3 184.5L406.8 201.8L406.3 187.6L405.8 188.4L405.3 188.7L404.8 188.1L404.3 182.7L403.8 178.8L403.3 177.8L402.8 179.1L402.3 180.7L401.8 180.7L401.3 179.3L400.8 178.8L400.3 181.6L399.8 181.2L399.3 186.4L398.8 178.7L398.3 180.0L397.8 181.4L397.3 179.7L396.8 181.4L396.3 180.6L395.8 189.6L395.3 184.3L394.8 186.3L394.3 188.4L393.8 182.8L393.3 184.0L392.8 193.4L392.3 181.9L391.8 184.7L391.3 185.0L390.8 184.9L390.3 181.1L389.8 182.2L389.3 193.4L388.8 185.6L388.3 185.3L387.8 185.1L387.3 186.6L386.8 185.2L386.3 186.2L385.8 185.8L385.3 192.7L384.8 184.3L384.3 184.9L383.8 182.8L383.3 182.6L382.8 181.4L382.3 180.6L381.8 177.5L381.3 177.7L380.8 177.6L380.3 179.6L379.8 179.8L379.3 178.9L378.8 180.4L378.3 180.6L377.8 181.3L377.3 182.3L376.8 183.6L376.3 184.3L375.8 195.1L375.3 185.2L374.8 191.1L374.3 185.1L373.8 184.9L373.3 185.4L372.8 182.9L372.3 188.6L371.8 188.3L371.3 190.3L370.8 188.3L370.3 184.6L369.8 189.5L369.3 184.4L368.8 189.1L368.3 189.4L367.8 185.0L367.3 188.7L366.8 189.3L366.3 201.7L365.8 190.7L365.3 187.1L364.8 188.4L364.3 185.3L363.8 184.8L363.3 186.7L362.8 188.7L362.3 187.6L361.8 191.0L361.3 193.1L360.8 182.0L360.3 186.6L359.8 197.3L359.3 185.2L358.8 185.1L358.3 183.3L357.8 185.1L357.3 193.8L356.8 184.0L356.3 182.9L355.8 185.2L355.3 187.0L354.8 181.4L354.3 181.4L353.8 179.0L353.3 177.3L352.8 177.3L352.3 179.6L351.8 178.6L351.3 180.1L350.8 183.3L350.3 180.9L349.8 181.5L349.3 179.2L348.8 182.6L348.3 182.6L347.8 184.8L347.3 182.9L346.8 191.9L346.3 195.2L345.8 184.7L345.3 184.7L344.8 186.6L344.3 200.2L343.8 187.6L343.3 185.8L342.8 189.9L342.3 191.5L341.8 191.5L341.3 202.1L340.8 201.5L340.3 188.2L339.8 188.6L339.3 202.7L338.8 191.3L338.3 189.9L337.8 191.5L337.3 188.2L336.8 184.0L336.3 187.8L335.8 188.3L335.3 186.8L334.8 189.2L334.3 196.0L333.8 189.7L333.3 185.9L332.8 186.1L332.3 183.0L331.8 183.7L331.3 186.2L330.8 187.5L330.3 185.7L329.8 183.4L329.3 182.3L328.8 182.8L328.3 183.5L327.8 184.0L327.3 181.7L326.8 180.3L326.3 180.3L325.8 175.1L325.3 175.8L324.8 177.1L324.3 176.5L323.8 177.9L323.3 177.7L322.8 179.0L322.3 178.0L321.8 180.8L321.3 181.4L320.8 186.1L320.3 180.6L319.8 179.8L319.3 182.1L318.8 183.4L318.3 179.9L317.8 181.8L317.3 191.4L316.8 183.7L316.3 189.6L315.8 189.9L315.3 183.7L314.8 184.8L314.3 185.7L313.8 186.5L313.3 182.7L312.8 184.6L312.3 186.0L311.8 186.4L311.3 186.8L310.8 188.1L310.3 194.0L309.8 198.2L309.3 202.9L308.8 191.4L308.3 190.3L307.8 195.8L307.3 188.1L306.8 190.2L306.3 187.0L305.8 190.2L305.3 187.9L304.8 187.7L304.3 190.5L303.8 189.9L303.3 193.6L302.8 190.9L302.3 189.7L301.8 202.3L301.3 192.7L300.8 193.9L300.3 201.4L299.8 186.9L299.3 190.3L298.8 188.7L298.3 189.9L297.8 189.5L297.3 203.5L296.8 188.2L296.3 193.7L295.8 192.1L295.3 193.0L294.8 187.7L294.3 189.6L293.8 190.3L293.3 189.9L292.8 185.8L292.3 201.0L291.8 187.6L291.3 186.6L290.8 189.0L290.3 191.4L289.8 188.1L289.3 193.7L288.8 187.0L288.3 188.8L287.8 201.6L287.3 186.9L286.8 187.5L286.3 189.0L285.8 199.7L285.3 187.0L284.8 184.7L284.3 185.1L283.8 186.1L283.3 186.1L282.8 187.1L282.3 183.9L281.8 184.9L281.3 182.8L280.8 182.9L280.3 181.2L279.8 184.4L279.3 185.7L278.8 179.8L278.3 177.1L277.8 176.5L277.3 176.3L276.8 176.8L276.3 177.6L275.8 178.9L275.3 183.2L274.8 179.5L274.3 185.0L273.8 180.1L273.3 179.9L272.8 177.7L272.3 177.5L271.8 177.9L271.3 179.7L270.8 177.8L270.3 179.1L269.8 179.1L269.3 179.9L268.8 187.7L268.3 183.2L267.8 181.0L267.3 183.1L266.8 182.2L266.3 182.4L265.8 181.1L265.3 189.9L264.8 181.1L264.3 192.4L263.8 190.4L263.3 190.7L262.8 180.3L262.3 180.2L261.8 183.2L261.3 181.2L260.8 181.6L260.3 183.0L259.8 179.5L259.3 183.4L258.8 180.9L258.3 178.8L257.8 179.5L257.3 178.2L256.8 184.9L256.3 177.5L255.8 177.1L255.3 179.5L254.8 177.7L254.3 178.9L253.8 180.9L253.3 181.7L252.8 179.7L252.3 179.3L251.8 180.5L251.3 181.6L250.8 181.0L250.3 181.5L249.8 182.9L249.3 180.8L248.8 181.7L248.3 185.5L247.8 184.1L247.3 183.5L246.8 181.9L246.3 185.6L245.8 186.1L245.3 187.1L244.8 189.4L244.3 192.2L243.8 182.5L243.3 180.6L242.8 181.2L242.3 181.9L241.8 181.9L241.3 184.1L240.8 181.0L240.3 183.8L239.8 181.9L239.3 184.7L238.8 183.5L238.3 186.4L237.8 179.6L237.3 181.5L236.8 178.8L236.3 178.9L235.8 179.6L235.3 182.2L234.8 185.8L234.3 182.5L233.8 180.9L233.3 180.7L232.8 179.7L232.3 181.8L231.8 183.4L231.3 184.3L230.8 182.8L230.3 183.7L229.8 182.5L229.3 174.8L228.8 175.5L228.3 176.1L227.8 176.4L227.3 175.6L226.8 178.0L226.3 178.5L225.8 180.2L225.3 182.3L224.8 178.1L224.3 178.0L223.8 178.9L223.3 178.1L222.8 180.8L222.3 179.8L221.8 179.8L221.3 179.6L220.8 178.6L220.3 183.2L219.8 179.0L219.3 177.3L218.8 183.2L218.3 178.2L217.8 177.8L217.3 178.6L216.8 178.6L216.3 178.4L215.8 177.6L215.3 178.8L214.8 178.9L214.3 182.2L213.8 178.5L213.3 179.4L212.8 183.9L212.3 179.8L211.8 184.2L211.3 180.0L210.8 180.9L210.3 181.2L209.8 183.1L209.3 181.9L208.8 182.2L208.3 182.0L207.8 183.9L207.3 181.7L206.8 181.6L206.3 184.8L205.8 186.1L205.3 183.8L204.8 188.0L204.3 189.7L203.8 183.3L203.3 184.9L202.8 185.7L202.3 186.4L201.8 187.8L201.3 181.0L200.8 190.1L200.3 190.1L199.8 191.7L199.3 182.4L198.8 184.6L198.3 190.5L197.8 189.3L197.3 181.7L196.8 181.2L196.3 188.3L195.8 181.0L195.3 182.8L194.8 182.6L194.3 183.0L193.8 183.9L193.3 186.4L192.8 182.4L192.3 183.5L191.8 186.5L191.3 180.2L190.8 179.6L190.3 181.3L189.8 179.7L189.3 181.1L188.8 188.6L188.3 189.1L187.8 188.7L187.3 180.6L186.8 179.3L186.3 182.6L185.8 182.1L185.3 180.8L184.8 180.0L184.3 179.8L183.8 182.0L183.3 182.5L182.8 181.5L182.3 181.5L181.8 183.3L181.3 183.9L180.8 184.1L180.3 181.1L179.8 182.9L179.3 183.8L178.8 189.6L178.3 192.9L177.8 183.0L177.3 184.3L176.8 182.4L176.3 184.1L175.8 182.1L175.3 195.5L174.8 183.6L174.3 186.4L173.8 191.8L173.3 186.1L172.8 183.6L172.3 182.8L171.8 185.0L171.3 184.4L170.8 180.1L170.3 179.4L169.8 179.8L169.3 180.8L168.8 176.1L168.3 181.3L167.8 177.1L167.3 177.5L166.8 176.3L166.3 183.6L165.8 177.4L165.3 178.3L164.8 178.7L164.3 176.9L163.8 178.9L163.3 179.2L162.8 179.5L162.3 180.5L161.8 179.0L161.3 177.8L160.8 178.7L160.3 178.6L159.8 178.1L159.3 180.8L158.8 182.4L158.3 180.0L157.8 180.9L157.3 180.4L156.8 181.9L156.3 179.6L155.8 181.0L155.3 191.1L154.8 180.4L154.3 182.1L153.8 184.5L153.3 184.6L152.8 182.7L152.3 184.9L151.8 189.0L151.3 185.2L150.8 187.5L150.3 185.2L149.8 185.1L149.3 185.6L148.8 189.5L148.3 190.2L147.8 191.7L147.3 193.3L146.8 200.7L146.3 183.2L145.8 188.0L145.3 186.1L144.8 183.1L144.3 186.9L143.8 185.6L143.3 191.7L142.8 184.2L142.3 180.9L141.8 181.0L141.3 181.5L140.8 179.2L140.3 180.7L139.8 182.4L139.3 182.2L138.8 178.5L138.3 178.5L137.8 180.3L137.3 180.1L136.8 181.1L136.3 182.9L135.8 179.2L135.3 178.7L134.8 184.7L134.3 178.9L133.8 178.9L133.3 178.4L132.8 178.6L132.3 176.9L131.8 177.7L131.3 182.3L130.8 177.6L130.3 177.4L129.8 179.3L129.3 179.0L128.8 181.6L128.3 184.5L127.8 179.0L127.3 177.2L126.8 178.1L126.3 185.8L125.8 178.2L125.3 180.9L124.8 180.5L124.3 179.6L123.8 180.4L123.3 189.4L122.8 181.5L122.3 179.7L121.8 180.3L121.3 179.7L120.8 182.0L120.3 180.7L119.8 182.9L119.3 183.1L118.8 179.9L118.3 180.5L117.8 182.2L117.3 181.0L116.8 179.2L116.3 181.4L115.8 181.1L115.3 178.5L114.8 177.5L114.3 178.0L113.8 178.4L113.3 178.2L112.8 176.7L112.3 176.3L111.8 176.8L111.3 177.9L110.8 176.1L110.3 176.2L109.8 176.3L109.3 176.2L108.8 176.7L108.3 179.3L107.8 180.5L107.3 175.6L106.8 181.6L106.3 176.1L105.8 177.2L105.3 177.0L104.8 177.9L104.3 179.8L103.8 178.3L103.3 177.7L102.8 178.7L102.3 177.5L101.8 176.8L101.3 178.3L100.8 178.1L100.3 178.9L99.8 179.8L99.3 179.9L98.8 182.0L98.3 183.8L97.8 180.4L97.3 179.2L96.8 178.1L96.3 177.9L95.8 178.5L95.3 180.0L94.8 180.9L94.3 181.5L93.8 182.6L93.3 185.1L92.8 188.0L92.3 180.2L91.8 178.6L91.3 186.0L90.8 180.3L90.3 178.7L89.8 177.8L89.3 185.8L88.8 178.5L88.3 179.5L87.8 180.1L87.3 176.4L86.8 180.3L86.3 176.6L85.8 181.6L85.3 176.6L84.8 175.9L84.3 176.1L83.8 175.2L83.3 174.9Z" fill="#d9cd85" clip-path="url(#sel1)"/><rect x="439.3" y="125.8" width="0.9" height="89.8" fill="#4a7aa6"/><rect x="717" y="125.8" width="0.9" height="89.8" fill="#4a7aa6"/><rect x="229.9" y="125.8" width="1.4" height="89.8" fill="#a02fb4"/><rect x="503.2" y="125.8" width="1.1" height="89.8" fill="#b2443a"/></svg>
<div style="left:49.30px;top:197.60px;width:778.50px;height:89.20px;background:#1b1b20"></div>
<div class="t" style="left:13.60px;width:30px;text-align:right;top:198.29px;font-size:6.6px;line-height:9.24px;color:#c8c9cd;font-weight:normal;">-1</div>
<div style="left:44.50px;top:202.55px;width:4.50px;height:0.70px;background:#7e8086"></div>
<div class="t" style="left:13.60px;width:30px;text-align:right;top:212.49px;font-size:6.6px;line-height:9.24px;color:#c8c9cd;font-weight:normal;">-5</div>
<div style="left:44.50px;top:216.75px;width:4.50px;height:0.70px;background:#7e8086"></div>
<div class="t" style="left:13.60px;width:30px;text-align:right;top:225.19px;font-size:6.6px;line-height:9.24px;color:#c8c9cd;font-weight:normal;">-11</div>
<div style="left:44.50px;top:229.45px;width:4.50px;height:0.70px;background:#7e8086"></div>
<div class="t" style="left:13.60px;width:30px;text-align:right;top:237.89px;font-size:6.6px;line-height:9.24px;color:#c8c9cd;font-weight:normal;">-o<span style="margin-left:-1.3px">o</span></div>
<div style="left:44.50px;top:242.15px;width:4.50px;height:0.70px;background:#7e8086"></div>
<div class="t" style="left:13.60px;width:30px;text-align:right;top:249.89px;font-size:6.6px;line-height:9.24px;color:#c8c9cd;font-weight:normal;">-11</div>
<div style="left:44.50px;top:254.15px;width:4.50px;height:0.70px;background:#7e8086"></div>
<div class="t" style="left:13.60px;width:30px;text-align:right;top:262.79px;font-size:6.6px;line-height:9.24px;color:#c8c9cd;font-weight:normal;">-5</div>
<div style="left:44.50px;top:267.05px;width:4.50px;height:0.70px;background:#7e8086"></div>
<div class="t" style="left:13.60px;width:30px;text-align:right;top:277.29px;font-size:6.6px;line-height:9.24px;color:#c8c9cd;font-weight:normal;">-1</div>
<div style="left:44.50px;top:281.55px;width:4.50px;height:0.70px;background:#7e8086"></div>
<svg style="left:49.30px;top:197.60px;width:778.5px;height:89.20000000000002px;" viewBox="83.3 220.1 778.5 89.20000000000002" width="778.5" height="89.20000000000002"><defs><clipPath id="sel2"><rect x="439.6" y="220.1" width="278" height="89.20000000000002"/></clipPath></defs><rect x="439.6" y="220.1" width="278" height="89.20000000000002" fill="#1f2b3a"/><path d="M83.3 258.1L83.8 259.6L84.3 257.9L84.8 258.8L85.3 260.0L85.8 258.7L86.3 258.5L86.8 255.2L87.3 260.2L87.8 258.7L88.3 257.6L88.8 252.7L89.3 253.7L89.8 253.7L90.3 248.3L90.8 254.8L91.3 255.4L91.8 254.7L92.3 255.4L92.8 253.8L93.3 253.7L93.8 254.1L94.3 253.7L94.8 254.1L95.3 253.4L95.8 251.7L96.3 253.5L96.8 255.5L97.3 255.8L97.8 256.1L98.3 255.7L98.8 249.8L99.3 255.5L99.8 257.6L100.3 257.0L100.8 258.5L101.3 255.4L101.8 253.7L102.3 256.9L102.8 255.9L103.3 257.7L103.8 256.8L104.3 257.1L104.8 258.6L105.3 259.0L105.8 256.5L106.3 256.0L106.8 254.8L107.3 258.9L107.8 259.8L108.3 258.9L108.8 258.6L109.3 260.2L109.8 259.4L110.3 260.1L110.8 256.1L111.3 257.9L111.8 257.7L112.3 258.5L112.8 257.4L113.3 256.2L113.8 256.3L114.3 256.3L114.8 257.5L115.3 249.0L115.8 257.3L116.3 255.0L116.8 246.6L117.3 251.1L117.8 254.5L118.3 252.9L118.8 254.8L119.3 256.3L119.8 253.7L120.3 253.4L120.8 255.7L121.3 254.3L121.8 254.8L122.3 253.0L122.8 254.5L123.3 255.8L123.8 252.0L124.3 252.8L124.8 247.5L125.3 255.6L125.8 256.4L126.3 256.6L126.8 255.8L127.3 257.3L127.8 249.4L128.3 255.7L128.8 256.6L129.3 256.4L129.8 256.5L130.3 258.7L130.8 258.1L131.3 257.6L131.8 254.1L132.3 254.8L132.8 255.6L133.3 257.4L133.8 256.1L134.3 257.6L134.8 251.8L135.3 257.3L135.8 257.3L136.3 254.2L136.8 255.3L137.3 250.7L137.8 255.1L138.3 254.8L138.8 257.8L139.3 251.1L139.8 257.7L140.3 257.2L140.8 256.1L141.3 249.3L141.8 254.7L142.3 241.1L142.8 250.6L143.3 252.4L143.8 252.9L144.3 248.7L144.8 247.6L145.3 246.7L145.8 246.0L146.3 247.2L146.8 250.9L147.3 248.0L147.8 248.9L148.3 245.2L148.8 248.1L149.3 249.2L149.8 250.2L150.3 240.7L150.8 250.1L151.3 249.9L151.8 239.3L152.3 251.7L152.8 251.3L153.3 255.0L153.8 247.4L154.3 250.0L154.8 254.6L155.3 252.3L155.8 253.2L156.3 254.4L156.8 256.2L157.3 255.2L157.8 256.0L158.3 255.0L158.8 255.2L159.3 252.7L159.8 252.8L160.3 254.2L160.8 255.2L161.3 256.5L161.8 251.6L162.3 253.0L162.8 251.4L163.3 255.5L163.8 257.6L164.3 257.4L164.8 256.8L165.3 257.6L165.8 258.2L166.3 258.1L166.8 256.2L167.3 256.3L167.8 254.5L168.3 253.3L168.8 253.7L169.3 258.7L169.8 256.8L170.3 254.7L170.8 255.1L171.3 253.8L171.8 254.5L172.3 246.3L172.8 248.9L173.3 249.3L173.8 253.5L174.3 250.7L174.8 251.1L175.3 251.8L175.8 252.6L176.3 246.2L176.8 248.1L177.3 248.2L177.8 250.2L178.3 254.3L178.8 250.5L179.3 253.6L179.8 253.4L180.3 253.0L180.8 251.1L181.3 252.1L181.8 254.8L182.3 252.2L182.8 255.8L183.3 253.4L183.8 253.4L184.3 254.9L184.8 253.8L185.3 254.1L185.8 256.2L186.3 255.3L186.8 253.8L187.3 255.7L187.8 255.8L188.3 254.4L188.8 257.0L189.3 254.1L189.8 252.3L190.3 251.3L190.8 252.4L191.3 253.4L191.8 253.5L192.3 246.3L192.8 253.2L193.3 256.6L193.8 254.1L194.3 254.0L194.8 244.3L195.3 252.6L195.8 254.2L196.3 252.0L196.8 252.3L197.3 254.7L197.8 250.8L198.3 252.4L198.8 250.4L199.3 253.2L199.8 252.6L200.3 252.0L200.8 250.9L201.3 243.2L201.8 252.9L202.3 251.6L202.8 246.3L203.3 248.7L203.8 250.4L204.3 249.4L204.8 242.9L205.3 251.3L205.8 255.3L206.3 254.1L206.8 246.1L207.3 250.1L207.8 253.7L208.3 253.1L208.8 245.8L209.3 255.5L209.8 256.8L210.3 256.7L210.8 256.2L211.3 257.1L211.8 252.0L212.3 250.2L212.8 257.2L213.3 256.0L213.8 257.3L214.3 259.1L214.8 253.3L215.3 258.1L215.8 257.5L216.3 257.4L216.8 257.3L217.3 257.4L217.8 256.5L218.3 257.1L218.8 257.2L219.3 257.0L219.8 256.5L220.3 257.5L220.8 250.3L221.3 256.4L221.8 256.2L222.3 252.1L222.8 250.8L223.3 257.6L223.8 255.6L224.3 257.1L224.8 257.0L225.3 258.7L225.8 259.1L226.3 257.9L226.8 258.9L227.3 256.2L227.8 257.6L228.3 258.8L228.8 259.6L229.3 259.4L229.8 257.0L230.3 255.0L230.8 254.8L231.3 248.5L231.8 248.0L232.3 251.6L232.8 253.9L233.3 252.6L233.8 248.2L234.3 250.0L234.8 253.5L235.3 248.2L235.8 256.1L236.3 256.0L236.8 257.1L237.3 254.7L237.8 253.2L238.3 256.0L238.8 245.9L239.3 252.5L239.8 249.8L240.3 251.3L240.8 250.9L241.3 252.3L241.8 252.8L242.3 252.5L242.8 253.9L243.3 254.0L243.8 251.4L244.3 252.9L244.8 241.8L245.3 249.6L245.8 251.9L246.3 249.7L246.8 251.5L247.3 251.3L247.8 250.1L248.3 253.3L248.8 253.6L249.3 254.5L249.8 252.7L250.3 249.8L250.8 254.4L251.3 252.1L251.8 253.9L252.3 254.3L252.8 255.3L253.3 249.3L253.8 258.6L254.3 258.8L254.8 252.8L255.3 259.1L255.8 256.1L256.3 258.0L256.8 255.5L257.3 256.7L257.8 254.6L258.3 257.0L258.8 246.0L259.3 253.5L259.8 256.6L260.3 254.4L260.8 256.2L261.3 253.0L261.8 249.1L262.3 251.2L262.8 253.7L263.3 254.4L263.8 253.6L264.3 254.0L264.8 252.4L265.3 254.5L265.8 252.3L266.3 253.7L266.8 253.0L267.3 254.8L267.8 253.7L268.3 254.4L268.8 248.5L269.3 252.5L269.8 254.1L270.3 253.5L270.8 254.2L271.3 254.9L271.8 256.0L272.3 255.3L272.8 257.2L273.3 256.3L273.8 256.8L274.3 257.8L274.8 252.7L275.3 254.5L275.8 255.9L276.3 255.6L276.8 257.8L277.3 256.8L277.8 257.6L278.3 258.0L278.8 250.1L279.3 252.3L279.8 253.8L280.3 249.9L280.8 253.3L281.3 250.5L281.8 238.8L282.3 245.5L282.8 238.6L283.3 248.0L283.8 246.6L284.3 247.7L284.8 248.5L285.3 247.6L285.8 250.0L286.3 239.1L286.8 250.8L287.3 249.9L287.8 249.9L288.3 241.3L288.8 241.3L289.3 242.7L289.8 244.5L290.3 242.2L290.8 245.0L291.3 244.6L291.8 248.2L292.3 245.9L292.8 239.3L293.3 241.2L293.8 241.9L294.3 242.8L294.8 248.8L295.3 244.1L295.8 242.0L296.3 239.8L296.8 243.2L297.3 241.2L297.8 246.9L298.3 231.5L298.8 242.8L299.3 245.7L299.8 234.3L300.3 247.5L300.8 246.3L301.3 246.9L301.8 246.6L302.3 247.0L302.8 241.3L303.3 245.3L303.8 243.7L304.3 248.5L304.8 247.8L305.3 245.6L305.8 246.6L306.3 247.7L306.8 244.9L307.3 248.4L307.8 243.8L308.3 245.7L308.8 249.0L309.3 246.9L309.8 248.9L310.3 240.8L310.8 246.5L311.3 235.7L311.8 247.2L312.3 247.1L312.8 241.6L313.3 237.0L313.8 246.4L314.3 248.0L314.8 242.0L315.3 249.4L315.8 249.8L316.3 253.8L316.8 254.9L317.3 252.8L317.8 253.2L318.3 250.4L318.8 250.1L319.3 251.6L319.8 248.1L320.3 256.5L320.8 254.9L321.3 255.6L321.8 249.1L322.3 257.3L322.8 255.2L323.3 255.3L323.8 256.6L324.3 257.7L324.8 258.9L325.3 259.5L325.8 256.4L326.3 257.0L326.8 253.2L327.3 251.4L327.8 251.2L328.3 253.8L328.8 251.1L329.3 253.8L329.8 251.8L330.3 241.1L330.8 249.8L331.3 240.5L331.8 253.0L332.3 252.7L332.8 251.7L333.3 246.1L333.8 249.5L334.3 248.5L334.8 246.9L335.3 243.5L335.8 245.8L336.3 247.5L336.8 249.1L337.3 246.5L337.8 247.3L338.3 247.9L338.8 248.1L339.3 247.5L339.8 237.8L340.3 248.8L340.8 244.4L341.3 247.3L341.8 247.2L342.3 248.3L342.8 245.8L343.3 249.5L343.8 248.4L344.3 249.0L344.8 248.3L345.3 241.0L345.8 249.9L346.3 249.6L346.8 251.7L347.3 250.4L347.8 254.4L348.3 253.2L348.8 245.2L349.3 245.0L349.8 255.2L350.3 254.3L350.8 255.2L351.3 252.0L351.8 255.3L352.3 256.7L352.8 256.8L353.3 257.7L353.8 253.7L354.3 254.0L354.8 250.6L355.3 248.8L355.8 250.2L356.3 248.9L356.8 250.1L357.3 239.9L357.8 252.7L358.3 251.3L358.8 248.9L359.3 249.5L359.8 249.7L360.3 249.5L360.8 243.6L361.3 245.4L361.8 244.8L362.3 246.8L362.8 248.1L363.3 250.3L363.8 247.0L364.3 247.1L364.8 251.6L365.3 250.6L365.8 236.5L366.3 233.8L366.8 245.7L367.3 247.2L367.8 240.5L368.3 243.7L368.8 246.9L369.3 247.8L369.8 247.5L370.3 246.3L370.8 247.1L371.3 245.7L371.8 237.4L372.3 242.3L372.8 245.2L373.3 243.4L373.8 246.9L374.3 250.6L374.8 253.0L375.3 252.2L375.8 240.6L376.3 252.4L376.8 242.7L377.3 255.1L377.8 254.4L378.3 255.6L378.8 255.5L379.3 255.0L379.8 248.1L380.3 252.5L380.8 256.6L381.3 258.0L381.8 257.8L382.3 252.9L382.8 254.2L383.3 250.7L383.8 250.6L384.3 240.0L384.8 247.3L385.3 251.5L385.8 252.0L386.3 249.3L386.8 251.1L387.3 252.2L387.8 249.5L388.3 247.7L388.8 248.9L389.3 249.6L389.8 249.5L390.3 250.5L390.8 251.2L391.3 254.7L391.8 255.0L392.3 240.8L392.8 241.8L393.3 253.8L393.8 243.2L394.3 241.8L394.8 249.0L395.3 250.4L395.8 247.4L396.3 250.3L396.8 254.5L397.3 254.3L397.8 254.1L398.3 248.6L398.8 251.4L399.3 251.9L399.8 253.7L400.3 256.4L400.8 255.7L401.3 254.9L401.8 255.3L402.3 250.0L402.8 257.3L403.3 256.1L403.8 256.8L404.3 251.7L404.8 247.9L405.3 250.3L405.8 247.9L406.3 251.4L406.8 248.9L407.3 249.6L407.8 248.6L408.3 246.8L408.8 244.9L409.3 239.0L409.8 244.2L410.3 244.9L410.8 245.3L411.3 248.2L411.8 243.4L412.3 241.8L412.8 243.5L413.3 243.2L413.8 243.1L414.3 242.8L414.8 227.8L415.3 226.5L415.8 241.5L416.3 228.7L416.8 236.4L417.3 235.6L417.8 244.5L418.3 238.8L418.8 247.7L419.3 230.8L419.8 240.1L420.3 238.4L420.8 243.0L421.3 238.3L421.8 245.1L422.3 243.2L422.8 246.1L423.3 247.6L423.8 244.4L424.3 249.8L424.8 248.9L425.3 246.9L425.8 249.7L426.3 247.9L426.8 237.7L427.3 245.6L427.8 247.1L428.3 250.1L428.8 249.1L429.3 250.4L429.8 251.7L430.3 253.9L430.8 254.0L431.3 253.5L431.8 254.7L432.3 256.3L432.8 255.0L433.3 251.1L433.8 255.0L434.3 256.7L434.8 251.2L435.3 258.6L435.8 258.0L436.3 258.7L436.8 256.6L437.3 249.0L437.8 244.9L438.3 243.8L438.8 245.1L439.3 245.9L439.8 245.8L440.3 225.6L440.8 234.0L441.3 243.2L441.8 224.2L442.3 239.0L442.8 243.0L443.3 243.3L443.8 241.5L444.3 243.3L444.8 246.7L445.3 245.4L445.8 244.7L446.3 239.2L446.8 243.0L447.3 233.8L447.8 249.9L448.3 241.6L448.8 244.4L449.3 251.8L449.8 250.7L450.3 245.8L450.8 248.7L451.3 250.8L451.8 252.5L452.3 247.2L452.8 248.0L453.3 247.8L453.8 248.5L454.3 248.8L454.8 248.1L455.3 247.9L455.8 249.3L456.3 248.6L456.8 246.9L457.3 246.7L457.8 245.5L458.3 249.9L458.8 249.4L459.3 248.9L459.8 252.2L460.3 239.8L460.8 252.8L461.3 252.5L461.8 249.2L462.3 251.9L462.8 256.3L463.3 256.6L463.8 256.6L464.3 257.7L464.8 258.5L465.3 259.3L465.8 253.0L466.3 235.6L466.8 245.0L467.3 234.1L467.8 239.9L468.3 236.5L468.8 239.3L469.3 240.9L469.8 233.0L470.3 224.2L470.8 233.8L471.3 236.8L471.8 239.3L472.3 234.7L472.8 241.5L473.3 225.6L473.8 239.9L474.3 243.1L474.8 245.1L475.3 226.3L475.8 242.5L476.3 244.7L476.8 242.3L477.3 246.2L477.8 236.8L478.3 241.3L478.8 245.0L479.3 238.7L479.8 233.4L480.3 244.2L480.8 233.9L481.3 245.0L481.8 244.9L482.3 247.7L482.8 249.2L483.3 253.1L483.8 251.1L484.3 250.9L484.8 252.6L485.3 254.6L485.8 253.9L486.3 252.2L486.8 252.3L487.3 253.9L487.8 255.7L488.3 251.6L488.8 256.0L489.3 255.1L489.8 257.4L490.3 257.3L490.8 257.9L491.3 255.4L491.8 250.3L492.3 249.9L492.8 249.4L493.3 245.5L493.8 244.2L494.3 245.6L494.8 247.3L495.3 246.2L495.8 246.8L496.3 246.9L496.8 246.7L497.3 245.4L497.8 244.5L498.3 245.6L498.8 226.9L499.3 240.9L499.8 225.4L500.3 240.3L500.8 234.9L501.3 242.1L501.8 241.9L502.3 247.9L502.8 244.7L503.3 245.0L503.8 248.0L504.3 243.5L504.8 242.2L505.3 245.3L505.8 251.7L506.3 250.2L506.8 248.5L507.3 248.6L507.8 249.0L508.3 249.6L508.8 249.2L509.3 241.0L509.8 252.8L510.3 253.5L510.8 252.4L511.3 253.1L511.8 250.6L512.3 250.8L512.8 248.5L513.3 252.5L513.8 252.3L514.3 252.0L514.8 254.0L515.3 231.3L515.8 243.4L516.3 239.5L516.8 244.9L517.3 240.2L517.8 231.9L518.3 235.7L518.8 238.6L519.3 235.5L519.8 235.3L520.3 236.3L520.8 235.8L521.3 240.4L521.8 244.1L522.3 241.9L522.8 224.2L523.3 236.4L523.8 238.7L524.3 231.4L524.8 240.5L525.3 233.7L525.8 224.2L526.3 239.8L526.8 239.3L527.3 229.1L527.8 243.9L528.3 246.7L528.8 244.2L529.3 226.8L529.8 247.4L530.3 236.9L530.8 246.4L531.3 243.4L531.8 248.5L532.3 243.9L532.8 246.9L533.3 252.4L533.8 249.7L534.3 250.5L534.8 250.5L535.3 248.7L535.8 242.5L536.3 245.9L536.8 232.6L537.3 248.1L537.8 239.5L538.3 244.3L538.8 245.2L539.3 224.6L539.8 246.0L540.3 230.4L540.8 242.4L541.3 245.0L541.8 246.5L542.3 225.1L542.8 237.6L543.3 244.8L543.8 245.8L544.3 238.9L544.8 244.4L545.3 224.2L545.8 240.1L546.3 240.4L546.8 239.9L547.3 239.2L547.8 241.6L548.3 239.0L548.8 237.6L549.3 233.7L549.8 235.2L550.3 240.3L550.8 237.3L551.3 243.7L551.8 243.2L552.3 240.1L552.8 240.5L553.3 240.9L553.8 238.3L554.3 240.7L554.8 242.4L555.3 243.4L555.8 240.8L556.3 245.3L556.8 243.4L557.3 226.1L557.8 235.1L558.3 239.5L558.8 244.9L559.3 241.4L559.8 239.2L560.3 239.9L560.8 243.7L561.3 244.4L561.8 246.2L562.3 243.5L562.8 247.4L563.3 243.9L563.8 244.3L564.3 246.0L564.8 249.0L565.3 251.2L565.8 244.9L566.3 241.9L566.8 248.7L567.3 247.9L567.8 245.6L568.3 251.0L568.8 240.4L569.3 242.8L569.8 245.4L570.3 245.1L570.8 247.8L571.3 251.6L571.8 244.0L572.3 250.6L572.8 253.4L573.3 254.1L573.8 254.2L574.3 243.9L574.8 254.9L575.3 250.4L575.8 252.3L576.3 256.4L576.8 254.6L577.3 243.7L577.8 242.7L578.3 241.9L578.8 240.4L579.3 239.6L579.8 240.6L580.3 233.8L580.8 238.4L581.3 242.2L581.8 241.3L582.3 244.2L582.8 246.1L583.3 241.7L583.8 247.0L584.3 241.9L584.8 246.5L585.3 241.1L585.8 246.7L586.3 241.9L586.8 242.1L587.3 243.9L587.8 249.5L588.3 247.0L588.8 245.3L589.3 243.2L589.8 247.7L590.3 240.0L590.8 245.2L591.3 239.3L591.8 244.3L592.3 239.7L592.8 224.2L593.3 224.2L593.8 241.2L594.3 239.0L594.8 226.7L595.3 228.4L595.8 224.2L596.3 224.2L596.8 239.8L597.3 243.5L597.8 241.7L598.3 238.1L598.8 243.0L599.3 224.2L599.8 228.8L600.3 238.8L600.8 235.5L601.3 236.8L601.8 237.1L602.3 241.4L602.8 226.7L603.3 228.0L603.8 234.8L604.3 233.6L604.8 240.6L605.3 224.2L605.8 229.3L606.3 239.5L606.8 234.2L607.3 235.0L607.8 238.3L608.3 234.7L608.8 233.5L609.3 236.6L609.8 240.0L610.3 235.8L610.8 233.4L611.3 224.2L611.8 234.8L612.3 240.6L612.8 245.5L613.3 241.1L613.8 239.4L614.3 240.8L614.8 247.7L615.3 245.0L615.8 232.1L616.3 245.4L616.8 241.1L617.3 246.8L617.8 243.5L618.3 244.9L618.8 247.1L619.3 249.0L619.8 245.7L620.3 247.4L620.8 247.9L621.3 249.8L621.8 238.3L622.3 247.6L622.8 250.4L623.3 245.7L623.8 228.6L624.3 227.5L624.8 241.9L625.3 241.4L625.8 245.0L626.3 237.0L626.8 244.7L627.3 239.1L627.8 236.8L628.3 244.1L628.8 241.8L629.3 241.3L629.8 236.6L630.3 224.2L630.8 224.2L631.3 232.8L631.8 230.4L632.3 237.6L632.8 224.2L633.3 233.7L633.8 230.9L634.3 238.5L634.8 232.5L635.3 233.7L635.8 235.1L636.3 239.6L636.8 235.1L637.3 235.7L637.8 224.2L638.3 227.2L638.8 234.8L639.3 232.4L639.8 236.1L640.3 238.1L640.8 236.6L641.3 237.1L641.8 235.4L642.3 233.8L642.8 232.6L643.3 236.9L643.8 240.0L644.3 240.3L644.8 241.3L645.3 237.9L645.8 243.3L646.3 240.9L646.8 242.8L647.3 239.0L647.8 235.7L648.3 240.6L648.8 238.4L649.3 243.8L649.8 230.9L650.3 235.2L650.8 230.5L651.3 241.3L651.8 245.2L652.3 226.7L652.8 246.0L653.3 242.5L653.8 232.4L654.3 232.6L654.8 247.0L655.3 247.7L655.8 243.6L656.3 244.6L656.8 247.4L657.3 248.9L657.8 224.5L658.3 246.1L658.8 242.0L659.3 242.2L659.8 237.0L660.3 237.2L660.8 239.1L661.3 224.2L661.8 224.2L662.3 240.0L662.8 241.2L663.3 240.5L663.8 239.9L664.3 237.0L664.8 238.8L665.3 224.5L665.8 239.2L666.3 241.9L666.8 239.0L667.3 225.8L667.8 241.1L668.3 230.7L668.8 240.6L669.3 243.2L669.8 234.8L670.3 250.3L670.8 240.2L671.3 245.6L671.8 250.1L672.3 248.6L672.8 248.1L673.3 248.9L673.8 250.7L674.3 250.3L674.8 243.6L675.3 249.9L675.8 252.0L676.3 250.9L676.8 252.5L677.3 244.5L677.8 252.5L678.3 246.0L678.8 247.4L679.3 245.7L679.8 253.7L680.3 254.4L680.8 247.6L681.3 251.6L681.8 256.4L682.3 255.2L682.8 248.5L683.3 256.3L683.8 256.5L684.3 257.4L684.8 257.7L685.3 258.7L685.8 255.6L686.3 249.4L686.8 245.2L687.3 237.0L687.8 238.9L688.3 241.6L688.8 241.6L689.3 230.7L689.8 242.2L690.3 242.8L690.8 245.8L691.3 245.9L691.8 224.2L692.3 237.8L692.8 224.2L693.3 237.9L693.8 242.2L694.3 232.4L694.8 236.4L695.3 235.7L695.8 226.5L696.3 236.4L696.8 236.9L697.3 225.8L697.8 238.1L698.3 240.0L698.8 244.6L699.3 240.1L699.8 226.7L700.3 238.6L700.8 240.8L701.3 240.8L701.8 244.0L702.3 248.8L702.8 243.3L703.3 247.5L703.8 246.9L704.3 246.9L704.8 243.3L705.3 245.0L705.8 246.0L706.3 247.0L706.8 246.4L707.3 248.7L707.8 249.7L708.3 249.9L708.8 250.3L709.3 251.7L709.8 248.6L710.3 248.6L710.8 250.3L711.3 253.6L711.8 245.4L712.3 254.1L712.8 253.1L713.3 255.7L713.8 254.3L714.3 248.2L714.8 256.8L715.3 252.4L715.8 253.4L716.3 255.7L716.8 251.3L717.3 236.6L717.8 224.2L718.3 239.9L718.8 234.8L719.3 236.2L719.8 236.8L720.3 232.6L720.8 236.9L721.3 238.8L721.8 231.9L722.3 224.2L722.8 242.1L723.3 229.6L723.8 236.5L724.3 236.0L724.8 245.3L725.3 239.1L725.8 240.2L726.3 241.7L726.8 243.4L727.3 249.5L727.8 236.2L728.3 238.1L728.8 242.3L729.3 241.2L729.8 246.4L730.3 251.3L730.8 249.6L731.3 250.1L731.8 251.5L732.3 251.6L732.8 252.1L733.3 254.9L733.8 252.4L734.3 255.9L734.8 248.7L735.3 253.5L735.8 255.3L736.3 254.7L736.8 252.2L737.3 246.6L737.8 246.9L738.3 244.4L738.8 246.0L739.3 228.9L739.8 234.1L740.3 234.3L740.8 236.6L741.3 240.3L741.8 224.4L742.3 238.0L742.8 239.5L743.3 241.3L743.8 244.2L744.3 241.5L744.8 224.2L745.3 230.1L745.8 238.8L746.3 236.9L746.8 239.4L747.3 242.1L747.8 246.0L748.3 227.6L748.8 244.7L749.3 248.8L749.8 245.2L750.3 243.4L750.8 231.2L751.3 246.7L751.8 249.1L752.3 248.1L752.8 249.0L753.3 250.8L753.8 244.6L754.3 247.9L754.8 247.5L755.3 251.1L755.8 252.1L756.3 245.3L756.8 251.7L757.3 252.7L757.8 254.3L758.3 246.0L758.8 254.2L759.3 254.8L759.8 257.6L760.3 255.5L760.8 257.0L761.3 251.3L761.8 253.8L762.3 257.3L762.8 256.9L763.3 257.7L763.8 258.2L764.3 256.1L764.8 258.4L765.3 259.0L765.8 259.9L766.3 260.6L766.8 259.3L767.3 259.5L767.8 260.2L768.3 260.9L768.8 257.7L769.3 258.6L769.8 261.5L770.3 260.1L770.8 261.3L771.3 262.0L771.8 262.1L772.3 262.1L772.8 262.9L773.3 262.6L773.8 260.2L774.3 262.3L774.8 262.4L775.3 261.9L775.8 261.5L776.3 262.5L776.8 262.3L777.3 262.4L777.8 260.9L778.3 262.4L778.8 262.4L779.3 262.6L779.8 261.4L780.3 262.6L780.8 262.5L781.3 262.8L781.8 262.8L782.3 262.3L782.8 262.7L783.3 262.4L783.8 262.6L784.3 263.1L784.8 263.0L785.3 262.9L785.8 262.8L786.3 263.2L786.8 263.0L787.3 262.8L787.8 261.1L788.3 262.0L788.8 262.5L789.3 262.9L789.8 262.3L790.3 262.4L790.8 262.8L791.3 262.4L791.8 262.3L792.3 262.9L792.8 261.1L793.3 261.8L793.8 262.5L794.3 262.4L794.8 262.2L795.3 261.9L795.8 262.0L796.3 262.7L796.8 262.5L797.3 262.6L797.8 262.4L798.3 262.7L798.8 262.5L799.3 262.4L799.8 260.6L800.3 262.2L800.8 262.6L801.3 262.8L801.8 261.7L802.3 262.4L802.8 262.8L803.3 262.8L803.8 263.4L804.3 263.1L804.8 263.6L805.3 263.5L805.8 263.5L806.3 263.4L806.8 263.1L807.3 263.5L807.8 263.8L808.3 263.7L808.8 263.3L809.3 264.0L809.8 263.9L810.3 264.1L810.8 263.9L811.3 263.9L811.8 264.0L812.3 264.0L812.8 264.2L813.3 264.0L813.8 264.1L814.3 264.1L814.8 264.3L815.3 264.1L815.8 264.2L816.3 264.0L816.8 263.8L817.3 264.3L817.8 264.3L818.3 264.0L818.8 264.1L819.3 264.2L819.8 264.3L820.3 264.3L820.8 264.3L821.3 264.3L821.8 264.3L822.3 264.3L822.8 264.3L823.3 264.3L823.8 264.0L824.3 264.3L824.8 264.3L825.3 264.3L825.8 264.3L826.3 264.3L826.8 264.3L827.3 264.2L827.8 264.1L828.3 264.3L828.8 264.3L829.3 264.2L829.8 264.3L830.3 264.3L830.8 264.3L831.3 264.3L831.8 264.3L832.3 264.3L832.8 264.1L833.3 264.3L833.8 264.3L834.3 264.3L834.8 264.3L835.3 264.3L835.8 264.3L836.3 264.3L836.8 264.3L837.3 264.3L837.8 264.3L838.3 264.3L838.8 264.3L839.3 264.3L839.8 264.0L840.3 264.3L840.8 264.3L841.3 264.3L841.8 264.3L842.3 264.3L842.8 264.3L843.3 264.3L843.8 264.3L844.3 264.3L844.8 264.0L845.3 264.3L845.8 264.3L846.3 264.3L846.8 264.3L847.3 264.2L847.8 264.3L848.3 264.3L848.8 264.1L849.3 264.3L849.8 264.3L850.3 264.3L850.8 264.3L851.3 264.3L851.8 264.1L852.3 264.3L852.8 264.3L853.3 264.3L853.8 264.3L854.3 264.1L854.8 264.3L855.3 264.3L855.8 264.3L856.3 264.3L856.8 264.1L857.3 264.3L857.8 264.1L858.3 264.3L858.8 264.2L859.3 264.3L859.8 264.3L860.3 264.3L860.8 264.3L861.3 264.2L861.8 264.3L861.8 265.3L861.3 265.1L860.8 265.1L860.3 265.1L859.8 265.1L859.3 265.2L858.8 265.1L858.3 265.1L857.8 265.1L857.3 265.1L856.8 265.1L856.3 265.1L855.8 265.1L855.3 265.1L854.8 265.1L854.3 265.1L853.8 265.1L853.3 265.1L852.8 265.1L852.3 265.2L851.8 265.2L851.3 265.1L850.8 265.1L850.3 265.2L849.8 265.2L849.3 265.1L848.8 265.1L848.3 265.1L847.8 265.1L847.3 265.1L846.8 265.1L846.3 265.1L845.8 265.1L845.3 265.1L844.8 265.1L844.3 265.3L843.8 265.1L843.3 265.1L842.8 265.1L842.3 265.1L841.8 265.1L841.3 265.1L840.8 265.1L840.3 265.1L839.8 265.1L839.3 265.1L838.8 265.1L838.3 265.1L837.8 265.1L837.3 265.1L836.8 265.1L836.3 265.4L835.8 265.1L835.3 265.3L834.8 265.3L834.3 265.1L833.8 265.2L833.3 265.2L832.8 265.1L832.3 265.1L831.8 265.1L831.3 265.1L830.8 265.1L830.3 265.1L829.8 265.1L829.3 265.1L828.8 265.1L828.3 265.3L827.8 265.1L827.3 265.1L826.8 265.1L826.3 265.2L825.8 265.1L825.3 265.2L824.8 265.1L824.3 265.1L823.8 265.1L823.3 265.1L822.8 265.1L822.3 265.3L821.8 265.1L821.3 265.1L820.8 265.1L820.3 265.1L819.8 265.1L819.3 265.1L818.8 265.2L818.3 265.2L817.8 265.3L817.3 265.4L816.8 265.2L816.3 265.2L815.8 265.4L815.3 265.5L814.8 265.3L814.3 265.3L813.8 265.3L813.3 265.4L812.8 265.4L812.3 265.3L811.8 265.4L811.3 265.3L810.8 265.3L810.3 265.5L809.8 265.4L809.3 265.5L808.8 265.5L808.3 265.5L807.8 265.7L807.3 265.9L806.8 265.6L806.3 265.8L805.8 266.2L805.3 266.1L804.8 266.3L804.3 266.5L803.8 266.4L803.3 266.5L802.8 266.2L802.3 266.8L801.8 267.8L801.3 266.6L800.8 268.0L800.3 267.5L799.8 267.0L799.3 267.2L798.8 267.0L798.3 267.7L797.8 267.3L797.3 267.6L796.8 266.9L796.3 269.3L795.8 267.2L795.3 267.1L794.8 266.9L794.3 267.2L793.8 267.5L793.3 267.3L792.8 267.2L792.3 267.2L791.8 267.1L791.3 266.5L790.8 266.5L790.3 267.0L789.8 266.5L789.3 267.1L788.8 267.0L788.3 267.4L787.8 267.0L787.3 267.9L786.8 266.2L786.3 266.3L785.8 266.0L785.3 266.2L784.8 266.2L784.3 266.6L783.8 266.6L783.3 266.6L782.8 267.1L782.3 268.0L781.8 267.4L781.3 266.8L780.8 266.5L780.3 266.6L779.8 267.0L779.3 267.0L778.8 266.7L778.3 267.2L777.8 266.9L777.3 266.7L776.8 266.8L776.3 266.8L775.8 268.7L775.3 266.7L774.8 266.6L774.3 267.3L773.8 266.8L773.3 267.3L772.8 267.3L772.3 267.6L771.8 267.2L771.3 267.3L770.8 267.3L770.3 267.9L769.8 267.8L769.3 268.2L768.8 268.2L768.3 270.1L767.8 270.5L767.3 270.1L766.8 272.5L766.3 270.8L765.8 270.0L765.3 269.4L764.8 270.4L764.3 270.5L763.8 277.1L763.3 272.6L762.8 271.2L762.3 273.3L761.8 273.5L761.3 274.3L760.8 277.2L760.3 272.8L759.8 276.3L759.3 275.2L758.8 278.0L758.3 274.8L757.8 275.5L757.3 283.0L756.8 276.4L756.3 276.3L755.8 277.0L755.3 278.4L754.8 287.3L754.3 281.3L753.8 277.7L753.3 282.3L752.8 281.1L752.3 281.1L751.8 280.9L751.3 284.2L750.8 284.5L750.3 290.6L749.8 281.5L749.3 287.5L748.8 290.2L748.3 285.7L747.8 293.7L747.3 299.9L746.8 305.2L746.3 289.1L745.8 288.7L745.3 290.9L744.8 290.7L744.3 291.8L743.8 305.2L743.3 289.1L742.8 292.0L742.3 305.2L741.8 293.0L741.3 284.6L740.8 288.5L740.3 283.8L739.8 284.1L739.3 287.1L738.8 301.0L738.3 283.1L737.8 283.6L737.3 280.7L736.8 279.6L736.3 273.7L735.8 272.6L735.3 282.8L734.8 274.0L734.3 285.4L733.8 277.4L733.3 277.7L732.8 278.5L732.3 283.4L731.8 276.2L731.3 279.0L730.8 278.9L730.3 281.5L729.8 281.9L729.3 283.4L728.8 279.3L728.3 280.3L727.8 281.2L727.3 287.4L726.8 286.1L726.3 297.1L725.8 287.8L725.3 289.7L724.8 282.7L724.3 304.9L723.8 305.2L723.3 305.2L722.8 288.1L722.3 288.0L721.8 289.2L721.3 290.2L720.8 296.0L720.3 305.2L719.8 288.3L719.3 292.7L718.8 296.2L718.3 293.1L717.8 291.7L717.3 281.9L716.8 281.1L716.3 274.6L715.8 275.0L715.3 276.8L714.8 275.7L714.3 274.6L713.8 275.1L713.3 274.6L712.8 275.0L712.3 276.0L711.8 284.4L711.3 279.2L710.8 280.8L710.3 284.2L709.8 279.4L709.3 275.6L708.8 280.3L708.3 278.8L707.8 279.5L707.3 277.8L706.8 283.1L706.3 283.1L705.8 280.0L705.3 280.8L704.8 282.0L704.3 285.3L703.8 289.8L703.3 297.1L702.8 283.4L702.3 284.2L701.8 285.4L701.3 286.6L700.8 286.4L700.3 290.5L699.8 285.3L699.3 286.9L698.8 288.1L698.3 288.9L697.8 286.2L697.3 289.2L696.8 300.8L696.3 285.0L695.8 285.4L695.3 288.3L694.8 287.0L694.3 294.4L693.8 292.6L693.3 293.8L692.8 288.8L692.3 293.7L691.8 301.2L691.3 287.7L690.8 285.2L690.3 287.0L689.8 289.9L689.3 288.4L688.8 291.4L688.3 292.7L687.8 281.3L687.3 283.4L686.8 280.2L686.3 279.4L685.8 270.4L685.3 270.9L684.8 272.2L684.3 272.6L683.8 273.3L683.3 273.5L682.8 274.8L682.3 279.7L681.8 274.5L681.3 279.2L680.8 274.8L680.3 275.0L679.8 276.0L679.3 276.7L678.8 277.3L678.3 278.3L677.8 279.5L677.3 275.9L676.8 278.3L676.3 278.6L675.8 279.7L675.3 278.8L674.8 275.8L674.3 277.8L673.8 277.4L673.3 277.9L672.8 278.1L672.3 277.7L671.8 281.7L671.3 282.0L670.8 284.0L670.3 283.8L669.8 287.1L669.3 287.5L668.8 287.9L668.3 288.5L667.8 292.4L667.3 305.2L666.8 287.5L666.3 292.3L665.8 296.0L665.3 290.2L664.8 289.7L664.3 286.9L663.8 288.1L663.3 292.4L662.8 294.6L662.3 292.5L661.8 292.3L661.3 288.1L660.8 289.2L660.3 286.6L659.8 285.6L659.3 286.0L658.8 286.9L658.3 286.7L657.8 283.7L657.3 283.2L656.8 286.5L656.3 300.5L655.8 297.0L655.3 284.1L654.8 281.3L654.3 283.1L653.8 282.8L653.3 284.6L652.8 298.2L652.3 288.7L651.8 285.5L651.3 288.2L650.8 290.5L650.3 285.8L649.8 288.4L649.3 286.0L648.8 292.8L648.3 292.2L647.8 296.6L647.3 298.5L646.8 288.4L646.3 290.6L645.8 291.0L645.3 289.2L644.8 291.2L644.3 291.8L643.8 293.3L643.3 305.2L642.8 293.6L642.3 297.4L641.8 305.2L641.3 294.2L640.8 291.2L640.3 290.2L639.8 294.8L639.3 297.4L638.8 303.1L638.3 305.2L637.8 305.2L637.3 295.8L636.8 292.1L636.3 289.9L635.8 295.6L635.3 294.9L634.8 293.6L634.3 305.2L633.8 296.5L633.3 305.2L632.8 295.1L632.3 296.6L631.8 289.3L631.3 289.7L630.8 285.9L630.3 289.7L629.8 286.2L629.3 292.3L628.8 287.0L628.3 288.4L627.8 288.1L627.3 290.0L626.8 291.9L626.3 292.8L625.8 284.5L625.3 285.1L624.8 282.4L624.3 282.3L623.8 283.1L623.3 285.9L622.8 278.1L622.3 282.2L621.8 284.1L621.3 284.5L620.8 282.2L620.3 297.7L619.8 280.2L619.3 297.3L618.8 284.9L618.3 284.3L617.8 285.7L617.3 286.3L616.8 302.0L616.3 290.1L615.8 285.4L615.3 293.8L614.8 295.3L614.3 282.6L613.8 283.4L613.3 288.7L612.8 284.7L612.3 289.2L611.8 285.6L611.3 288.3L610.8 291.3L610.3 289.4L609.8 289.1L609.3 294.0L608.8 291.2L608.3 294.6L607.8 296.6L607.3 294.9L606.8 305.2L606.3 295.9L605.8 295.7L605.3 303.6L604.8 303.4L604.3 295.3L603.8 287.3L603.3 293.8L602.8 305.2L602.3 294.0L601.8 305.2L601.3 292.1L600.8 294.7L600.3 294.0L599.8 292.6L599.3 288.3L598.8 288.8L598.3 288.8L597.8 292.8L597.3 291.0L596.8 294.1L596.3 297.4L595.8 300.7L595.3 287.7L594.8 291.8L594.3 290.1L593.8 291.6L593.3 304.5L592.8 304.3L592.3 295.0L591.8 304.0L591.3 305.2L590.8 288.7L590.3 300.7L589.8 285.4L589.3 286.0L588.8 284.3L588.3 281.8L587.8 287.8L587.3 286.6L586.8 292.5L586.3 285.4L585.8 289.2L585.3 289.7L584.8 292.3L584.3 293.9L583.8 285.0L583.3 287.9L582.8 286.1L582.3 293.2L581.8 286.7L581.3 298.3L580.8 289.2L580.3 285.7L579.8 286.3L579.3 302.8L578.8 288.2L578.3 285.1L577.8 288.2L577.3 282.4L576.8 274.8L576.3 273.5L575.8 275.0L575.3 275.4L574.8 284.4L574.3 275.6L573.8 282.4L573.3 277.3L572.8 278.7L572.3 289.2L571.8 281.7L571.3 286.0L570.8 277.7L570.3 281.0L569.8 281.2L569.3 282.7L568.8 283.1L568.3 287.7L567.8 291.5L567.3 283.6L566.8 286.3L566.3 282.7L565.8 286.6L565.3 286.4L564.8 289.1L564.3 292.1L563.8 281.9L563.3 283.0L562.8 281.8L562.3 281.9L561.8 284.1L561.3 286.5L560.8 287.9L560.3 287.2L559.8 291.5L559.3 286.8L558.8 284.2L558.3 286.4L557.8 288.1L557.3 284.4L556.8 285.0L556.3 283.5L555.8 286.6L555.3 288.3L554.8 295.6L554.3 301.3L553.8 286.5L553.3 289.7L552.8 286.8L552.3 305.2L551.8 295.1L551.3 293.8L550.8 295.2L550.3 283.9L549.8 284.0L549.3 288.2L548.8 291.5L548.3 287.4L547.8 287.1L547.3 286.1L546.8 286.5L546.3 283.9L545.8 291.5L545.3 290.4L544.8 287.4L544.3 289.4L543.8 291.3L543.3 281.8L542.8 282.8L542.3 288.0L541.8 288.5L541.3 305.1L540.8 287.1L540.3 289.4L539.8 288.7L539.3 292.8L538.8 294.9L538.3 289.5L537.8 283.8L537.3 288.7L536.8 291.3L536.3 284.4L535.8 298.6L535.3 278.0L534.8 276.2L534.3 279.3L533.8 280.4L533.3 282.3L532.8 279.6L532.3 280.5L531.8 286.1L531.3 283.7L530.8 281.0L530.3 288.2L529.8 286.9L529.3 293.3L528.8 300.3L528.3 281.7L527.8 288.9L527.3 284.1L526.8 291.2L526.3 288.7L525.8 296.2L525.3 290.0L524.8 288.7L524.3 291.2L523.8 289.3L523.3 292.6L522.8 288.2L522.3 285.4L521.8 289.6L521.3 294.4L520.8 287.2L520.3 292.3L519.8 302.6L519.3 286.2L518.8 291.0L518.3 291.2L517.8 292.0L517.3 291.4L516.8 287.8L516.3 287.0L515.8 280.7L515.3 280.3L514.8 278.6L514.3 278.0L513.8 279.4L513.3 281.2L512.8 279.6L512.3 284.2L511.8 286.8L511.3 279.4L510.8 277.4L510.3 278.3L509.8 292.5L509.3 279.6L508.8 283.6L508.3 282.6L507.8 277.4L507.3 279.1L506.8 278.8L506.3 278.0L505.8 278.2L505.3 281.4L504.8 279.3L504.3 282.4L503.8 281.8L503.3 284.2L502.8 280.5L502.3 279.6L501.8 285.9L501.3 287.8L500.8 282.6L500.3 291.5L499.8 305.2L499.3 289.7L498.8 288.3L498.3 285.4L497.8 291.6L497.3 297.1L496.8 296.2L496.3 285.8L495.8 280.4L495.3 281.1L494.8 280.7L494.3 280.4L493.8 282.7L493.3 278.6L492.8 281.6L492.3 277.2L491.8 276.1L491.3 277.1L490.8 271.6L490.3 270.9L489.8 274.7L489.3 273.7L488.8 272.2L488.3 273.4L487.8 274.2L487.3 273.6L486.8 276.8L486.3 273.5L485.8 277.0L485.3 276.5L484.8 278.8L484.3 282.7L483.8 283.5L483.3 279.3L482.8 276.7L482.3 276.2L481.8 277.4L481.3 280.1L480.8 295.4L480.3 281.8L479.8 295.4L479.3 280.8L478.8 288.6L478.3 285.1L477.8 281.0L477.3 281.0L476.8 283.8L476.3 282.6L475.8 284.7L475.3 292.3L474.8 289.2L474.3 288.5L473.8 289.1L473.3 289.8L472.8 287.5L472.3 286.5L471.8 294.1L471.3 305.2L470.8 297.8L470.3 301.3L469.8 299.7L469.3 290.7L468.8 293.5L468.3 289.9L467.8 304.4L467.3 290.3L466.8 289.0L466.3 297.0L465.8 275.0L465.3 270.1L464.8 270.9L464.3 271.7L463.8 273.1L463.3 272.6L462.8 278.8L462.3 274.7L461.8 284.9L461.3 274.7L460.8 276.2L460.3 279.1L459.8 279.7L459.3 283.7L458.8 281.6L458.3 280.7L457.8 281.7L457.3 280.9L456.8 280.8L456.3 285.0L455.8 280.8L455.3 280.3L454.8 283.9L454.3 282.3L453.8 284.9L453.3 289.4L452.8 282.5L452.3 290.3L451.8 284.0L451.3 280.9L450.8 286.6L450.3 290.2L449.8 282.2L449.3 278.0L448.8 282.1L448.3 286.2L447.8 279.6L447.3 290.8L446.8 279.9L446.3 283.7L445.8 283.4L445.3 283.6L444.8 283.8L444.3 284.6L443.8 288.9L443.3 297.4L442.8 305.2L442.3 302.1L441.8 305.2L441.3 286.0L440.8 288.6L440.3 287.9L439.8 285.7L439.3 285.9L438.8 284.0L438.3 282.7L437.8 282.1L437.3 278.3L436.8 274.9L436.3 271.2L435.8 271.2L435.3 271.8L434.8 273.8L434.3 272.7L433.8 275.2L433.3 272.7L432.8 274.1L432.3 283.0L431.8 275.0L431.3 276.6L430.8 275.7L430.3 275.5L429.8 274.8L429.3 275.5L428.8 276.2L428.3 281.1L427.8 279.3L427.3 284.1L426.8 282.4L426.3 290.6L425.8 280.9L425.3 286.6L424.8 284.6L424.3 286.1L423.8 285.5L423.3 283.1L422.8 285.8L422.3 287.2L421.8 292.1L421.3 298.0L420.8 284.4L420.3 284.5L419.8 280.8L419.3 281.2L418.8 285.3L418.3 289.1L417.8 287.2L417.3 289.4L416.8 291.3L416.3 286.3L415.8 293.3L415.3 286.4L414.8 284.4L414.3 283.7L413.8 287.0L413.3 282.3L412.8 285.8L412.3 284.4L411.8 289.7L411.3 288.7L410.8 284.8L410.3 296.9L409.8 282.1L409.3 298.8L408.8 286.0L408.3 282.2L407.8 286.6L407.3 284.1L406.8 277.4L406.3 282.6L405.8 277.1L405.3 279.0L404.8 278.0L404.3 274.2L403.8 273.6L403.3 274.5L402.8 272.1L402.3 275.3L401.8 275.1L401.3 272.2L400.8 274.9L400.3 273.4L399.8 274.0L399.3 272.6L398.8 275.2L398.3 274.2L397.8 274.9L397.3 274.9L396.8 275.6L396.3 275.2L395.8 277.6L395.3 275.9L394.8 274.3L394.3 275.7L393.8 275.6L393.3 277.6L392.8 275.1L392.3 285.6L391.8 275.1L391.3 289.2L390.8 289.2L390.3 280.4L389.8 275.2L389.3 278.5L388.8 279.1L388.3 279.9L387.8 276.6L387.3 280.5L386.8 287.5L386.3 282.0L385.8 288.2L385.3 284.8L384.8 277.6L384.3 280.6L383.8 279.0L383.3 277.0L382.8 276.2L382.3 281.3L381.8 273.0L381.3 278.2L380.8 273.1L380.3 272.4L379.8 273.8L379.3 274.2L378.8 273.3L378.3 274.9L377.8 276.5L377.3 277.4L376.8 285.7L376.3 284.9L375.8 278.0L375.3 275.2L374.8 279.2L374.3 279.8L373.8 280.0L373.3 279.7L372.8 280.8L372.3 284.8L371.8 284.5L371.3 283.7L370.8 280.9L370.3 281.2L369.8 285.1L369.3 294.9L368.8 281.8L368.3 282.8L367.8 278.6L367.3 280.3L366.8 280.7L366.3 277.7L365.8 279.5L365.3 282.8L364.8 280.2L364.3 283.6L363.8 283.9L363.3 281.0L362.8 280.9L362.3 281.0L361.8 282.7L361.3 288.5L360.8 277.0L360.3 279.5L359.8 279.5L359.3 278.4L358.8 278.5L358.3 289.4L357.8 281.0L357.3 281.7L356.8 281.4L356.3 283.4L355.8 278.7L355.3 278.4L354.8 278.2L354.3 273.6L353.8 274.3L353.3 271.8L352.8 271.3L352.3 273.0L351.8 271.1L351.3 274.4L350.8 275.1L350.3 277.2L349.8 274.3L349.3 276.0L348.8 274.6L348.3 274.2L347.8 276.3L347.3 277.3L346.8 279.3L346.3 282.4L345.8 281.7L345.3 290.5L344.8 277.9L344.3 293.9L343.8 279.9L343.3 282.9L342.8 279.3L342.3 282.6L341.8 293.1L341.3 280.1L340.8 281.4L340.3 289.2L339.8 279.7L339.3 282.6L338.8 277.5L338.3 282.6L337.8 280.5L337.3 291.3L336.8 280.4L336.3 278.7L335.8 281.0L335.3 282.0L334.8 281.0L334.3 288.4L333.8 277.9L333.3 280.8L332.8 275.9L332.3 277.5L331.8 278.3L331.3 278.2L330.8 277.3L330.3 288.4L329.8 277.8L329.3 287.3L328.8 287.2L328.3 283.6L327.8 276.5L327.3 276.6L326.8 272.9L326.3 273.5L325.8 269.0L325.3 270.1L324.8 271.3L324.3 273.8L323.8 271.3L323.3 270.3L322.8 270.3L322.3 271.6L321.8 273.7L321.3 273.8L320.8 274.7L320.3 275.8L319.8 281.8L319.3 278.4L318.8 276.4L318.3 276.3L317.8 277.8L317.3 277.7L316.8 276.2L316.3 281.0L315.8 286.8L315.3 281.1L314.8 284.6L314.3 279.3L313.8 281.3L313.3 279.1L312.8 284.9L312.3 284.5L311.8 284.0L311.3 280.8L310.8 279.8L310.3 276.9L309.8 281.8L309.3 280.5L308.8 283.0L308.3 281.4L307.8 279.7L307.3 281.6L306.8 280.7L306.3 284.3L305.8 286.9L305.3 285.4L304.8 284.4L304.3 288.2L303.8 287.8L303.3 284.9L302.8 282.8L302.3 298.5L301.8 284.2L301.3 300.0L300.8 298.3L300.3 282.1L299.8 284.1L299.3 284.3L298.8 285.0L298.3 283.8L297.8 281.5L297.3 281.7L296.8 282.7L296.3 282.1L295.8 283.2L295.3 285.1L294.8 288.0L294.3 281.6L293.8 285.5L293.3 282.9L292.8 285.2L292.3 284.4L291.8 284.1L291.3 283.7L290.8 284.6L290.3 282.8L289.8 279.1L289.3 277.7L288.8 282.8L288.3 281.3L287.8 280.8L287.3 281.8L286.8 282.5L286.3 279.1L285.8 279.1L285.3 281.5L284.8 281.8L284.3 288.3L283.8 277.5L283.3 280.2L282.8 279.1L282.3 279.3L281.8 291.5L281.3 280.1L280.8 281.3L280.3 285.1L279.8 279.4L279.3 278.1L278.8 277.7L278.3 272.0L277.8 271.2L277.3 272.0L276.8 273.0L276.3 273.7L275.8 274.0L275.3 271.8L274.8 279.2L274.3 272.2L273.8 274.1L273.3 274.3L272.8 272.5L272.3 271.6L271.8 279.3L271.3 272.9L270.8 275.1L270.3 273.9L269.8 277.1L269.3 277.2L268.8 275.5L268.3 276.2L267.8 274.9L267.3 275.6L266.8 279.4L266.3 276.8L265.8 276.7L265.3 275.9L264.8 278.8L264.3 281.8L263.8 280.5L263.3 276.5L262.8 277.7L262.3 281.0L261.8 279.8L261.3 277.2L260.8 286.0L260.3 274.4L259.8 275.8L259.3 275.1L258.8 283.9L258.3 275.6L257.8 272.8L257.3 275.3L256.8 273.2L256.3 272.9L255.8 269.5L255.3 270.8L254.8 271.7L254.3 270.7L253.8 273.3L253.3 274.2L252.8 275.5L252.3 272.3L251.8 274.7L251.3 275.5L250.8 274.2L250.3 276.2L249.8 276.5L249.3 277.8L248.8 276.9L248.3 278.7L247.8 276.6L247.3 278.7L246.8 281.6L246.3 277.3L245.8 276.9L245.3 276.6L244.8 278.7L244.3 274.6L243.8 276.8L243.3 278.1L242.8 279.2L242.3 276.3L241.8 276.2L241.3 274.4L240.8 277.5L240.3 277.0L239.8 277.6L239.3 277.6L238.8 274.8L238.3 276.4L237.8 275.9L237.3 273.5L236.8 274.4L236.3 275.3L235.8 275.7L235.3 274.1L234.8 275.2L234.3 275.8L233.8 275.0L233.3 275.2L232.8 273.7L232.3 275.9L231.8 276.7L231.3 285.8L230.8 274.9L230.3 276.5L229.8 273.5L229.3 269.4L228.8 270.1L228.3 271.3L227.8 271.9L227.3 274.6L226.8 271.4L226.3 271.7L225.8 271.0L225.3 274.5L224.8 270.7L224.3 272.5L223.8 272.9L223.3 273.6L222.8 272.4L222.3 275.0L221.8 275.4L221.3 276.7L220.8 271.7L220.3 273.3L219.8 271.3L219.3 271.0L218.8 271.8L218.3 272.2L217.8 274.7L217.3 270.5L216.8 272.4L216.3 270.8L215.8 270.9L215.3 270.7L214.8 276.5L214.3 277.5L213.8 271.4L213.3 273.2L212.8 271.1L212.3 271.8L211.8 273.7L211.3 275.7L210.8 272.2L210.3 274.5L209.8 274.0L209.3 275.0L208.8 276.2L208.3 277.5L207.8 280.3L207.3 285.0L206.8 285.7L206.3 274.8L205.8 276.5L205.3 276.1L204.8 277.3L204.3 280.3L203.8 283.7L203.3 277.6L202.8 276.7L202.3 278.1L201.8 286.7L201.3 277.2L200.8 275.0L200.3 278.5L199.8 286.0L199.3 278.2L198.8 274.8L198.3 278.9L197.8 279.7L197.3 276.2L196.8 277.0L196.3 274.8L195.8 274.2L195.3 277.2L194.8 278.5L194.3 279.0L193.8 281.6L193.3 275.1L192.8 274.9L192.3 275.2L191.8 275.9L191.3 275.0L190.8 275.6L190.3 273.9L189.8 276.1L189.3 279.0L188.8 274.0L188.3 273.6L187.8 274.1L187.3 274.8L186.8 272.5L186.3 274.9L185.8 272.8L185.3 273.7L184.8 274.8L184.3 275.2L183.8 277.0L183.3 275.0L182.8 275.7L182.3 277.2L181.8 276.8L181.3 276.4L180.8 283.1L180.3 274.1L179.8 275.9L179.3 278.1L178.8 279.0L178.3 288.6L177.8 278.6L177.3 275.0L176.8 279.1L176.3 287.0L175.8 280.0L175.3 278.8L174.8 278.2L174.3 279.4L173.8 277.1L173.3 275.8L172.8 275.1L172.3 282.7L171.8 276.9L171.3 277.7L170.8 283.8L170.3 273.6L169.8 273.3L169.3 271.1L168.8 270.4L168.3 272.3L167.8 273.2L167.3 274.8L166.8 270.9L166.3 270.8L165.8 272.9L165.3 273.1L164.8 272.4L164.3 276.1L163.8 272.5L163.3 277.0L162.8 271.9L162.3 271.8L161.8 271.4L161.3 273.8L160.8 273.1L160.3 273.4L159.8 277.5L159.3 276.1L158.8 271.8L158.3 274.3L157.8 274.3L157.3 273.4L156.8 275.4L156.3 276.3L155.8 277.3L155.3 275.9L154.8 281.0L154.3 284.7L153.8 276.2L153.3 274.2L152.8 288.4L152.3 276.7L151.8 279.5L151.3 279.8L150.8 279.9L150.3 281.9L149.8 283.0L149.3 290.1L148.8 278.5L148.3 280.2L147.8 278.6L147.3 278.5L146.8 281.0L146.3 283.6L145.8 282.6L145.3 290.9L144.8 278.8L144.3 277.6L143.8 280.6L143.3 279.3L142.8 276.9L142.3 278.7L141.8 273.9L141.3 275.7L140.8 275.5L140.3 279.0L139.8 273.5L139.3 274.1L138.8 272.2L138.3 273.3L137.8 273.6L137.3 273.2L136.8 273.7L136.3 273.7L135.8 272.8L135.3 277.7L134.8 271.6L134.3 272.0L133.8 271.4L133.3 270.3L132.8 271.7L132.3 272.4L131.8 271.2L131.3 270.4L130.8 272.6L130.3 271.6L129.8 272.3L129.3 272.3L128.8 272.3L128.3 271.1L127.8 271.2L127.3 273.1L126.8 274.6L126.3 273.8L125.8 274.1L125.3 275.0L124.8 277.3L124.3 271.9L123.8 273.0L123.3 276.0L122.8 275.5L122.3 275.8L121.8 277.1L121.3 275.4L120.8 277.4L120.3 275.8L119.8 278.3L119.3 275.8L118.8 274.3L118.3 275.5L117.8 277.0L117.3 277.6L116.8 273.8L116.3 272.4L115.8 274.2L115.3 272.6L114.8 273.5L114.3 273.3L113.8 276.7L113.3 272.4L112.8 271.3L112.3 269.1L111.8 271.1L111.3 269.2L110.8 269.4L110.3 270.1L109.8 275.1L109.3 275.2L108.8 273.1L108.3 270.0L107.8 272.1L107.3 271.2L106.8 273.6L106.3 271.2L105.8 270.5L105.3 271.1L104.8 272.3L104.3 272.4L103.8 273.4L103.3 273.0L102.8 274.2L102.3 275.8L101.8 273.1L101.3 272.1L100.8 271.2L100.3 274.1L99.8 279.7L99.3 273.8L98.8 275.0L98.3 273.8L97.8 274.3L97.3 273.5L96.8 272.5L96.3 274.5L95.8 275.6L95.3 275.1L94.8 276.3L94.3 275.1L93.8 274.8L93.3 274.4L92.8 275.3L92.3 274.9L91.8 278.0L91.3 277.7L90.8 273.7L90.3 272.9L89.8 273.5L89.3 272.8L88.8 272.3L88.3 273.1L87.8 269.6L87.3 270.6L86.8 271.2L86.3 272.2L85.8 273.9L85.3 270.4L84.8 270.1L84.3 269.4L83.8 270.8L83.3 270.6Z" fill="#fdd56b"/><path d="M83.3 258.1L83.8 259.6L84.3 257.9L84.8 258.8L85.3 260.0L85.8 258.7L86.3 258.5L86.8 255.2L87.3 260.2L87.8 258.7L88.3 257.6L88.8 252.7L89.3 253.7L89.8 253.7L90.3 248.3L90.8 254.8L91.3 255.4L91.8 254.7L92.3 255.4L92.8 253.8L93.3 253.7L93.8 254.1L94.3 253.7L94.8 254.1L95.3 253.4L95.8 251.7L96.3 253.5L96.8 255.5L97.3 255.8L97.8 256.1L98.3 255.7L98.8 249.8L99.3 255.5L99.8 257.6L100.3 257.0L100.8 258.5L101.3 255.4L101.8 253.7L102.3 256.9L102.8 255.9L103.3 257.7L103.8 256.8L104.3 257.1L104.8 258.6L105.3 259.0L105.8 256.5L106.3 256.0L106.8 254.8L107.3 258.9L107.8 259.8L108.3 258.9L108.8 258.6L109.3 260.2L109.8 259.4L110.3 260.1L110.8 256.1L111.3 257.9L111.8 257.7L112.3 258.5L112.8 257.4L113.3 256.2L113.8 256.3L114.3 256.3L114.8 257.5L115.3 249.0L115.8 257.3L116.3 255.0L116.8 246.6L117.3 251.1L117.8 254.5L118.3 252.9L118.8 254.8L119.3 256.3L119.8 253.7L120.3 253.4L120.8 255.7L121.3 254.3L121.8 254.8L122.3 253.0L122.8 254.5L123.3 255.8L123.8 252.0L124.3 252.8L124.8 247.5L125.3 255.6L125.8 256.4L126.3 256.6L126.8 255.8L127.3 257.3L127.8 249.4L128.3 255.7L128.8 256.6L129.3 256.4L129.8 256.5L130.3 258.7L130.8 258.1L131.3 257.6L131.8 254.1L132.3 254.8L132.8 255.6L133.3 257.4L133.8 256.1L134.3 257.6L134.8 251.8L135.3 257.3L135.8 257.3L136.3 254.2L136.8 255.3L137.3 250.7L137.8 255.1L138.3 254.8L138.8 257.8L139.3 251.1L139.8 257.7L140.3 257.2L140.8 256.1L141.3 249.3L141.8 254.7L142.3 241.1L142.8 250.6L143.3 252.4L143.8 252.9L144.3 248.7L144.8 247.6L145.3 246.7L145.8 246.0L146.3 247.2L146.8 250.9L147.3 248.0L147.8 248.9L148.3 245.2L148.8 248.1L149.3 249.2L149.8 250.2L150.3 240.7L150.8 250.1L151.3 249.9L151.8 239.3L152.3 251.7L152.8 251.3L153.3 255.0L153.8 247.4L154.3 250.0L154.8 254.6L155.3 252.3L155.8 253.2L156.3 254.4L156.8 256.2L157.3 255.2L157.8 256.0L158.3 255.0L158.8 255.2L159.3 252.7L159.8 252.8L160.3 254.2L160.8 255.2L161.3 256.5L161.8 251.6L162.3 253.0L162.8 251.4L163.3 255.5L163.8 257.6L164.3 257.4L164.8 256.8L165.3 257.6L165.8 258.2L166.3 258.1L166.8 256.2L167.3 256.3L167.8 254.5L168.3 253.3L168.8 253.7L169.3 258.7L169.8 256.8L170.3 254.7L170.8 255.1L171.3 253.8L171.8 254.5L172.3 246.3L172.8 248.9L173.3 249.3L173.8 253.5L174.3 250.7L174.8 251.1L175.3 251.8L175.8 252.6L176.3 246.2L176.8 248.1L177.3 248.2L177.8 250.2L178.3 254.3L178.8 250.5L179.3 253.6L179.8 253.4L180.3 253.0L180.8 251.1L181.3 252.1L181.8 254.8L182.3 252.2L182.8 255.8L183.3 253.4L183.8 253.4L184.3 254.9L184.8 253.8L185.3 254.1L185.8 256.2L186.3 255.3L186.8 253.8L187.3 255.7L187.8 255.8L188.3 254.4L188.8 257.0L189.3 254.1L189.8 252.3L190.3 251.3L190.8 252.4L191.3 253.4L191.8 253.5L192.3 246.3L192.8 253.2L193.3 256.6L193.8 254.1L194.3 254.0L194.8 244.3L195.3 252.6L195.8 254.2L196.3 252.0L196.8 252.3L197.3 254.7L197.8 250.8L198.3 252.4L198.8 250.4L199.3 253.2L199.8 252.6L200.3 252.0L200.8 250.9L201.3 243.2L201.8 252.9L202.3 251.6L202.8 246.3L203.3 248.7L203.8 250.4L204.3 249.4L204.8 242.9L205.3 251.3L205.8 255.3L206.3 254.1L206.8 246.1L207.3 250.1L207.8 253.7L208.3 253.1L208.8 245.8L209.3 255.5L209.8 256.8L210.3 256.7L210.8 256.2L211.3 257.1L211.8 252.0L212.3 250.2L212.8 257.2L213.3 256.0L213.8 257.3L214.3 259.1L214.8 253.3L215.3 258.1L215.8 257.5L216.3 257.4L216.8 257.3L217.3 257.4L217.8 256.5L218.3 257.1L218.8 257.2L219.3 257.0L219.8 256.5L220.3 257.5L220.8 250.3L221.3 256.4L221.8 256.2L222.3 252.1L222.8 250.8L223.3 257.6L223.8 255.6L224.3 257.1L224.8 257.0L225.3 258.7L225.8 259.1L226.3 257.9L226.8 258.9L227.3 256.2L227.8 257.6L228.3 258.8L228.8 259.6L229.3 259.4L229.8 257.0L230.3 255.0L230.8 254.8L231.3 248.5L231.8 248.0L232.3 251.6L232.8 253.9L233.3 252.6L233.8 248.2L234.3 250.0L234.8 253.5L235.3 248.2L235.8 256.1L236.3 256.0L236.8 257.1L237.3 254.7L237.8 253.2L238.3 256.0L238.8 245.9L239.3 252.5L239.8 249.8L240.3 251.3L240.8 250.9L241.3 252.3L241.8 252.8L242.3 252.5L242.8 253.9L243.3 254.0L243.8 251.4L244.3 252.9L244.8 241.8L245.3 249.6L245.8 251.9L246.3 249.7L246.8 251.5L247.3 251.3L247.8 250.1L248.3 253.3L248.8 253.6L249.3 254.5L249.8 252.7L250.3 249.8L250.8 254.4L251.3 252.1L251.8 253.9L252.3 254.3L252.8 255.3L253.3 249.3L253.8 258.6L254.3 258.8L254.8 252.8L255.3 259.1L255.8 256.1L256.3 258.0L256.8 255.5L257.3 256.7L257.8 254.6L258.3 257.0L258.8 246.0L259.3 253.5L259.8 256.6L260.3 254.4L260.8 256.2L261.3 253.0L261.8 249.1L262.3 251.2L262.8 253.7L263.3 254.4L263.8 253.6L264.3 254.0L264.8 252.4L265.3 254.5L265.8 252.3L266.3 253.7L266.8 253.0L267.3 254.8L267.8 253.7L268.3 254.4L268.8 248.5L269.3 252.5L269.8 254.1L270.3 253.5L270.8 254.2L271.3 254.9L271.8 256.0L272.3 255.3L272.8 257.2L273.3 256.3L273.8 256.8L274.3 257.8L274.8 252.7L275.3 254.5L275.8 255.9L276.3 255.6L276.8 257.8L277.3 256.8L277.8 257.6L278.3 258.0L278.8 250.1L279.3 252.3L279.8 253.8L280.3 249.9L280.8 253.3L281.3 250.5L281.8 238.8L282.3 245.5L282.8 238.6L283.3 248.0L283.8 246.6L284.3 247.7L284.8 248.5L285.3 247.6L285.8 250.0L286.3 239.1L286.8 250.8L287.3 249.9L287.8 249.9L288.3 241.3L288.8 241.3L289.3 242.7L289.8 244.5L290.3 242.2L290.8 245.0L291.3 244.6L291.8 248.2L292.3 245.9L292.8 239.3L293.3 241.2L293.8 241.9L294.3 242.8L294.8 248.8L295.3 244.1L295.8 242.0L296.3 239.8L296.8 243.2L297.3 241.2L297.8 246.9L298.3 231.5L298.8 242.8L299.3 245.7L299.8 234.3L300.3 247.5L300.8 246.3L301.3 246.9L301.8 246.6L302.3 247.0L302.8 241.3L303.3 245.3L303.8 243.7L304.3 248.5L304.8 247.8L305.3 245.6L305.8 246.6L306.3 247.7L306.8 244.9L307.3 248.4L307.8 243.8L308.3 245.7L308.8 249.0L309.3 246.9L309.8 248.9L310.3 240.8L310.8 246.5L311.3 235.7L311.8 247.2L312.3 247.1L312.8 241.6L313.3 237.0L313.8 246.4L314.3 248.0L314.8 242.0L315.3 249.4L315.8 249.8L316.3 253.8L316.8 254.9L317.3 252.8L317.8 253.2L318.3 250.4L318.8 250.1L319.3 251.6L319.8 248.1L320.3 256.5L320.8 254.9L321.3 255.6L321.8 249.1L322.3 257.3L322.8 255.2L323.3 255.3L323.8 256.6L324.3 257.7L324.8 258.9L325.3 259.5L325.8 256.4L326.3 257.0L326.8 253.2L327.3 251.4L327.8 251.2L328.3 253.8L328.8 251.1L329.3 253.8L329.8 251.8L330.3 241.1L330.8 249.8L331.3 240.5L331.8 253.0L332.3 252.7L332.8 251.7L333.3 246.1L333.8 249.5L334.3 248.5L334.8 246.9L335.3 243.5L335.8 245.8L336.3 247.5L336.8 249.1L337.3 246.5L337.8 247.3L338.3 247.9L338.8 248.1L339.3 247.5L339.8 237.8L340.3 248.8L340.8 244.4L341.3 247.3L341.8 247.2L342.3 248.3L342.8 245.8L343.3 249.5L343.8 248.4L344.3 249.0L344.8 248.3L345.3 241.0L345.8 249.9L346.3 249.6L346.8 251.7L347.3 250.4L347.8 254.4L348.3 253.2L348.8 245.2L349.3 245.0L349.8 255.2L350.3 254.3L350.8 255.2L351.3 252.0L351.8 255.3L352.3 256.7L352.8 256.8L353.3 257.7L353.8 253.7L354.3 254.0L354.8 250.6L355.3 248.8L355.8 250.2L356.3 248.9L356.8 250.1L357.3 239.9L357.8 252.7L358.3 251.3L358.8 248.9L359.3 249.5L359.8 249.7L360.3 249.5L360.8 243.6L361.3 245.4L361.8 244.8L362.3 246.8L362.8 248.1L363.3 250.3L363.8 247.0L364.3 247.1L364.8 251.6L365.3 250.6L365.8 236.5L366.3 233.8L366.8 245.7L367.3 247.2L367.8 240.5L368.3 243.7L368.8 246.9L369.3 247.8L369.8 247.5L370.3 246.3L370.8 247.1L371.3 245.7L371.8 237.4L372.3 242.3L372.8 245.2L373.3 243.4L373.8 246.9L374.3 250.6L374.8 253.0L375.3 252.2L375.8 240.6L376.3 252.4L376.8 242.7L377.3 255.1L377.8 254.4L378.3 255.6L378.8 255.5L379.3 255.0L379.8 248.1L380.3 252.5L380.8 256.6L381.3 258.0L381.8 257.8L382.3 252.9L382.8 254.2L383.3 250.7L383.8 250.6L384.3 240.0L384.8 247.3L385.3 251.5L385.8 252.0L386.3 249.3L386.8 251.1L387.3 252.2L387.8 249.5L388.3 247.7L388.8 248.9L389.3 249.6L389.8 249.5L390.3 250.5L390.8 251.2L391.3 254.7L391.8 255.0L392.3 240.8L392.8 241.8L393.3 253.8L393.8 243.2L394.3 241.8L394.8 249.0L395.3 250.4L395.8 247.4L396.3 250.3L396.8 254.5L397.3 254.3L397.8 254.1L398.3 248.6L398.8 251.4L399.3 251.9L399.8 253.7L400.3 256.4L400.8 255.7L401.3 254.9L401.8 255.3L402.3 250.0L402.8 257.3L403.3 256.1L403.8 256.8L404.3 251.7L404.8 247.9L405.3 250.3L405.8 247.9L406.3 251.4L406.8 248.9L407.3 249.6L407.8 248.6L408.3 246.8L408.8 244.9L409.3 239.0L409.8 244.2L410.3 244.9L410.8 245.3L411.3 248.2L411.8 243.4L412.3 241.8L412.8 243.5L413.3 243.2L413.8 243.1L414.3 242.8L414.8 227.8L415.3 226.5L415.8 241.5L416.3 228.7L416.8 236.4L417.3 235.6L417.8 244.5L418.3 238.8L418.8 247.7L419.3 230.8L419.8 240.1L420.3 238.4L420.8 243.0L421.3 238.3L421.8 245.1L422.3 243.2L422.8 246.1L423.3 247.6L423.8 244.4L424.3 249.8L424.8 248.9L425.3 246.9L425.8 249.7L426.3 247.9L426.8 237.7L427.3 245.6L427.8 247.1L428.3 250.1L428.8 249.1L429.3 250.4L429.8 251.7L430.3 253.9L430.8 254.0L431.3 253.5L431.8 254.7L432.3 256.3L432.8 255.0L433.3 251.1L433.8 255.0L434.3 256.7L434.8 251.2L435.3 258.6L435.8 258.0L436.3 258.7L436.8 256.6L437.3 249.0L437.8 244.9L438.3 243.8L438.8 245.1L439.3 245.9L439.8 245.8L440.3 225.6L440.8 234.0L441.3 243.2L441.8 224.2L442.3 239.0L442.8 243.0L443.3 243.3L443.8 241.5L444.3 243.3L444.8 246.7L445.3 245.4L445.8 244.7L446.3 239.2L446.8 243.0L447.3 233.8L447.8 249.9L448.3 241.6L448.8 244.4L449.3 251.8L449.8 250.7L450.3 245.8L450.8 248.7L451.3 250.8L451.8 252.5L452.3 247.2L452.8 248.0L453.3 247.8L453.8 248.5L454.3 248.8L454.8 248.1L455.3 247.9L455.8 249.3L456.3 248.6L456.8 246.9L457.3 246.7L457.8 245.5L458.3 249.9L458.8 249.4L459.3 248.9L459.8 252.2L460.3 239.8L460.8 252.8L461.3 252.5L461.8 249.2L462.3 251.9L462.8 256.3L463.3 256.6L463.8 256.6L464.3 257.7L464.8 258.5L465.3 259.3L465.8 253.0L466.3 235.6L466.8 245.0L467.3 234.1L467.8 239.9L468.3 236.5L468.8 239.3L469.3 240.9L469.8 233.0L470.3 224.2L470.8 233.8L471.3 236.8L471.8 239.3L472.3 234.7L472.8 241.5L473.3 225.6L473.8 239.9L474.3 243.1L474.8 245.1L475.3 226.3L475.8 242.5L476.3 244.7L476.8 242.3L477.3 246.2L477.8 236.8L478.3 241.3L478.8 245.0L479.3 238.7L479.8 233.4L480.3 244.2L480.8 233.9L481.3 245.0L481.8 244.9L482.3 247.7L482.8 249.2L483.3 253.1L483.8 251.1L484.3 250.9L484.8 252.6L485.3 254.6L485.8 253.9L486.3 252.2L486.8 252.3L487.3 253.9L487.8 255.7L488.3 251.6L488.8 256.0L489.3 255.1L489.8 257.4L490.3 257.3L490.8 257.9L491.3 255.4L491.8 250.3L492.3 249.9L492.8 249.4L493.3 245.5L493.8 244.2L494.3 245.6L494.8 247.3L495.3 246.2L495.8 246.8L496.3 246.9L496.8 246.7L497.3 245.4L497.8 244.5L498.3 245.6L498.8 226.9L499.3 240.9L499.8 225.4L500.3 240.3L500.8 234.9L501.3 242.1L501.8 241.9L502.3 247.9L502.8 244.7L503.3 245.0L503.8 248.0L504.3 243.5L504.8 242.2L505.3 245.3L505.8 251.7L506.3 250.2L506.8 248.5L507.3 248.6L507.8 249.0L508.3 249.6L508.8 249.2L509.3 241.0L509.8 252.8L510.3 253.5L510.8 252.4L511.3 253.1L511.8 250.6L512.3 250.8L512.8 248.5L513.3 252.5L513.8 252.3L514.3 252.0L514.8 254.0L515.3 231.3L515.8 243.4L516.3 239.5L516.8 244.9L517.3 240.2L517.8 231.9L518.3 235.7L518.8 238.6L519.3 235.5L519.8 235.3L520.3 236.3L520.8 235.8L521.3 240.4L521.8 244.1L522.3 241.9L522.8 224.2L523.3 236.4L523.8 238.7L524.3 231.4L524.8 240.5L525.3 233.7L525.8 224.2L526.3 239.8L526.8 239.3L527.3 229.1L527.8 243.9L528.3 246.7L528.8 244.2L529.3 226.8L529.8 247.4L530.3 236.9L530.8 246.4L531.3 243.4L531.8 248.5L532.3 243.9L532.8 246.9L533.3 252.4L533.8 249.7L534.3 250.5L534.8 250.5L535.3 248.7L535.8 242.5L536.3 245.9L536.8 232.6L537.3 248.1L537.8 239.5L538.3 244.3L538.8 245.2L539.3 224.6L539.8 246.0L540.3 230.4L540.8 242.4L541.3 245.0L541.8 246.5L542.3 225.1L542.8 237.6L543.3 244.8L543.8 245.8L544.3 238.9L544.8 244.4L545.3 224.2L545.8 240.1L546.3 240.4L546.8 239.9L547.3 239.2L547.8 241.6L548.3 239.0L548.8 237.6L549.3 233.7L549.8 235.2L550.3 240.3L550.8 237.3L551.3 243.7L551.8 243.2L552.3 240.1L552.8 240.5L553.3 240.9L553.8 238.3L554.3 240.7L554.8 242.4L555.3 243.4L555.8 240.8L556.3 245.3L556.8 243.4L557.3 226.1L557.8 235.1L558.3 239.5L558.8 244.9L559.3 241.4L559.8 239.2L560.3 239.9L560.8 243.7L561.3 244.4L561.8 246.2L562.3 243.5L562.8 247.4L563.3 243.9L563.8 244.3L564.3 246.0L564.8 249.0L565.3 251.2L565.8 244.9L566.3 241.9L566.8 248.7L567.3 247.9L567.8 245.6L568.3 251.0L568.8 240.4L569.3 242.8L569.8 245.4L570.3 245.1L570.8 247.8L571.3 251.6L571.8 244.0L572.3 250.6L572.8 253.4L573.3 254.1L573.8 254.2L574.3 243.9L574.8 254.9L575.3 250.4L575.8 252.3L576.3 256.4L576.8 254.6L577.3 243.7L577.8 242.7L578.3 241.9L578.8 240.4L579.3 239.6L579.8 240.6L580.3 233.8L580.8 238.4L581.3 242.2L581.8 241.3L582.3 244.2L582.8 246.1L583.3 241.7L583.8 247.0L584.3 241.9L584.8 246.5L585.3 241.1L585.8 246.7L586.3 241.9L586.8 242.1L587.3 243.9L587.8 249.5L588.3 247.0L588.8 245.3L589.3 243.2L589.8 247.7L590.3 240.0L590.8 245.2L591.3 239.3L591.8 244.3L592.3 239.7L592.8 224.2L593.3 224.2L593.8 241.2L594.3 239.0L594.8 226.7L595.3 228.4L595.8 224.2L596.3 224.2L596.8 239.8L597.3 243.5L597.8 241.7L598.3 238.1L598.8 243.0L599.3 224.2L599.8 228.8L600.3 238.8L600.8 235.5L601.3 236.8L601.8 237.1L602.3 241.4L602.8 226.7L603.3 228.0L603.8 234.8L604.3 233.6L604.8 240.6L605.3 224.2L605.8 229.3L606.3 239.5L606.8 234.2L607.3 235.0L607.8 238.3L608.3 234.7L608.8 233.5L609.3 236.6L609.8 240.0L610.3 235.8L610.8 233.4L611.3 224.2L611.8 234.8L612.3 240.6L612.8 245.5L613.3 241.1L613.8 239.4L614.3 240.8L614.8 247.7L615.3 245.0L615.8 232.1L616.3 245.4L616.8 241.1L617.3 246.8L617.8 243.5L618.3 244.9L618.8 247.1L619.3 249.0L619.8 245.7L620.3 247.4L620.8 247.9L621.3 249.8L621.8 238.3L622.3 247.6L622.8 250.4L623.3 245.7L623.8 228.6L624.3 227.5L624.8 241.9L625.3 241.4L625.8 245.0L626.3 237.0L626.8 244.7L627.3 239.1L627.8 236.8L628.3 244.1L628.8 241.8L629.3 241.3L629.8 236.6L630.3 224.2L630.8 224.2L631.3 232.8L631.8 230.4L632.3 237.6L632.8 224.2L633.3 233.7L633.8 230.9L634.3 238.5L634.8 232.5L635.3 233.7L635.8 235.1L636.3 239.6L636.8 235.1L637.3 235.7L637.8 224.2L638.3 227.2L638.8 234.8L639.3 232.4L639.8 236.1L640.3 238.1L640.8 236.6L641.3 237.1L641.8 235.4L642.3 233.8L642.8 232.6L643.3 236.9L643.8 240.0L644.3 240.3L644.8 241.3L645.3 237.9L645.8 243.3L646.3 240.9L646.8 242.8L647.3 239.0L647.8 235.7L648.3 240.6L648.8 238.4L649.3 243.8L649.8 230.9L650.3 235.2L650.8 230.5L651.3 241.3L651.8 245.2L652.3 226.7L652.8 246.0L653.3 242.5L653.8 232.4L654.3 232.6L654.8 247.0L655.3 247.7L655.8 243.6L656.3 244.6L656.8 247.4L657.3 248.9L657.8 224.5L658.3 246.1L658.8 242.0L659.3 242.2L659.8 237.0L660.3 237.2L660.8 239.1L661.3 224.2L661.8 224.2L662.3 240.0L662.8 241.2L663.3 240.5L663.8 239.9L664.3 237.0L664.8 238.8L665.3 224.5L665.8 239.2L666.3 241.9L666.8 239.0L667.3 225.8L667.8 241.1L668.3 230.7L668.8 240.6L669.3 243.2L669.8 234.8L670.3 250.3L670.8 240.2L671.3 245.6L671.8 250.1L672.3 248.6L672.8 248.1L673.3 248.9L673.8 250.7L674.3 250.3L674.8 243.6L675.3 249.9L675.8 252.0L676.3 250.9L676.8 252.5L677.3 244.5L677.8 252.5L678.3 246.0L678.8 247.4L679.3 245.7L679.8 253.7L680.3 254.4L680.8 247.6L681.3 251.6L681.8 256.4L682.3 255.2L682.8 248.5L683.3 256.3L683.8 256.5L684.3 257.4L684.8 257.7L685.3 258.7L685.8 255.6L686.3 249.4L686.8 245.2L687.3 237.0L687.8 238.9L688.3 241.6L688.8 241.6L689.3 230.7L689.8 242.2L690.3 242.8L690.8 245.8L691.3 245.9L691.8 224.2L692.3 237.8L692.8 224.2L693.3 237.9L693.8 242.2L694.3 232.4L694.8 236.4L695.3 235.7L695.8 226.5L696.3 236.4L696.8 236.9L697.3 225.8L697.8 238.1L698.3 240.0L698.8 244.6L699.3 240.1L699.8 226.7L700.3 238.6L700.8 240.8L701.3 240.8L701.8 244.0L702.3 248.8L702.8 243.3L703.3 247.5L703.8 246.9L704.3 246.9L704.8 243.3L705.3 245.0L705.8 246.0L706.3 247.0L706.8 246.4L707.3 248.7L707.8 249.7L708.3 249.9L708.8 250.3L709.3 251.7L709.8 248.6L710.3 248.6L710.8 250.3L711.3 253.6L711.8 245.4L712.3 254.1L712.8 253.1L713.3 255.7L713.8 254.3L714.3 248.2L714.8 256.8L715.3 252.4L715.8 253.4L716.3 255.7L716.8 251.3L717.3 236.6L717.8 224.2L718.3 239.9L718.8 234.8L719.3 236.2L719.8 236.8L720.3 232.6L720.8 236.9L721.3 238.8L721.8 231.9L722.3 224.2L722.8 242.1L723.3 229.6L723.8 236.5L724.3 236.0L724.8 245.3L725.3 239.1L725.8 240.2L726.3 241.7L726.8 243.4L727.3 249.5L727.8 236.2L728.3 238.1L728.8 242.3L729.3 241.2L729.8 246.4L730.3 251.3L730.8 249.6L731.3 250.1L731.8 251.5L732.3 251.6L732.8 252.1L733.3 254.9L733.8 252.4L734.3 255.9L734.8 248.7L735.3 253.5L735.8 255.3L736.3 254.7L736.8 252.2L737.3 246.6L737.8 246.9L738.3 244.4L738.8 246.0L739.3 228.9L739.8 234.1L740.3 234.3L740.8 236.6L741.3 240.3L741.8 224.4L742.3 238.0L742.8 239.5L743.3 241.3L743.8 244.2L744.3 241.5L744.8 224.2L745.3 230.1L745.8 238.8L746.3 236.9L746.8 239.4L747.3 242.1L747.8 246.0L748.3 227.6L748.8 244.7L749.3 248.8L749.8 245.2L750.3 243.4L750.8 231.2L751.3 246.7L751.8 249.1L752.3 248.1L752.8 249.0L753.3 250.8L753.8 244.6L754.3 247.9L754.8 247.5L755.3 251.1L755.8 252.1L756.3 245.3L756.8 251.7L757.3 252.7L757.8 254.3L758.3 246.0L758.8 254.2L759.3 254.8L759.8 257.6L760.3 255.5L760.8 257.0L761.3 251.3L761.8 253.8L762.3 257.3L762.8 256.9L763.3 257.7L763.8 258.2L764.3 256.1L764.8 258.4L765.3 259.0L765.8 259.9L766.3 260.6L766.8 259.3L767.3 259.5L767.8 260.2L768.3 260.9L768.8 257.7L769.3 258.6L769.8 261.5L770.3 260.1L770.8 261.3L771.3 262.0L771.8 262.1L772.3 262.1L772.8 262.9L773.3 262.6L773.8 260.2L774.3 262.3L774.8 262.4L775.3 261.9L775.8 261.5L776.3 262.5L776.8 262.3L777.3 262.4L777.8 260.9L778.3 262.4L778.8 262.4L779.3 262.6L779.8 261.4L780.3 262.6L780.8 262.5L781.3 262.8L781.8 262.8L782.3 262.3L782.8 262.7L783.3 262.4L783.8 262.6L784.3 263.1L784.8 263.0L785.3 262.9L785.8 262.8L786.3 263.2L786.8 263.0L787.3 262.8L787.8 261.1L788.3 262.0L788.8 262.5L789.3 262.9L789.8 262.3L790.3 262.4L790.8 262.8L791.3 262.4L791.8 262.3L792.3 262.9L792.8 261.1L793.3 261.8L793.8 262.5L794.3 262.4L794.8 262.2L795.3 261.9L795.8 262.0L796.3 262.7L796.8 262.5L797.3 262.6L797.8 262.4L798.3 262.7L798.8 262.5L799.3 262.4L799.8 260.6L800.3 262.2L800.8 262.6L801.3 262.8L801.8 261.7L802.3 262.4L802.8 262.8L803.3 262.8L803.8 263.4L804.3 263.1L804.8 263.6L805.3 263.5L805.8 263.5L806.3 263.4L806.8 263.1L807.3 263.5L807.8 263.8L808.3 263.7L808.8 263.3L809.3 264.0L809.8 263.9L810.3 264.1L810.8 263.9L811.3 263.9L811.8 264.0L812.3 264.0L812.8 264.2L813.3 264.0L813.8 264.1L814.3 264.1L814.8 264.3L815.3 264.1L815.8 264.2L816.3 264.0L816.8 263.8L817.3 264.3L817.8 264.3L818.3 264.0L818.8 264.1L819.3 264.2L819.8 264.3L820.3 264.3L820.8 264.3L821.3 264.3L821.8 264.3L822.3 264.3L822.8 264.3L823.3 264.3L823.8 264.0L824.3 264.3L824.8 264.3L825.3 264.3L825.8 264.3L826.3 264.3L826.8 264.3L827.3 264.2L827.8 264.1L828.3 264.3L828.8 264.3L829.3 264.2L829.8 264.3L830.3 264.3L830.8 264.3L831.3 264.3L831.8 264.3L832.3 264.3L832.8 264.1L833.3 264.3L833.8 264.3L834.3 264.3L834.8 264.3L835.3 264.3L835.8 264.3L836.3 264.3L836.8 264.3L837.3 264.3L837.8 264.3L838.3 264.3L838.8 264.3L839.3 264.3L839.8 264.0L840.3 264.3L840.8 264.3L841.3 264.3L841.8 264.3L842.3 264.3L842.8 264.3L843.3 264.3L843.8 264.3L844.3 264.3L844.8 264.0L845.3 264.3L845.8 264.3L846.3 264.3L846.8 264.3L847.3 264.2L847.8 264.3L848.3 264.3L848.8 264.1L849.3 264.3L849.8 264.3L850.3 264.3L850.8 264.3L851.3 264.3L851.8 264.1L852.3 264.3L852.8 264.3L853.3 264.3L853.8 264.3L854.3 264.1L854.8 264.3L855.3 264.3L855.8 264.3L856.3 264.3L856.8 264.1L857.3 264.3L857.8 264.1L858.3 264.3L858.8 264.2L859.3 264.3L859.8 264.3L860.3 264.3L860.8 264.3L861.3 264.2L861.8 264.3L861.8 265.3L861.3 265.1L860.8 265.1L860.3 265.1L859.8 265.1L859.3 265.2L858.8 265.1L858.3 265.1L857.8 265.1L857.3 265.1L856.8 265.1L856.3 265.1L855.8 265.1L855.3 265.1L854.8 265.1L854.3 265.1L853.8 265.1L853.3 265.1L852.8 265.1L852.3 265.2L851.8 265.2L851.3 265.1L850.8 265.1L850.3 265.2L849.8 265.2L849.3 265.1L848.8 265.1L848.3 265.1L847.8 265.1L847.3 265.1L846.8 265.1L846.3 265.1L845.8 265.1L845.3 265.1L844.8 265.1L844.3 265.3L843.8 265.1L843.3 265.1L842.8 265.1L842.3 265.1L841.8 265.1L841.3 265.1L840.8 265.1L840.3 265.1L839.8 265.1L839.3 265.1L838.8 265.1L838.3 265.1L837.8 265.1L837.3 265.1L836.8 265.1L836.3 265.4L835.8 265.1L835.3 265.3L834.8 265.3L834.3 265.1L833.8 265.2L833.3 265.2L832.8 265.1L832.3 265.1L831.8 265.1L831.3 265.1L830.8 265.1L830.3 265.1L829.8 265.1L829.3 265.1L828.8 265.1L828.3 265.3L827.8 265.1L827.3 265.1L826.8 265.1L826.3 265.2L825.8 265.1L825.3 265.2L824.8 265.1L824.3 265.1L823.8 265.1L823.3 265.1L822.8 265.1L822.3 265.3L821.8 265.1L821.3 265.1L820.8 265.1L820.3 265.1L819.8 265.1L819.3 265.1L818.8 265.2L818.3 265.2L817.8 265.3L817.3 265.4L816.8 265.2L816.3 265.2L815.8 265.4L815.3 265.5L814.8 265.3L814.3 265.3L813.8 265.3L813.3 265.4L812.8 265.4L812.3 265.3L811.8 265.4L811.3 265.3L810.8 265.3L810.3 265.5L809.8 265.4L809.3 265.5L808.8 265.5L808.3 265.5L807.8 265.7L807.3 265.9L806.8 265.6L806.3 265.8L805.8 266.2L805.3 266.1L804.8 266.3L804.3 266.5L803.8 266.4L803.3 266.5L802.8 266.2L802.3 266.8L801.8 267.8L801.3 266.6L800.8 268.0L800.3 267.5L799.8 267.0L799.3 267.2L798.8 267.0L798.3 267.7L797.8 267.3L797.3 267.6L796.8 266.9L796.3 269.3L795.8 267.2L795.3 267.1L794.8 266.9L794.3 267.2L793.8 267.5L793.3 267.3L792.8 267.2L792.3 267.2L791.8 267.1L791.3 266.5L790.8 266.5L790.3 267.0L789.8 266.5L789.3 267.1L788.8 267.0L788.3 267.4L787.8 267.0L787.3 267.9L786.8 266.2L786.3 266.3L785.8 266.0L785.3 266.2L784.8 266.2L784.3 266.6L783.8 266.6L783.3 266.6L782.8 267.1L782.3 268.0L781.8 267.4L781.3 266.8L780.8 266.5L780.3 266.6L779.8 267.0L779.3 267.0L778.8 266.7L778.3 267.2L777.8 266.9L777.3 266.7L776.8 266.8L776.3 266.8L775.8 268.7L775.3 266.7L774.8 266.6L774.3 267.3L773.8 266.8L773.3 267.3L772.8 267.3L772.3 267.6L771.8 267.2L771.3 267.3L770.8 267.3L770.3 267.9L769.8 267.8L769.3 268.2L768.8 268.2L768.3 270.1L767.8 270.5L767.3 270.1L766.8 272.5L766.3 270.8L765.8 270.0L765.3 269.4L764.8 270.4L764.3 270.5L763.8 277.1L763.3 272.6L762.8 271.2L762.3 273.3L761.8 273.5L761.3 274.3L760.8 277.2L760.3 272.8L759.8 276.3L759.3 275.2L758.8 278.0L758.3 274.8L757.8 275.5L757.3 283.0L756.8 276.4L756.3 276.3L755.8 277.0L755.3 278.4L754.8 287.3L754.3 281.3L753.8 277.7L753.3 282.3L752.8 281.1L752.3 281.1L751.8 280.9L751.3 284.2L750.8 284.5L750.3 290.6L749.8 281.5L749.3 287.5L748.8 290.2L748.3 285.7L747.8 293.7L747.3 299.9L746.8 305.2L746.3 289.1L745.8 288.7L745.3 290.9L744.8 290.7L744.3 291.8L743.8 305.2L743.3 289.1L742.8 292.0L742.3 305.2L741.8 293.0L741.3 284.6L740.8 288.5L740.3 283.8L739.8 284.1L739.3 287.1L738.8 301.0L738.3 283.1L737.8 283.6L737.3 280.7L736.8 279.6L736.3 273.7L735.8 272.6L735.3 282.8L734.8 274.0L734.3 285.4L733.8 277.4L733.3 277.7L732.8 278.5L732.3 283.4L731.8 276.2L731.3 279.0L730.8 278.9L730.3 281.5L729.8 281.9L729.3 283.4L728.8 279.3L728.3 280.3L727.8 281.2L727.3 287.4L726.8 286.1L726.3 297.1L725.8 287.8L725.3 289.7L724.8 282.7L724.3 304.9L723.8 305.2L723.3 305.2L722.8 288.1L722.3 288.0L721.8 289.2L721.3 290.2L720.8 296.0L720.3 305.2L719.8 288.3L719.3 292.7L718.8 296.2L718.3 293.1L717.8 291.7L717.3 281.9L716.8 281.1L716.3 274.6L715.8 275.0L715.3 276.8L714.8 275.7L714.3 274.6L713.8 275.1L713.3 274.6L712.8 275.0L712.3 276.0L711.8 284.4L711.3 279.2L710.8 280.8L710.3 284.2L709.8 279.4L709.3 275.6L708.8 280.3L708.3 278.8L707.8 279.5L707.3 277.8L706.8 283.1L706.3 283.1L705.8 280.0L705.3 280.8L704.8 282.0L704.3 285.3L703.8 289.8L703.3 297.1L702.8 283.4L702.3 284.2L701.8 285.4L701.3 286.6L700.8 286.4L700.3 290.5L699.8 285.3L699.3 286.9L698.8 288.1L698.3 288.9L697.8 286.2L697.3 289.2L696.8 300.8L696.3 285.0L695.8 285.4L695.3 288.3L694.8 287.0L694.3 294.4L693.8 292.6L693.3 293.8L692.8 288.8L692.3 293.7L691.8 301.2L691.3 287.7L690.8 285.2L690.3 287.0L689.8 289.9L689.3 288.4L688.8 291.4L688.3 292.7L687.8 281.3L687.3 283.4L686.8 280.2L686.3 279.4L685.8 270.4L685.3 270.9L684.8 272.2L684.3 272.6L683.8 273.3L683.3 273.5L682.8 274.8L682.3 279.7L681.8 274.5L681.3 279.2L680.8 274.8L680.3 275.0L679.8 276.0L679.3 276.7L678.8 277.3L678.3 278.3L677.8 279.5L677.3 275.9L676.8 278.3L676.3 278.6L675.8 279.7L675.3 278.8L674.8 275.8L674.3 277.8L673.8 277.4L673.3 277.9L672.8 278.1L672.3 277.7L671.8 281.7L671.3 282.0L670.8 284.0L670.3 283.8L669.8 287.1L669.3 287.5L668.8 287.9L668.3 288.5L667.8 292.4L667.3 305.2L666.8 287.5L666.3 292.3L665.8 296.0L665.3 290.2L664.8 289.7L664.3 286.9L663.8 288.1L663.3 292.4L662.8 294.6L662.3 292.5L661.8 292.3L661.3 288.1L660.8 289.2L660.3 286.6L659.8 285.6L659.3 286.0L658.8 286.9L658.3 286.7L657.8 283.7L657.3 283.2L656.8 286.5L656.3 300.5L655.8 297.0L655.3 284.1L654.8 281.3L654.3 283.1L653.8 282.8L653.3 284.6L652.8 298.2L652.3 288.7L651.8 285.5L651.3 288.2L650.8 290.5L650.3 285.8L649.8 288.4L649.3 286.0L648.8 292.8L648.3 292.2L647.8 296.6L647.3 298.5L646.8 288.4L646.3 290.6L645.8 291.0L645.3 289.2L644.8 291.2L644.3 291.8L643.8 293.3L643.3 305.2L642.8 293.6L642.3 297.4L641.8 305.2L641.3 294.2L640.8 291.2L640.3 290.2L639.8 294.8L639.3 297.4L638.8 303.1L638.3 305.2L637.8 305.2L637.3 295.8L636.8 292.1L636.3 289.9L635.8 295.6L635.3 294.9L634.8 293.6L634.3 305.2L633.8 296.5L633.3 305.2L632.8 295.1L632.3 296.6L631.8 289.3L631.3 289.7L630.8 285.9L630.3 289.7L629.8 286.2L629.3 292.3L628.8 287.0L628.3 288.4L627.8 288.1L627.3 290.0L626.8 291.9L626.3 292.8L625.8 284.5L625.3 285.1L624.8 282.4L624.3 282.3L623.8 283.1L623.3 285.9L622.8 278.1L622.3 282.2L621.8 284.1L621.3 284.5L620.8 282.2L620.3 297.7L619.8 280.2L619.3 297.3L618.8 284.9L618.3 284.3L617.8 285.7L617.3 286.3L616.8 302.0L616.3 290.1L615.8 285.4L615.3 293.8L614.8 295.3L614.3 282.6L613.8 283.4L613.3 288.7L612.8 284.7L612.3 289.2L611.8 285.6L611.3 288.3L610.8 291.3L610.3 289.4L609.8 289.1L609.3 294.0L608.8 291.2L608.3 294.6L607.8 296.6L607.3 294.9L606.8 305.2L606.3 295.9L605.8 295.7L605.3 303.6L604.8 303.4L604.3 295.3L603.8 287.3L603.3 293.8L602.8 305.2L602.3 294.0L601.8 305.2L601.3 292.1L600.8 294.7L600.3 294.0L599.8 292.6L599.3 288.3L598.8 288.8L598.3 288.8L597.8 292.8L597.3 291.0L596.8 294.1L596.3 297.4L595.8 300.7L595.3 287.7L594.8 291.8L594.3 290.1L593.8 291.6L593.3 304.5L592.8 304.3L592.3 295.0L591.8 304.0L591.3 305.2L590.8 288.7L590.3 300.7L589.8 285.4L589.3 286.0L588.8 284.3L588.3 281.8L587.8 287.8L587.3 286.6L586.8 292.5L586.3 285.4L585.8 289.2L585.3 289.7L584.8 292.3L584.3 293.9L583.8 285.0L583.3 287.9L582.8 286.1L582.3 293.2L581.8 286.7L581.3 298.3L580.8 289.2L580.3 285.7L579.8 286.3L579.3 302.8L578.8 288.2L578.3 285.1L577.8 288.2L577.3 282.4L576.8 274.8L576.3 273.5L575.8 275.0L575.3 275.4L574.8 284.4L574.3 275.6L573.8 282.4L573.3 277.3L572.8 278.7L572.3 289.2L571.8 281.7L571.3 286.0L570.8 277.7L570.3 281.0L569.8 281.2L569.3 282.7L568.8 283.1L568.3 287.7L567.8 291.5L567.3 283.6L566.8 286.3L566.3 282.7L565.8 286.6L565.3 286.4L564.8 289.1L564.3 292.1L563.8 281.9L563.3 283.0L562.8 281.8L562.3 281.9L561.8 284.1L561.3 286.5L560.8 287.9L560.3 287.2L559.8 291.5L559.3 286.8L558.8 284.2L558.3 286.4L557.8 288.1L557.3 284.4L556.8 285.0L556.3 283.5L555.8 286.6L555.3 288.3L554.8 295.6L554.3 301.3L553.8 286.5L553.3 289.7L552.8 286.8L552.3 305.2L551.8 295.1L551.3 293.8L550.8 295.2L550.3 283.9L549.8 284.0L549.3 288.2L548.8 291.5L548.3 287.4L547.8 287.1L547.3 286.1L546.8 286.5L546.3 283.9L545.8 291.5L545.3 290.4L544.8 287.4L544.3 289.4L543.8 291.3L543.3 281.8L542.8 282.8L542.3 288.0L541.8 288.5L541.3 305.1L540.8 287.1L540.3 289.4L539.8 288.7L539.3 292.8L538.8 294.9L538.3 289.5L537.8 283.8L537.3 288.7L536.8 291.3L536.3 284.4L535.8 298.6L535.3 278.0L534.8 276.2L534.3 279.3L533.8 280.4L533.3 282.3L532.8 279.6L532.3 280.5L531.8 286.1L531.3 283.7L530.8 281.0L530.3 288.2L529.8 286.9L529.3 293.3L528.8 300.3L528.3 281.7L527.8 288.9L527.3 284.1L526.8 291.2L526.3 288.7L525.8 296.2L525.3 290.0L524.8 288.7L524.3 291.2L523.8 289.3L523.3 292.6L522.8 288.2L522.3 285.4L521.8 289.6L521.3 294.4L520.8 287.2L520.3 292.3L519.8 302.6L519.3 286.2L518.8 291.0L518.3 291.2L517.8 292.0L517.3 291.4L516.8 287.8L516.3 287.0L515.8 280.7L515.3 280.3L514.8 278.6L514.3 278.0L513.8 279.4L513.3 281.2L512.8 279.6L512.3 284.2L511.8 286.8L511.3 279.4L510.8 277.4L510.3 278.3L509.8 292.5L509.3 279.6L508.8 283.6L508.3 282.6L507.8 277.4L507.3 279.1L506.8 278.8L506.3 278.0L505.8 278.2L505.3 281.4L504.8 279.3L504.3 282.4L503.8 281.8L503.3 284.2L502.8 280.5L502.3 279.6L501.8 285.9L501.3 287.8L500.8 282.6L500.3 291.5L499.8 305.2L499.3 289.7L498.8 288.3L498.3 285.4L497.8 291.6L497.3 297.1L496.8 296.2L496.3 285.8L495.8 280.4L495.3 281.1L494.8 280.7L494.3 280.4L493.8 282.7L493.3 278.6L492.8 281.6L492.3 277.2L491.8 276.1L491.3 277.1L490.8 271.6L490.3 270.9L489.8 274.7L489.3 273.7L488.8 272.2L488.3 273.4L487.8 274.2L487.3 273.6L486.8 276.8L486.3 273.5L485.8 277.0L485.3 276.5L484.8 278.8L484.3 282.7L483.8 283.5L483.3 279.3L482.8 276.7L482.3 276.2L481.8 277.4L481.3 280.1L480.8 295.4L480.3 281.8L479.8 295.4L479.3 280.8L478.8 288.6L478.3 285.1L477.8 281.0L477.3 281.0L476.8 283.8L476.3 282.6L475.8 284.7L475.3 292.3L474.8 289.2L474.3 288.5L473.8 289.1L473.3 289.8L472.8 287.5L472.3 286.5L471.8 294.1L471.3 305.2L470.8 297.8L470.3 301.3L469.8 299.7L469.3 290.7L468.8 293.5L468.3 289.9L467.8 304.4L467.3 290.3L466.8 289.0L466.3 297.0L465.8 275.0L465.3 270.1L464.8 270.9L464.3 271.7L463.8 273.1L463.3 272.6L462.8 278.8L462.3 274.7L461.8 284.9L461.3 274.7L460.8 276.2L460.3 279.1L459.8 279.7L459.3 283.7L458.8 281.6L458.3 280.7L457.8 281.7L457.3 280.9L456.8 280.8L456.3 285.0L455.8 280.8L455.3 280.3L454.8 283.9L454.3 282.3L453.8 284.9L453.3 289.4L452.8 282.5L452.3 290.3L451.8 284.0L451.3 280.9L450.8 286.6L450.3 290.2L449.8 282.2L449.3 278.0L448.8 282.1L448.3 286.2L447.8 279.6L447.3 290.8L446.8 279.9L446.3 283.7L445.8 283.4L445.3 283.6L444.8 283.8L444.3 284.6L443.8 288.9L443.3 297.4L442.8 305.2L442.3 302.1L441.8 305.2L441.3 286.0L440.8 288.6L440.3 287.9L439.8 285.7L439.3 285.9L438.8 284.0L438.3 282.7L437.8 282.1L437.3 278.3L436.8 274.9L436.3 271.2L435.8 271.2L435.3 271.8L434.8 273.8L434.3 272.7L433.8 275.2L433.3 272.7L432.8 274.1L432.3 283.0L431.8 275.0L431.3 276.6L430.8 275.7L430.3 275.5L429.8 274.8L429.3 275.5L428.8 276.2L428.3 281.1L427.8 279.3L427.3 284.1L426.8 282.4L426.3 290.6L425.8 280.9L425.3 286.6L424.8 284.6L424.3 286.1L423.8 285.5L423.3 283.1L422.8 285.8L422.3 287.2L421.8 292.1L421.3 298.0L420.8 284.4L420.3 284.5L419.8 280.8L419.3 281.2L418.8 285.3L418.3 289.1L417.8 287.2L417.3 289.4L416.8 291.3L416.3 286.3L415.8 293.3L415.3 286.4L414.8 284.4L414.3 283.7L413.8 287.0L413.3 282.3L412.8 285.8L412.3 284.4L411.8 289.7L411.3 288.7L410.8 284.8L410.3 296.9L409.8 282.1L409.3 298.8L408.8 286.0L408.3 282.2L407.8 286.6L407.3 284.1L406.8 277.4L406.3 282.6L405.8 277.1L405.3 279.0L404.8 278.0L404.3 274.2L403.8 273.6L403.3 274.5L402.8 272.1L402.3 275.3L401.8 275.1L401.3 272.2L400.8 274.9L400.3 273.4L399.8 274.0L399.3 272.6L398.8 275.2L398.3 274.2L397.8 274.9L397.3 274.9L396.8 275.6L396.3 275.2L395.8 277.6L395.3 275.9L394.8 274.3L394.3 275.7L393.8 275.6L393.3 277.6L392.8 275.1L392.3 285.6L391.8 275.1L391.3 289.2L390.8 289.2L390.3 280.4L389.8 275.2L389.3 278.5L388.8 279.1L388.3 279.9L387.8 276.6L387.3 280.5L386.8 287.5L386.3 282.0L385.8 288.2L385.3 284.8L384.8 277.6L384.3 280.6L383.8 279.0L383.3 277.0L382.8 276.2L382.3 281.3L381.8 273.0L381.3 278.2L380.8 273.1L380.3 272.4L379.8 273.8L379.3 274.2L378.8 273.3L378.3 274.9L377.8 276.5L377.3 277.4L376.8 285.7L376.3 284.9L375.8 278.0L375.3 275.2L374.8 279.2L374.3 279.8L373.8 280.0L373.3 279.7L372.8 280.8L372.3 284.8L371.8 284.5L371.3 283.7L370.8 280.9L370.3 281.2L369.8 285.1L369.3 294.9L368.8 281.8L368.3 282.8L367.8 278.6L367.3 280.3L366.8 280.7L366.3 277.7L365.8 279.5L365.3 282.8L364.8 280.2L364.3 283.6L363.8 283.9L363.3 281.0L362.8 280.9L362.3 281.0L361.8 282.7L361.3 288.5L360.8 277.0L360.3 279.5L359.8 279.5L359.3 278.4L358.8 278.5L358.3 289.4L357.8 281.0L357.3 281.7L356.8 281.4L356.3 283.4L355.8 278.7L355.3 278.4L354.8 278.2L354.3 273.6L353.8 274.3L353.3 271.8L352.8 271.3L352.3 273.0L351.8 271.1L351.3 274.4L350.8 275.1L350.3 277.2L349.8 274.3L349.3 276.0L348.8 274.6L348.3 274.2L347.8 276.3L347.3 277.3L346.8 279.3L346.3 282.4L345.8 281.7L345.3 290.5L344.8 277.9L344.3 293.9L343.8 279.9L343.3 282.9L342.8 279.3L342.3 282.6L341.8 293.1L341.3 280.1L340.8 281.4L340.3 289.2L339.8 279.7L339.3 282.6L338.8 277.5L338.3 282.6L337.8 280.5L337.3 291.3L336.8 280.4L336.3 278.7L335.8 281.0L335.3 282.0L334.8 281.0L334.3 288.4L333.8 277.9L333.3 280.8L332.8 275.9L332.3 277.5L331.8 278.3L331.3 278.2L330.8 277.3L330.3 288.4L329.8 277.8L329.3 287.3L328.8 287.2L328.3 283.6L327.8 276.5L327.3 276.6L326.8 272.9L326.3 273.5L325.8 269.0L325.3 270.1L324.8 271.3L324.3 273.8L323.8 271.3L323.3 270.3L322.8 270.3L322.3 271.6L321.8 273.7L321.3 273.8L320.8 274.7L320.3 275.8L319.8 281.8L319.3 278.4L318.8 276.4L318.3 276.3L317.8 277.8L317.3 277.7L316.8 276.2L316.3 281.0L315.8 286.8L315.3 281.1L314.8 284.6L314.3 279.3L313.8 281.3L313.3 279.1L312.8 284.9L312.3 284.5L311.8 284.0L311.3 280.8L310.8 279.8L310.3 276.9L309.8 281.8L309.3 280.5L308.8 283.0L308.3 281.4L307.8 279.7L307.3 281.6L306.8 280.7L306.3 284.3L305.8 286.9L305.3 285.4L304.8 284.4L304.3 288.2L303.8 287.8L303.3 284.9L302.8 282.8L302.3 298.5L301.8 284.2L301.3 300.0L300.8 298.3L300.3 282.1L299.8 284.1L299.3 284.3L298.8 285.0L298.3 283.8L297.8 281.5L297.3 281.7L296.8 282.7L296.3 282.1L295.8 283.2L295.3 285.1L294.8 288.0L294.3 281.6L293.8 285.5L293.3 282.9L292.8 285.2L292.3 284.4L291.8 284.1L291.3 283.7L290.8 284.6L290.3 282.8L289.8 279.1L289.3 277.7L288.8 282.8L288.3 281.3L287.8 280.8L287.3 281.8L286.8 282.5L286.3 279.1L285.8 279.1L285.3 281.5L284.8 281.8L284.3 288.3L283.8 277.5L283.3 280.2L282.8 279.1L282.3 279.3L281.8 291.5L281.3 280.1L280.8 281.3L280.3 285.1L279.8 279.4L279.3 278.1L278.8 277.7L278.3 272.0L277.8 271.2L277.3 272.0L276.8 273.0L276.3 273.7L275.8 274.0L275.3 271.8L274.8 279.2L274.3 272.2L273.8 274.1L273.3 274.3L272.8 272.5L272.3 271.6L271.8 279.3L271.3 272.9L270.8 275.1L270.3 273.9L269.8 277.1L269.3 277.2L268.8 275.5L268.3 276.2L267.8 274.9L267.3 275.6L266.8 279.4L266.3 276.8L265.8 276.7L265.3 275.9L264.8 278.8L264.3 281.8L263.8 280.5L263.3 276.5L262.8 277.7L262.3 281.0L261.8 279.8L261.3 277.2L260.8 286.0L260.3 274.4L259.8 275.8L259.3 275.1L258.8 283.9L258.3 275.6L257.8 272.8L257.3 275.3L256.8 273.2L256.3 272.9L255.8 269.5L255.3 270.8L254.8 271.7L254.3 270.7L253.8 273.3L253.3 274.2L252.8 275.5L252.3 272.3L251.8 274.7L251.3 275.5L250.8 274.2L250.3 276.2L249.8 276.5L249.3 277.8L248.8 276.9L248.3 278.7L247.8 276.6L247.3 278.7L246.8 281.6L246.3 277.3L245.8 276.9L245.3 276.6L244.8 278.7L244.3 274.6L243.8 276.8L243.3 278.1L242.8 279.2L242.3 276.3L241.8 276.2L241.3 274.4L240.8 277.5L240.3 277.0L239.8 277.6L239.3 277.6L238.8 274.8L238.3 276.4L237.8 275.9L237.3 273.5L236.8 274.4L236.3 275.3L235.8 275.7L235.3 274.1L234.8 275.2L234.3 275.8L233.8 275.0L233.3 275.2L232.8 273.7L232.3 275.9L231.8 276.7L231.3 285.8L230.8 274.9L230.3 276.5L229.8 273.5L229.3 269.4L228.8 270.1L228.3 271.3L227.8 271.9L227.3 274.6L226.8 271.4L226.3 271.7L225.8 271.0L225.3 274.5L224.8 270.7L224.3 272.5L223.8 272.9L223.3 273.6L222.8 272.4L222.3 275.0L221.8 275.4L221.3 276.7L220.8 271.7L220.3 273.3L219.8 271.3L219.3 271.0L218.8 271.8L218.3 272.2L217.8 274.7L217.3 270.5L216.8 272.4L216.3 270.8L215.8 270.9L215.3 270.7L214.8 276.5L214.3 277.5L213.8 271.4L213.3 273.2L212.8 271.1L212.3 271.8L211.8 273.7L211.3 275.7L210.8 272.2L210.3 274.5L209.8 274.0L209.3 275.0L208.8 276.2L208.3 277.5L207.8 280.3L207.3 285.0L206.8 285.7L206.3 274.8L205.8 276.5L205.3 276.1L204.8 277.3L204.3 280.3L203.8 283.7L203.3 277.6L202.8 276.7L202.3 278.1L201.8 286.7L201.3 277.2L200.8 275.0L200.3 278.5L199.8 286.0L199.3 278.2L198.8 274.8L198.3 278.9L197.8 279.7L197.3 276.2L196.8 277.0L196.3 274.8L195.8 274.2L195.3 277.2L194.8 278.5L194.3 279.0L193.8 281.6L193.3 275.1L192.8 274.9L192.3 275.2L191.8 275.9L191.3 275.0L190.8 275.6L190.3 273.9L189.8 276.1L189.3 279.0L188.8 274.0L188.3 273.6L187.8 274.1L187.3 274.8L186.8 272.5L186.3 274.9L185.8 272.8L185.3 273.7L184.8 274.8L184.3 275.2L183.8 277.0L183.3 275.0L182.8 275.7L182.3 277.2L181.8 276.8L181.3 276.4L180.8 283.1L180.3 274.1L179.8 275.9L179.3 278.1L178.8 279.0L178.3 288.6L177.8 278.6L177.3 275.0L176.8 279.1L176.3 287.0L175.8 280.0L175.3 278.8L174.8 278.2L174.3 279.4L173.8 277.1L173.3 275.8L172.8 275.1L172.3 282.7L171.8 276.9L171.3 277.7L170.8 283.8L170.3 273.6L169.8 273.3L169.3 271.1L168.8 270.4L168.3 272.3L167.8 273.2L167.3 274.8L166.8 270.9L166.3 270.8L165.8 272.9L165.3 273.1L164.8 272.4L164.3 276.1L163.8 272.5L163.3 277.0L162.8 271.9L162.3 271.8L161.8 271.4L161.3 273.8L160.8 273.1L160.3 273.4L159.8 277.5L159.3 276.1L158.8 271.8L158.3 274.3L157.8 274.3L157.3 273.4L156.8 275.4L156.3 276.3L155.8 277.3L155.3 275.9L154.8 281.0L154.3 284.7L153.8 276.2L153.3 274.2L152.8 288.4L152.3 276.7L151.8 279.5L151.3 279.8L150.8 279.9L150.3 281.9L149.8 283.0L149.3 290.1L148.8 278.5L148.3 280.2L147.8 278.6L147.3 278.5L146.8 281.0L146.3 283.6L145.8 282.6L145.3 290.9L144.8 278.8L144.3 277.6L143.8 280.6L143.3 279.3L142.8 276.9L142.3 278.7L141.8 273.9L141.3 275.7L140.8 275.5L140.3 279.0L139.8 273.5L139.3 274.1L138.8 272.2L138.3 273.3L137.8 273.6L137.3 273.2L136.8 273.7L136.3 273.7L135.8 272.8L135.3 277.7L134.8 271.6L134.3 272.0L133.8 271.4L133.3 270.3L132.8 271.7L132.3 272.4L131.8 271.2L131.3 270.4L130.8 272.6L130.3 271.6L129.8 272.3L129.3 272.3L128.8 272.3L128.3 271.1L127.8 271.2L127.3 273.1L126.8 274.6L126.3 273.8L125.8 274.1L125.3 275.0L124.8 277.3L124.3 271.9L123.8 273.0L123.3 276.0L122.8 275.5L122.3 275.8L121.8 277.1L121.3 275.4L120.8 277.4L120.3 275.8L119.8 278.3L119.3 275.8L118.8 274.3L118.3 275.5L117.8 277.0L117.3 277.6L116.8 273.8L116.3 272.4L115.8 274.2L115.3 272.6L114.8 273.5L114.3 273.3L113.8 276.7L113.3 272.4L112.8 271.3L112.3 269.1L111.8 271.1L111.3 269.2L110.8 269.4L110.3 270.1L109.8 275.1L109.3 275.2L108.8 273.1L108.3 270.0L107.8 272.1L107.3 271.2L106.8 273.6L106.3 271.2L105.8 270.5L105.3 271.1L104.8 272.3L104.3 272.4L103.8 273.4L103.3 273.0L102.8 274.2L102.3 275.8L101.8 273.1L101.3 272.1L100.8 271.2L100.3 274.1L99.8 279.7L99.3 273.8L98.8 275.0L98.3 273.8L97.8 274.3L97.3 273.5L96.8 272.5L96.3 274.5L95.8 275.6L95.3 275.1L94.8 276.3L94.3 275.1L93.8 274.8L93.3 274.4L92.8 275.3L92.3 274.9L91.8 278.0L91.3 277.7L90.8 273.7L90.3 272.9L89.8 273.5L89.3 272.8L88.8 272.3L88.3 273.1L87.8 269.6L87.3 270.6L86.8 271.2L86.3 272.2L85.8 273.9L85.3 270.4L84.8 270.1L84.3 269.4L83.8 270.8L83.3 270.6Z" fill="#d9cd85" clip-path="url(#sel2)"/><rect x="439.3" y="220.1" width="0.9" height="89.20000000000002" fill="#4a7aa6"/><rect x="717" y="220.1" width="0.9" height="89.20000000000002" fill="#4a7aa6"/><rect x="229.9" y="220.1" width="1.4" height="89.20000000000002" fill="#a02fb4"/><rect x="503.2" y="220.1" width="1.1" height="89.20000000000002" fill="#b2443a"/></svg>
<div style="left:49.30px;top:102.70px;width:778.50px;height:0.90px;background:#55575e"></div>
<div style="left:49.30px;top:193.10px;width:778.50px;height:4.50px;background:#3e4047"></div>
<div style="left:195.90px;top:193.10px;width:1.40px;height:4.50px;background:#a02fb4"></div>
<div style="left:469.20px;top:193.10px;width:1.00px;height:4.50px;background:#c8463a"></div>
<div style="left:405.30px;top:193.10px;width:0.90px;height:4.50px;background:#4a7aa6"></div>
<div style="left:683.00px;top:193.10px;width:0.90px;height:4.50px;background:#4a7aa6"></div>
<div class="t" style="left:199.00px;top:104.31px;font-size:6.8px;line-height:9.52px;color:#e8e8ea;font-weight:normal;">Part A</div>
<div class="t" style="left:408.50px;top:104.31px;font-size:6.8px;line-height:9.52px;color:#e8e8ea;font-weight:normal;">Pads</div>
<svg style="left:465.00px;top:91.50px;width:10px;height:12px;" viewBox="499 114 10 12" width="10" height="12"><path d="M500.8 116h5.8v6.6l-2.9 2.8-2.9-2.8z" fill="#d8342c"/></svg>
<div style="left:5.20px;top:141.50px;width:12.00px;height:12.60px;background:#45474e;border-radius:1px"></div>
<svg style="left:5.20px;top:141.50px;width:12px;height:12.6px;" viewBox="39.2 164 12 12.6" width="12" height="12.6"><rect x="41.2" y="166.8" width="7.8" height="7" fill="none" stroke="#8c8d93" stroke-width="0.7"/><circle cx="40.6" cy="166.2" r="1" fill="#f0a820"/></svg>
<svg style="left:19.00px;top:142.50px;width:5px;height:11px;" viewBox="53 165 5 11" width="5" height="11"><path d="M53.3 169.2L55.5 166L57.7 169.2ZM53.3 171.4L55.5 174.6L57.7 171.4Z" fill="#c9cacf"/></svg>
<div style="left:5.20px;top:235.50px;width:12.00px;height:12.60px;background:#45474e;border-radius:1px"></div>
<svg style="left:5.20px;top:235.50px;width:12px;height:12.6px;" viewBox="39.2 258 12 12.6" width="12" height="12.6"><rect x="41.2" y="260.8" width="7.8" height="7" fill="none" stroke="#8c8d93" stroke-width="0.7"/><circle cx="49.4" cy="260.2" r="1" fill="#f0a820"/></svg>
<svg style="left:19.00px;top:236.50px;width:5px;height:11px;" viewBox="53 259 5 11" width="5" height="11"><path d="M53.3 263.2L55.5 260L57.7 263.2ZM53.3 265.4L55.5 268.6L57.7 265.4Z" fill="#c9cacf"/></svg>
<div style="left:827.80px;top:103.30px;width:12.60px;height:183.50px;background:#484a51"></div>
<div style="left:828.40px;top:103.50px;width:12.00px;height:12.00px;background:linear-gradient(#e6e7ea,#c9cace);border-radius:1px"></div>
<svg style="left:828.40px;top:103.50px;width:12px;height:12px;" viewBox="862.4 126 12 12" width="12" height="12"><path d="M864.9 134.6L868.4 130.2L871.9 134.6Z" fill="#111"/></svg>
<div style="left:830.00px;top:150.30px;width:8.20px;height:66.00px;background:linear-gradient(90deg,#d9dade,#c4c5ca);border-radius:1.5px"></div>
<div style="left:828.40px;top:251.00px;width:11.80px;height:48.00px;background:linear-gradient(#e6e7ea,#c9cace)"></div>
<div style="left:828.40px;top:262.10px;width:11.80px;height:0.80px;background:#a9aaae"></div>
<div style="left:828.40px;top:274.30px;width:11.80px;height:0.80px;background:#a9aaae"></div>
<div style="left:828.40px;top:286.40px;width:11.80px;height:0.80px;background:#a9aaae"></div>
<svg style="left:826.00px;top:247.50px;width:18px;height:40px;" viewBox="860 270 18 40" width="18" height="40"><circle cx="867.6" cy="278.8" r="2.5" fill="none" stroke="#111" stroke-width="1.15"/><path d="M869.3000000000001 280.5l2.1 2.1" stroke="#111" stroke-width="1.4" stroke-linecap="round"/><path d="M866.4 278.8h2.4" stroke="#111" stroke-width="0.75"/><path d="M867.6 277.6v2.4" stroke="#111" stroke-width="0.75"/><circle cx="867.6" cy="290.6" r="2.5" fill="none" stroke="#111" stroke-width="1.15"/><path d="M869.3000000000001 292.3l2.1 2.1" stroke="#111" stroke-width="1.4" stroke-linecap="round"/><path d="M866.4 290.6h2.4" stroke="#111" stroke-width="0.75"/><path d="M865 302.6L871.2 302.6L868.1 306.2Z" fill="#111"/></svg>
<div style="left:49.00px;top:287.90px;width:779.40px;height:11.60px;background:#3e4047"></div>
<div style="left:49.00px;top:288.10px;width:12.20px;height:11.40px;background:linear-gradient(#e6e7ea,#c9cace)"></div>
<svg style="left:49.00px;top:288.10px;width:12.2px;height:11.4px;" viewBox="83 310.6 12.2 11.4" width="12.2" height="11.4"><path d="M91.6 312.8V319.8L87.2 316.3Z" fill="#111"/></svg>
<div style="left:62.50px;top:289.10px;width:725.40px;height:9.40px;background:linear-gradient(#d4d5d9,#c2c3c8);border-radius:1.5px"></div>
<div style="left:63.00px;top:289.90px;width:1.00px;height:7.80px;background:#a4a5aa"></div>
<div style="left:785.40px;top:289.90px;width:0.80px;height:7.80px;background:#a4a5aa"></div>
<div style="left:792.00px;top:287.70px;width:48.20px;height:11.40px;background:linear-gradient(#e6e7ea,#c9cace)"></div>
<div style="left:802.80px;top:287.70px;width:0.80px;height:11.40px;background:#a9aaae"></div>
<div style="left:815.80px;top:287.70px;width:0.80px;height:11.40px;background:#a9aaae"></div>
<div style="left:828.00px;top:287.70px;width:0.80px;height:11.40px;background:#a9aaae"></div>
<svg style="left:786.00px;top:285.50px;width:56px;height:16px;" viewBox="820 308 56 16" width="56" height="16"><circle cx="831.2" cy="315.4" r="2.5" fill="none" stroke="#111" stroke-width="1.15"/><path d="M832.9000000000001 317.09999999999997l2.1 2.1" stroke="#111" stroke-width="1.4" stroke-linecap="round"/><path d="M830.0 315.4h2.4" stroke="#111" stroke-width="0.75"/><path d="M831.2 314.2v2.4" stroke="#111" stroke-width="0.75"/><circle cx="843.2" cy="315.4" r="2.5" fill="none" stroke="#111" stroke-width="1.15"/><path d="M844.9000000000001 317.09999999999997l2.1 2.1" stroke="#111" stroke-width="1.4" stroke-linecap="round"/><path d="M842.0 315.4h2.4" stroke="#111" stroke-width="0.75"/><path d="M854.4 313.2V319.2L858.2 316.2Z" fill="#111"/><g transform="translate(868 316) scale(1.0)"><path d="M-3.4 3.4L0.9 -0.9" stroke="#111" stroke-width="1.7" stroke-linecap="round"/><circle cx="1.2" cy="-1.2" r="2.5" fill="#111"/><circle cx="2.6" cy="-2.6" r="1.25" fill="#d6d7da"/></g></svg>
<div class="t" style="left:59.60px;top:304.37px;font-size:7.2px;line-height:10.08px;color:#e4e5e8;font-weight:normal;">From:</div>
<div class="t" style="left:115.60px;top:304.37px;font-size:7.2px;line-height:10.08px;color:#e4e5e8;font-weight:normal;">To:</div>
<div class="t" style="left:171.60px;top:304.37px;font-size:7.2px;line-height:10.08px;color:#e4e5e8;font-weight:normal;">Duration:</div>
<div class="t" style="left:13.00px;top:317.17px;font-size:7.2px;line-height:10.08px;color:#e4e5e8;font-weight:normal;">Selection:</div>
<div class="t" style="left:13.00px;top:330.17px;font-size:7.2px;line-height:10.08px;color:#e4e5e8;font-weight:normal;">View:</div>
<div style="left:58.40px;top:315.90px;width:49.20px;height:11.20px;background:#c9cacf;border:0.6px solid #9a9ba0"></div>
<div class="t" style="left:53.00px;width:60px;text-align:center;top:318.21px;font-size:7.1px;line-height:9.94px;color:#1a1a1a;font-weight:normal;">00:00:00:000</div>
<div style="left:114.60px;top:315.90px;width:49.20px;height:11.20px;background:#c9cacf;border:0.6px solid #9a9ba0"></div>
<div class="t" style="left:109.20px;width:60px;text-align:center;top:318.21px;font-size:7.1px;line-height:9.94px;color:#1a1a1a;font-weight:normal;">00:00:00:000</div>
<div style="left:170.60px;top:315.90px;width:49.20px;height:11.20px;background:#c9cacf;border:0.6px solid #9a9ba0"></div>
<div class="t" style="left:165.20px;width:60px;text-align:center;top:318.21px;font-size:7.1px;line-height:9.94px;color:#1a1a1a;font-weight:normal;">00:00:00:000</div>
<div style="left:225.00px;top:315.10px;width:28.60px;height:12.00px;background:linear-gradient(#e2e3e6,#c5c6ca);border-radius:2px"></div>
<div style="left:239.10px;top:315.60px;width:0.80px;height:11.00px;background:rgba(150,152,160,0.5)"></div>
<svg style="left:225.00px;top:314.90px;width:29px;height:13px;" viewBox="259 337.4 29 13" width="29" height="13"><path d="M263.6 342.99999999999994c1-1.3 2.8-1.6 4.1-0.7 1.5 1 1.4 3.3 0.3 4.5" fill="none" stroke="#111" stroke-width="1.3"/><path d="M262.4 341.4l0.2 3.3 2.9-1.3z" fill="#111"/><path d="M283.6 342.99999999999994c-1-1.3-2.8-1.6-4.1-0.7-1.5 1-1.4 3.3-0.3 4.5" fill="none" stroke="#8a8c92" stroke-width="1.1"/><path d="M284.8 341.4l-0.2 3.3-2.9-1.3z" fill="#8a8c92"/></svg>
<div style="left:58.40px;top:329.10px;width:49.20px;height:11.20px;background:#c9cacf;border:0.6px solid #9a9ba0"></div>
<div class="t" style="left:53.00px;width:60px;text-align:center;top:331.41px;font-size:7.1px;line-height:9.94px;color:#1a1a1a;font-weight:normal;">00:00:00:000</div>
<div style="left:114.60px;top:329.10px;width:49.20px;height:11.20px;background:#c9cacf;border:0.6px solid #9a9ba0"></div>
<div class="t" style="left:109.20px;width:60px;text-align:center;top:331.41px;font-size:7.1px;line-height:9.94px;color:#1a1a1a;font-weight:normal;">00:00:53:493</div>
<div style="left:170.60px;top:329.10px;width:49.20px;height:11.20px;background:#c9cacf;border:0.6px solid #9a9ba0"></div>
<div class="t" style="left:165.20px;width:60px;text-align:center;top:331.41px;font-size:7.1px;line-height:9.94px;color:#1a1a1a;font-weight:normal;">00:00:53:493</div>
<div style="left:225.00px;top:328.30px;width:28.60px;height:12.00px;background:linear-gradient(#e2e3e6,#c5c6ca);border-radius:2px"></div>
<div style="left:239.10px;top:328.80px;width:0.80px;height:11.00px;background:rgba(150,152,160,0.5)"></div>
<svg style="left:225.00px;top:328.10px;width:29px;height:13px;" viewBox="259 350.6 29 13" width="29" height="13"><path d="M263.6 356.2c1-1.3 2.8-1.6 4.1-0.7 1.5 1 1.4 3.3 0.3 4.5" fill="none" stroke="#111" stroke-width="1.3"/><path d="M262.4 354.6l0.2 3.3 2.9-1.3z" fill="#111"/><path d="M283.6 356.2c-1-1.3-2.8-1.6-4.1-0.7-1.5 1-1.4 3.3-0.3 4.5" fill="none" stroke="#8a8c92" stroke-width="1.1"/><path d="M284.8 354.6l-0.2 3.3-2.9-1.3z" fill="#8a8c92"/></svg>
<div class="t" style="left:262.00px;top:317.14px;font-size:7.25px;line-height:10.15px;color:#e4e5e8;font-weight:normal;">Cursor position:</div>
<div style="left:327.00px;top:315.90px;width:49.40px;height:11.20px;background:#c9cacf;border:0.6px solid #9a9ba0"></div>
<div class="t" style="left:321.70px;width:60px;text-align:center;top:318.21px;font-size:7.1px;line-height:9.94px;color:#1a1a1a;font-weight:normal;">00:00:28:886</div>
<div class="t" style="left:262.00px;top:331.21px;font-size:7.1px;line-height:9.94px;color:#e4e5e8;font-weight:normal;">44100 Hz, 2 channels, 16 bit PCM</div>
<div style="left:848.00px;top:44.50px;width:2.10px;height:306.40px;background:#565a63"></div>
<div style="left:850.10px;top:44.40px;width:81.90px;height:14.50px;background:#363941"></div>
<div class="t" style="left:854.00px;top:47.32px;font-size:7.2px;line-height:10.08px;color:#ebebed;font-weight:normal;">Level Meter</div>
<svg style="left:922.20px;top:47.65px;width:8px;height:8px;" viewBox="956.2 70.15 8 8" width="8" height="8"><path d="M958.1 72.05000000000001L962.3000000000001 76.25M962.3000000000001 72.05000000000001L958.1 76.25" stroke="#f2f2f4" stroke-width="1.5"/></svg>
<div style="left:850.10px;top:58.90px;width:82.00px;height:198.80px;background:#1b1b20"></div>
<svg style="left:850.00px;top:58.50px;width:82px;height:200px;" viewBox="884 81 82 200" width="82" height="200"><rect x="909.7" y="89" width="20.699999999999932" height="2.2" fill="#4a484e"/><rect x="909.7" y="93.8" width="20.699999999999932" height="47.000000000000014" fill="#48464c"/><rect x="909.7" y="125.2" width="20.699999999999932" height="1.2" fill="#c4504c"/><rect x="909.7" y="140.8" width="20.699999999999932" height="9.699999999999989" fill="#fdd46c"/><rect x="909.7" y="150.5" width="20.699999999999932" height="106.10000000000002" fill="#3fcf3f"/><rect x="909.7" y="155.5" width="20.699999999999932" height="1.2" fill="#f0fff0"/><rect x="937.7" y="89" width="20.799999999999955" height="2.2" fill="#4a484e"/><rect x="937.7" y="93.8" width="20.799999999999955" height="49.39999999999999" fill="#48464c"/><rect x="937.7" y="121.80000000000001" width="20.799999999999955" height="1.2" fill="#c4504c"/><rect x="937.7" y="143.2" width="20.799999999999955" height="7.300000000000011" fill="#fdd46c"/><rect x="937.7" y="150.5" width="20.799999999999955" height="106.10000000000002" fill="#3fcf3f"/><rect x="937.7" y="157.0" width="20.799999999999955" height="1.2" fill="#f0fff0"/><rect x="905.3" y="93.55000000000001" width="3.8" height="0.7" fill="#8b8c92"/><rect x="905.3" y="109.95" width="3.8" height="0.7" fill="#8b8c92"/><rect x="905.3" y="126.15" width="3.8" height="0.7" fill="#8b8c92"/><rect x="905.3" y="142.45000000000002" width="3.8" height="0.7" fill="#8b8c92"/><rect x="905.3" y="158.45000000000002" width="3.8" height="0.7" fill="#8b8c92"/><rect x="905.3" y="175.15" width="3.8" height="0.7" fill="#8b8c92"/><rect x="905.3" y="195.05" width="3.8" height="0.7" fill="#8b8c92"/><rect x="905.3" y="215.45000000000002" width="3.8" height="0.7" fill="#8b8c92"/><rect x="905.3" y="235.55" width="3.8" height="0.7" fill="#8b8c92"/><rect x="905.3" y="255.75000000000003" width="3.8" height="0.7" fill="#8b8c92"/><g transform="translate(894.7 271.8) scale(0.95)"><path d="M-3.4 3.4L0.9 -0.9" stroke="#c9cacf" stroke-width="1.7" stroke-linecap="round"/><circle cx="1.2" cy="-1.2" r="2.5" fill="#c9cacf"/><circle cx="2.6" cy="-2.6" r="1.25" fill="#1b1b20"/></g></svg>
<div class="t" style="left:840.60px;width:30px;text-align:right;top:66.79px;font-size:6.6px;line-height:9.24px;color:#d4d5d9;font-weight:normal;">0</div>
<div class="t" style="left:840.60px;width:30px;text-align:right;top:83.19px;font-size:6.6px;line-height:9.24px;color:#d4d5d9;font-weight:normal;">-4</div>
<div class="t" style="left:840.60px;width:30px;text-align:right;top:99.39px;font-size:6.6px;line-height:9.24px;color:#d4d5d9;font-weight:normal;">-8</div>
<div class="t" style="left:840.60px;width:30px;text-align:right;top:115.69px;font-size:6.6px;line-height:9.24px;color:#d4d5d9;font-weight:normal;">-12</div>
<div class="t" style="left:840.60px;width:30px;text-align:right;top:131.69px;font-size:6.6px;line-height:9.24px;color:#d4d5d9;font-weight:normal;">-16</div>
<div class="t" style="left:840.60px;width:30px;text-align:right;top:148.39px;font-size:6.6px;line-height:9.24px;color:#d4d5d9;font-weight:normal;">-20</div>
<div class="t" style="left:840.60px;width:30px;text-align:right;top:168.29px;font-size:6.6px;line-height:9.24px;color:#d4d5d9;font-weight:normal;">-40</div>
<div class="t" style="left:840.60px;width:30px;text-align:right;top:188.69px;font-size:6.6px;line-height:9.24px;color:#d4d5d9;font-weight:normal;">-60</div>
<div class="t" style="left:840.60px;width:30px;text-align:right;top:208.79px;font-size:6.6px;line-height:9.24px;color:#d4d5d9;font-weight:normal;">-80</div>
<div class="t" style="left:840.60px;width:30px;text-align:right;top:228.99px;font-size:6.6px;line-height:9.24px;color:#d4d5d9;font-weight:normal;">-100</div>
<div class="t" style="left:866.20px;width:40px;text-align:center;top:237.31px;font-size:7.0px;line-height:9.8px;color:#eeeef0;font-weight:normal;">-7.90</div>
<div class="t" style="left:893.80px;width:40px;text-align:center;top:237.31px;font-size:7.0px;line-height:9.8px;color:#eeeef0;font-weight:normal;">-6.94</div>
<div class="t" style="left:874.60px;top:245.20px;font-size:6.9px;line-height:9.66px;color:#eeeef0;font-weight:normal;">True peak: -6.54</div>
<div style="left:850.10px;top:257.70px;width:82.00px;height:3.40px;background:#3b3e46"></div>
<div style="left:850.10px;top:261.10px;width:81.90px;height:13.00px;background:#363941"></div>
<div class="t" style="left:854.00px;top:263.27px;font-size:7.2px;line-height:10.08px;color:#ebebed;font-weight:normal;">Correlation Meter</div>
<svg style="left:923.00px;top:263.60px;width:8px;height:8px;" viewBox="957 286.1 8 8" width="8" height="8"><path d="M958.9 288.0L963.1 292.20000000000005M963.1 288.0L958.9 292.20000000000005" stroke="#f2f2f4" stroke-width="1.5"/></svg>
<div style="left:850.10px;top:274.10px;width:82.00px;height:76.80px;background:#1b1b20"></div>
<svg style="left:850.00px;top:273.50px;width:82px;height:78px;" viewBox="884 296 82 78" width="82" height="78"><rect x="893.1" y="305.9" width="64.2" height="46.3" fill="#1f1f25"/><g stroke="#4a4b52" stroke-width="0.8"><path d="M893.1 305.9L957.3 352.2M957.3 305.9L893.1 352.2M893.1 329L957.3 329"/></g><path d="M915.9 321.2C917.9 337.7 920.3 335.4 921.6 330.9C922.9 326.4 924.5 312.9 924.7 309.1C925.0 305.4 924.7 308.1 923.3 308.2C921.9 308.3 914.8 306.7 916.3 309.7C917.9 312.6 932.3 325.4 932.6 325.8C933.0 326.2 918.5 310.6 918.5 312.1C918.5 313.7 932.0 331.6 932.7 335.0C933.3 338.5 924.7 330.1 922.4 332.8C920.1 335.4 919.0 348.8 918.8 350.9C918.6 353.1 921.8 351.9 921.3 345.6C920.8 339.3 914.1 317.2 916.0 313.1C917.9 308.9 930.7 320.3 932.5 320.5C934.2 320.8 928.2 312.2 926.5 314.7C924.8 317.2 924.2 332.8 922.3 335.6C920.4 338.4 915.5 335.8 914.9 331.4C914.3 327.0 917.3 308.2 918.8 309.2C920.2 310.2 922.0 335.5 923.3 337.5C924.6 339.4 927.3 322.5 926.7 320.8C926.1 319.1 919.6 323.5 919.8 327.1C920.0 330.8 926.8 344.2 927.9 342.6C929.1 341.1 925.5 319.6 926.4 317.6C927.3 315.6 934.1 326.7 933.2 330.4C932.2 334.1 923.1 336.2 920.9 339.7C918.7 343.1 918.1 353.5 919.8 351.1C921.5 348.7 930.2 331.8 930.9 325.5C931.7 319.2 924.9 316.3 924.3 313.4C923.8 310.5 927.6 303.6 927.8 308.3C928.1 312.9 926.9 334.9 925.9 341.3C924.8 347.6 921.7 346.9 921.7 346.3C921.8 345.8 926.0 340.4 926.3 338.1C926.6 335.9 922.8 331.8 923.7 332.9C924.6 334.0 930.9 345.5 931.7 344.7C932.5 343.9 929.0 334.0 928.5 328.1C928.0 322.2 927.8 307.9 928.6 309.3C929.4 310.6 934.7 330.2 933.5 335.9C932.2 341.7 921.9 345.9 921.1 343.9C920.3 341.9 928.3 330.1 928.8 324.1C929.3 318.0 926.1 309.2 923.9 307.5C921.7 305.9 914.8 313.9 915.8 314.1C916.8 314.4 929.4 309.5 929.9 309.2C930.5 308.9 918.4 309.9 919.0 312.4C919.7 314.9 933.1 324.7 933.8 324.3C934.6 323.9 923.7 309.0 923.6 310.2C923.4 311.4 931.9 325.9 933.1 331.5C934.3 337.1 932.3 345.8 930.6 343.8C928.8 341.7 921.9 322.7 922.5 319.2C923.1 315.7 934.6 317.7 934.2 322.8C933.8 328.0 922.6 351.5 920.0 350.1C917.3 348.7 917.7 320.0 918.4 314.5C919.1 309.0 924.0 314.0 924.2 317.1C924.4 320.2 919.8 335.0 919.6 333.3C919.4 331.6 922.1 308.4 923.2 306.7C924.3 305.0 925.6 316.1 926.3 323.3C926.9 330.5 927.0 348.8 927.2 349.9C927.3 351.0 929.1 332.1 927.3 330.0C925.6 327.9 916.4 334.4 916.6 337.3C916.9 340.2 926.6 345.9 928.7 347.4C930.8 348.9 930.3 350.1 929.2 346.3C928.1 342.4 922.4 330.2 922.1 324.4C921.8 318.5 928.5 313.7 927.5 311.2C926.4 308.7 917.8 308.5 916.0 309.3C914.1 310.1 917.0 313.9 916.5 316.0C916.1 318.1 913.1 323.6 913.4 322.0C913.7 320.4 917.1 308.3 918.5 306.5C919.9 304.7 919.5 310.9 921.7 311.1C923.9 311.3 932.2 303.8 931.6 307.7C930.9 311.5 919.3 332.7 917.5 334.4C915.7 336.2 921.3 319.9 920.9 318.0C920.5 316.1 913.3 318.5 915.2 323.1C917.1 327.6 930.9 344.4 932.4 345.1C933.9 345.9 926.9 333.5 924.2 327.7C921.5 321.9 917.2 311.3 916.3 310.4C915.4 309.5 918.3 316.5 918.7 322.1C919.2 327.7 916.7 346.6 919.1 344.2C921.5 341.8 933.4 309.8 932.9 307.6C932.5 305.3 919.7 326.6 916.6 330.5C913.4 334.5 910.9 331.2 914.0 331.2C917.2 331.2 933.2 328.1 935.5 330.5C937.7 333.0 930.0 347.8 927.7 345.8C925.3 343.8 920.8 323.7 921.3 318.4C921.9 313.1 929.3 312.0 930.9 314.1C932.5 316.2 933.1 329.5 930.9 330.7C928.7 332.0 917.4 319.4 917.7 321.5C918.0 323.6 930.7 339.5 932.6 343.4C934.6 347.4 930.1 345.2 929.4 345.3C928.8 345.3 929.3 348.5 928.5 343.7C927.8 339.0 927.6 320.3 925.0 316.8C922.4 313.3 913.6 324.2 912.8 322.7C912.1 321.2 917.7 308.5 920.5 307.8C923.2 307.0 928.8 311.3 929.3 318.3C929.9 325.3 923.6 344.9 923.9 350.0C924.2 355.2 931.5 349.1 931.4 349.1" fill="none" stroke="#e9c95c" stroke-width="0.6" stroke-linejoin="round"/><rect x="893.1" y="355.7" width="64.2" height="4.4" fill="#4a494f"/><rect x="925" y="355.7" width="21" height="4.4" fill="#3fcf3f"/><g stroke="#8b8c92" stroke-width="0.7"><path d="M893.4 360.1v2.4M924.6 360.1v2.4M957 360.1v2.4"/></g></svg>
<div class="t" style="left:849.00px;width:20px;text-align:center;top:341.55px;font-size:6.5px;line-height:9.1px;color:#d4d5d9;font-weight:normal;">-1</div>
<div class="t" style="left:880.60px;width:20px;text-align:center;top:341.55px;font-size:6.5px;line-height:9.1px;color:#d4d5d9;font-weight:normal;">0</div>
<div class="t" style="left:912.40px;width:20px;text-align:center;top:341.55px;font-size:6.5px;line-height:9.1px;color:#d4d5d9;font-weight:normal;">1</div>
<div style="left:0.00px;top:350.90px;width:932.00px;height:2.60px;background:#464a52"></div>
<div style="left:0.00px;top:353.50px;width:243.00px;height:14.80px;background:#30333a"></div>
<svg style="left:0.00px;top:353.50px;width:244px;height:15px;" viewBox="34 376 244 15" width="244" height="15"><path d="M34.8 390.8L41.4 377H128.4L134.4 390.8Z" fill="#5a5f69"/><path d="M135.6 390.8L141.2 377H202L208.4 390.8Z" fill="#c9ccd1"/><path d="M209.2 390.8L215.6 377H270L276.4 390.8Z" fill="#5a5f69"/><path d="M118.39999999999999 381.2L122.8 385.59999999999997M122.8 381.2L118.39999999999999 385.59999999999997" stroke="#f2f2f4" stroke-width="1.5"/><path d="M192.3 381.2L196.7 385.59999999999997M196.7 381.2L192.3 385.59999999999997" stroke="#111" stroke-width="1.5"/><path d="M260.3 381.2L264.7 385.59999999999997M264.7 381.2L260.3 385.59999999999997" stroke="#f2f2f4" stroke-width="1.5"/></svg>
<div class="t" style="left:14.60px;top:356.55px;font-size:7.6px;line-height:10.64px;color:#e6e7ea;font-weight:normal;">Media File Browser</div>
<div class="t" style="left:116.00px;top:356.69px;font-size:7.4px;line-height:10.36px;color:#151515;font-weight:normal;">Region List</div>
<div class="t" style="left:188.80px;top:356.49px;font-size:7.7px;line-height:10.78px;color:#e6e7ea;font-weight:normal;">Label List</div>
<div style="left:0.00px;top:368.30px;width:243.00px;height:16.40px;background:#3c3f47"></div>
<div style="left:83.60px;top:368.30px;width:1.00px;height:16.40px;background:#30333a"></div>
<div style="left:132.50px;top:368.30px;width:1.00px;height:16.40px;background:#30333a"></div>
<div style="left:181.60px;top:368.30px;width:1.00px;height:16.40px;background:#30333a"></div>
<div style="left:230.40px;top:368.30px;width:1.00px;height:16.40px;background:#30333a"></div>
<div class="t" style="left:3.00px;top:372.27px;font-size:7.2px;line-height:10.08px;color:#e4e5e8;font-weight:normal;">Name</div>
<div class="t" style="left:86.60px;top:372.27px;font-size:7.2px;line-height:10.08px;color:#e4e5e8;font-weight:normal;">Begin</div>
<div class="t" style="left:135.70px;top:372.27px;font-size:7.2px;line-height:10.08px;color:#e4e5e8;font-weight:normal;">End</div>
<div class="t" style="left:184.30px;top:372.27px;font-size:7.2px;line-height:10.08px;color:#e4e5e8;font-weight:normal;">Duration</div>
<svg style="left:122.00px;top:373.50px;width:9px;height:7px;" viewBox="156 396 9 7" width="9" height="7"><path d="M157.2 402L160.4 396.8L163.6 402Z" fill="#1a1b1f"/></svg>
<div style="left:0.00px;top:384.70px;width:243.00px;height:0.80px;background:#2a2c31"></div>
<div style="left:0.00px;top:385.40px;width:243.00px;height:13.00px;background:#f0aa1e"></div>
<div class="t" style="left:3.00px;top:387.37px;font-size:7.2px;line-height:10.08px;color:#161616;font-weight:normal;">Pads</div>
<div class="t" style="left:86.60px;top:387.41px;font-size:7.15px;line-height:10.01px;color:#161616;font-weight:normal;">00:00:24:487</div>
<div class="t" style="left:135.70px;top:387.41px;font-size:7.15px;line-height:10.01px;color:#161616;font-weight:normal;">00:00:43:547</div>
<div class="t" style="left:184.30px;top:387.41px;font-size:7.15px;line-height:10.01px;color:#161616;font-weight:normal;">00:00:19:060</div>
<div style="left:0.00px;top:398.40px;width:243.00px;height:70.00px;background:#1b1b20"></div>
<div style="left:243.00px;top:353.50px;width:2.60px;height:115.00px;background:#3b3e46"></div>
<div style="left:245.60px;top:353.50px;width:225.80px;height:14.60px;background:#363941"></div>
<div class="t" style="left:249.00px;top:356.47px;font-size:7.2px;line-height:10.08px;color:#ebebed;font-weight:normal;">Processing Chain</div>
<svg style="left:462.00px;top:356.80px;width:8px;height:8px;" viewBox="496 379.3 8 8" width="8" height="8"><path d="M497.9 381.2L502.1 385.40000000000003M502.1 381.2L497.9 385.40000000000003" stroke="#f2f2f4" stroke-width="1.5"/></svg>
<div style="left:245.60px;top:368.10px;width:225.80px;height:100.00px;background:#3e4149"></div>
<div class="btn" style="left:248.00px;top:370.70px;width:38.50px;height:16.60px;border-radius:2.5px;box-shadow:0 0.5px 0.5px rgba(0,0,0,0.35)"></div>
<div class="ybtn" style="left:248.00px;top:370.70px;width:19.20px;height:16.60px;border-radius:2.5px 0 0 2.5px"></div>
<div class="btn" style="left:292.00px;top:370.70px;width:38.00px;height:16.60px;border-radius:2.5px;box-shadow:0 0.5px 0.5px rgba(0,0,0,0.35)"></div>
<div style="left:310.70px;top:371.20px;width:1.00px;height:15.60px;background:rgba(150,152,160,0.45)"></div>
<div class="btn" style="left:335.90px;top:370.80px;width:48.70px;height:16.70px;border-radius:2.5px;box-shadow:0 0.5px 0.5px rgba(0,0,0,0.35)"></div>
<svg style="left:245.00px;top:367.50px;width:146px;height:22px;" viewBox="279 390 146 22" width="146" height="22"><path d="M293.18 399.06A3.1 3.1 0 1 1 289.62 399.06" fill="none" stroke="#0d0d0d" stroke-width="1.1" stroke-linecap="round"/><path d="M291.4 397.9V401.20000000000005" stroke="#0d0d0d" stroke-width="1.1" stroke-linecap="round"/><rect x="307.4" y="397.8" width="7.6" height="7.8" fill="none" stroke="#0d0d0d" stroke-width="0.9"/><rect x="309.7" y="396.6" width="3" height="2" fill="#0d0d0d"/><path d="M330.4 398.2h3.2l0.9 1h3.6v1.3h-6l-1.7 4.8z" fill="#0d0d0d"/><path d="M331.3 405.4l1.9-4.6h7.4l-2 4.6z" fill="#0d0d0d"/><path d="M350.6 397.4h7l1 1v7.3h-8z" fill="#0d0d0d"/><rect x="351.9" y="398.2" width="5.4" height="2.9" fill="#d9dadd"/><rect x="351.9" y="399.4" width="5.4" height="0.6" fill="#0d0d0d"/><rect x="355.3" y="403.6" width="1.2" height="1.2" fill="#d9dadd"/><path d="M374.3 398.8h6.4v3.8c0 1-0.8 1.6-1.6 1.6h-3.2c-0.8 0-1.6-0.6-1.6-1.6z" fill="#0d0d0d"/><path d="M380.6 399.6h1.2c0.9 0 0.9 2.2 0 2.2h-1.2" fill="none" stroke="#0d0d0d" stroke-width="0.8"/><rect x="373.6" y="404.8" width="8.6" height="0.9" fill="#0d0d0d"/><path d="M409.8 400.4h5l-2.5 2.7z" fill="#d8262c"/></svg>
<div class="t" style="left:352.60px;top:374.89px;font-size:7.7px;line-height:10.78px;color:#111;font-weight:normal;">Apply</div>
<div class="t" style="left:392.80px;top:369.88px;font-size:8.2px;line-height:11.48px;color:#80838a;font-weight:bold;">SRC off</div>
<div class="t" style="left:392.80px;top:378.91px;font-size:6.8px;line-height:9.52px;color:#f0f0f2;font-weight:bold;">44100 Hz</div>
<div class="t" style="left:431.30px;width:40px;text-align:center;top:370.81px;font-size:6.8px;line-height:9.52px;color:#e6e7ea;font-weight:normal;">Output</div>
<div class="t" style="left:431.30px;width:40px;text-align:center;top:378.49px;font-size:6.6px;line-height:9.24px;color:#e6e7ea;font-weight:normal;">level (dB)</div>
<div style="left:246.20px;top:390.50px;width:184.60px;height:78.00px;background:#1b1b20"></div>
<svg style="left:246.00px;top:390.50px;width:186px;height:78px;" viewBox="280 413 186 78" width="186" height="78"><rect x="281.2" y="415" width="182.6" height="15.800000000000011" fill="#3e4149"/><g stroke="#b9bac0" stroke-width="1.2"><path d="M284.4 419.59999999999997h3.4M284.4 422.9h3.4M284.4 426.2h3.4"/></g><path d="M299.66 420.35A3.6 3.6 0 1 1 295.54 420.35" fill="none" stroke="#f2b124" stroke-width="1.5" stroke-linecap="round"/><path d="M297.6 419.0999999999999V422.9" stroke="#f2b124" stroke-width="1.5" stroke-linecap="round"/><path d="M307.0 423.9V422.5A3.6 3.6 0 0 1 314.20000000000005 422.5V423.9" fill="none" stroke="#d3d4d8" stroke-width="1.2"/><rect x="305.70000000000005" y="422.7" width="2.7" height="3.4" rx="1" fill="#d3d4d8"/><rect x="312.8" y="422.7" width="2.7" height="3.4" rx="1" fill="#d3d4d8"/><path d="M436.59999999999997 420.29999999999995L441.8 425.5M441.8 420.29999999999995L436.59999999999997 425.5" stroke="#e0342c" stroke-width="1.8"/><path d="M447.9 422.9h8.4M452.1 418.7v8.4" stroke="#dcdde1" stroke-width="1.9"/><rect x="281.2" y="432.4" width="182.6" height="15.600000000000023" fill="#3e4149"/><g stroke="#b9bac0" stroke-width="1.2"><path d="M284.4 436.9h3.4M284.4 440.2h3.4M284.4 443.5h3.4"/></g><path d="M299.66 437.65A3.6 3.6 0 1 1 295.54 437.65" fill="none" stroke="#f2b124" stroke-width="1.5" stroke-linecap="round"/><path d="M297.6 436.3999999999999V440.2" stroke="#f2b124" stroke-width="1.5" stroke-linecap="round"/><path d="M307.0 441.2V439.8A3.6 3.6 0 0 1 314.20000000000005 439.8V441.2" fill="none" stroke="#d3d4d8" stroke-width="1.2"/><rect x="305.70000000000005" y="440.0" width="2.7" height="3.4" rx="1" fill="#d3d4d8"/><rect x="312.8" y="440.0" width="2.7" height="3.4" rx="1" fill="#d3d4d8"/><path d="M436.59999999999997 437.59999999999997L441.8 442.8M441.8 437.59999999999997L436.59999999999997 442.8" stroke="#e0342c" stroke-width="1.8"/><path d="M447.9 440.2h8.4M452.1 436.0v8.4" stroke="#dcdde1" stroke-width="1.9"/><rect x="281.2" y="449.3" width="182.6" height="15.699999999999989" fill="#3e4149"/><g stroke="#b9bac0" stroke-width="1.2"><path d="M284.4 453.84999999999997h3.4M284.4 457.15h3.4M284.4 460.45h3.4"/></g><path d="M299.66 454.60A3.6 3.6 0 1 1 295.54 454.60" fill="none" stroke="#f2b124" stroke-width="1.5" stroke-linecap="round"/><path d="M297.6 453.3499999999999V457.15" stroke="#f2b124" stroke-width="1.5" stroke-linecap="round"/><path d="M307.0 458.15V456.75A3.6 3.6 0 0 1 314.20000000000005 456.75V458.15" fill="none" stroke="#d3d4d8" stroke-width="1.2"/><rect x="305.70000000000005" y="456.95" width="2.7" height="3.4" rx="1" fill="#d3d4d8"/><rect x="312.8" y="456.95" width="2.7" height="3.4" rx="1" fill="#d3d4d8"/><path d="M436.59999999999997 454.54999999999995L441.8 459.75M441.8 454.54999999999995L436.59999999999997 459.75" stroke="#e0342c" stroke-width="1.8"/><path d="M447.9 457.15h8.4M452.1 452.95v8.4" stroke="#dcdde1" stroke-width="1.9"/><path d="M447.9 473.6h8.4M452.1 469.4v8.4" stroke="#dcdde1" stroke-width="1.9"/></svg>
<div class="t" style="left:286.80px;top:395.95px;font-size:7.6px;line-height:10.64px;color:#eeeef0;font-weight:normal;">Dynamics</div>
<div class="t" style="left:286.80px;top:413.25px;font-size:7.6px;line-height:10.64px;color:#eeeef0;font-weight:normal;">Equalize 2</div>
<div class="t" style="left:286.80px;top:430.20px;font-size:7.6px;line-height:10.64px;color:#eeeef0;font-weight:normal;">Limit</div>
<svg style="left:444.00px;top:391.50px;width:16px;height:56px;" viewBox="478 414 16 56" width="16" height="56"><rect x="481.4" y="416.8" width="8" height="49.4" fill="#27282d"/><rect x="482.6" y="430" width="5.6" height="36" fill="#c7972a"/><defs><linearGradient id="thb" x1="0" y1="0" x2="0" y2="1"><stop offset="0" stop-color="#eeeff1"/><stop offset="1" stop-color="#bfc0c5"/></linearGradient></defs><rect x="480.2" y="423" width="10.2" height="13.6" rx="1.5" fill="url(#thb)"/><rect x="482.4" y="429.4" width="5.8" height="0.8" fill="#9a9ba0"/></svg>
<div style="left:436.60px;top:450.20px;width:29.20px;height:12.00px;background:#c9cacf;border:0.6px solid #9a9ba0"></div>
<div class="t" style="left:436.20px;width:30px;text-align:center;top:451.75px;font-size:7.6px;line-height:10.64px;color:#1a1a1a;font-weight:normal;">0.0</div>
<div style="left:471.40px;top:353.50px;width:2.00px;height:115.00px;background:#3b3e46"></div>
<div style="left:473.30px;top:353.50px;width:248.70px;height:15.30px;background:#363941"></div>
<div class="t" style="left:477.00px;top:356.82px;font-size:7.2px;line-height:10.08px;color:#ebebed;font-weight:normal;">Loudness Meter</div>
<svg style="left:712.00px;top:357.15px;width:8px;height:8px;" viewBox="746 379.65 8 8" width="8" height="8"><path d="M747.9 381.54999999999995L752.1 385.75M752.1 381.54999999999995L747.9 385.75" stroke="#f2f2f4" stroke-width="1.5"/></svg>
<div style="left:473.30px;top:368.80px;width:248.70px;height:100.00px;background:#1b1b20"></div>
<svg style="left:473.00px;top:368.50px;width:249px;height:100px;" viewBox="507 391 249 100" width="249" height="100"><rect x="516.9" y="400.7" width="101.80000000000007" height="60.30000000000001" fill="#27272c"/><rect x="516.9" y="400.7" width="101.80000000000007" height="19.900000000000034" fill="#3a2a2a"/><rect x="516.9" y="405.3" width="101.80000000000007" height="0.6" fill="#3e3e44"/><rect x="516.9" y="416.5" width="101.80000000000007" height="0.6" fill="#3e3e44"/><rect x="516.9" y="427.4" width="101.80000000000007" height="0.6" fill="#3e3e44"/><rect x="516.9" y="438.5" width="101.80000000000007" height="0.6" fill="#3e3e44"/><rect x="516.9" y="449.4" width="101.80000000000007" height="0.6" fill="#3e3e44"/><rect x="550.9000000000001" y="400.7" width="0.6" height="60.30000000000001" fill="#48474c"/><rect x="584.1" y="400.7" width="0.6" height="60.30000000000001" fill="#48474c"/><rect x="516.9" y="415.6" width="101.80000000000007" height="1" fill="#c0463c"/><path d="M516.90 461.00L520.90 461.00L520.90 441.00L521.15 439.14L521.40 437.43L521.65 435.87L521.90 434.42L522.15 433.10L522.40 431.89L522.65 430.77L522.90 429.74L523.15 428.80L523.40 427.93L523.65 427.13L523.90 426.39L524.15 425.71L524.40 425.08L524.65 424.50L524.90 423.97L525.15 423.47L525.40 423.01L525.65 422.58L525.90 422.19L526.15 421.82L526.40 421.47L526.65 421.15L526.90 420.85L527.15 420.57L527.40 420.31L527.65 420.06L527.90 419.83L528.15 419.61L528.40 419.40L528.65 419.21L528.90 419.02L529.15 418.85L529.40 418.68L529.65 418.53L529.90 418.38L530.15 418.24L530.40 418.11L530.65 417.99L530.90 417.87L531.15 417.77L531.40 417.66L531.65 417.57L531.90 417.48L532.15 417.40L532.40 417.33L532.65 417.26L532.90 417.20L533.15 417.15L533.40 417.10L533.65 417.06L533.90 417.02L534.15 416.99L534.40 416.96L534.65 416.95L534.90 416.93L535.15 416.92L535.40 416.92L535.65 416.92L535.90 416.93L536.15 416.94L536.40 416.96L536.65 416.98L536.90 417.00L537.15 417.03L537.40 417.05L537.65 417.09L537.90 417.12L538.15 417.15L538.40 417.19L538.65 417.23L538.90 417.27L539.15 417.31L539.40 417.35L539.65 417.38L539.90 417.42L540.15 417.46L540.40 417.49L540.65 417.53L540.90 417.56L541.15 417.59L541.40 417.61L541.65 417.64L541.90 417.66L542.15 417.68L542.40 417.69L542.65 417.70L542.90 417.71L543.15 417.71L543.40 417.71L543.65 417.71L543.90 417.70L544.15 417.69L544.40 417.68L544.65 417.66L544.90 417.64L545.15 417.61L545.40 417.58L545.65 417.55L545.90 417.52L546.15 417.48L546.40 417.44L546.65 417.40L546.90 417.36L547.15 417.32L547.40 417.28L547.65 417.23L547.90 417.19L548.15 417.15L548.40 417.10L548.65 417.06L548.90 417.02L549.15 416.98L549.40 416.94L549.65 416.90L549.90 416.87L550.15 416.84L550.40 416.81L550.65 416.78L550.90 416.76L551.15 416.74L551.40 416.73L551.65 416.71L551.90 416.71L552.15 416.70L552.40 416.70L552.65 416.70L552.90 416.71L553.15 416.72L553.40 416.74L553.65 416.75L553.90 416.78L554.15 416.80L554.40 416.83L554.65 416.86L554.90 416.89L555.15 416.93L555.40 416.96L555.65 417.00L555.90 417.04L556.15 417.09L556.40 417.13L556.65 417.17L556.90 417.22L557.15 417.26L557.40 417.30L557.65 417.35L557.90 417.39L558.15 417.43L558.40 417.47L558.65 417.50L558.90 417.53L559.15 417.57L559.40 417.59L559.65 417.62L559.90 417.64L560.15 417.66L560.40 417.68L560.65 417.69L560.90 417.70L561.15 417.70L561.40 417.70L561.65 417.70L561.90 417.69L562.15 417.68L562.40 417.66L562.65 417.64L562.90 417.62L563.15 417.60L563.40 417.57L563.65 417.54L563.90 417.51L564.15 417.47L564.40 417.43L564.65 417.39L564.90 417.35L565.15 417.31L565.40 417.27L565.65 417.22L565.90 417.18L566.15 417.14L566.40 417.09L566.65 417.05L566.90 417.01L567.15 416.97L567.40 416.93L567.65 416.90L567.90 416.86L568.15 416.83L568.40 416.80L568.65 416.78L568.90 416.76L569.15 416.74L569.40 416.72L569.65 416.71L569.90 416.70L570.15 416.70L570.40 416.70L570.65 416.70L570.90 416.71L571.15 416.72L571.40 416.74L571.65 416.76L571.90 416.78L572.15 416.80L572.40 416.83L572.65 416.86L572.90 416.90L573.15 416.93L573.40 416.97L573.65 417.01L573.90 417.05L574.15 417.09L574.40 417.14L574.65 417.18L574.90 417.23L575.15 417.27L575.40 417.31L575.65 417.35L575.90 417.39L576.15 417.43L576.40 417.47L576.65 417.51L576.90 417.54L577.15 417.57L577.40 417.60L577.65 417.62L577.90 417.65L578.15 417.66L578.40 417.68L578.65 417.69L578.90 417.70L579.15 417.70L579.40 417.70L579.65 417.69L579.90 417.69L580.15 417.68L580.40 417.66L580.65 417.64L580.90 417.62L581.15 417.59L581.40 417.56L581.65 417.53L581.90 417.50L582.15 417.46L582.40 417.42L582.65 417.38L582.90 417.34L583.15 417.30L583.40 417.26L583.65 417.21L583.90 417.17L584.15 417.13L584.40 417.08L584.65 417.04L584.90 417.00L585.15 416.96L585.40 416.92L585.65 416.89L585.90 416.86L586.15 416.83L586.40 416.80L586.65 416.77L586.90 416.75L587.15 416.73L587.40 416.72L587.65 416.71L587.90 416.70L588.15 416.70L588.40 416.70L588.65 416.71L588.90 416.71L589.15 416.73L589.40 416.74L589.65 416.76L589.90 416.78L590.15 416.81L590.40 416.84L590.65 416.87L590.90 416.90L591.15 416.94L591.40 416.98L591.65 417.02L591.90 417.06L592.15 417.10L592.40 417.15L592.65 417.19L592.90 417.23L593.15 417.28L593.40 417.32L593.65 417.36L593.90 417.40L594.15 417.44L594.40 417.48L594.65 417.51L594.90 417.55L595.15 417.58L595.40 417.60L595.65 417.63L595.90 417.65L596.15 417.67L596.40 417.68L596.65 417.69L596.90 417.70L597.15 417.70L597.40 417.70L597.65 417.69L597.90 417.68L598.15 417.67L598.40 417.66L598.65 417.64L598.90 417.61L599.15 417.59L599.40 417.56L599.65 417.53L599.90 417.49L600.15 417.46L600.40 417.42L600.65 417.38L600.90 417.34L601.15 417.29L601.40 417.25L601.65 417.21L601.90 417.16L602.15 417.12L602.40 417.08L602.65 417.03L602.90 416.99L603.15 416.95L603.40 416.92L603.65 416.88L603.90 416.85L604.15 416.82L604.40 416.79L604.65 416.77L604.90 416.75L605.15 416.73L605.40 416.72L605.65 416.71L605.90 416.70L606.15 416.70L606.40 416.70L606.65 416.71L606.90 416.72L607.15 416.73L607.40 416.75L607.65 416.77L607.90 416.79L608.15 416.82L608.40 416.84L608.65 416.88L608.90 416.91L609.15 416.95L609.40 416.99L609.65 417.03L609.90 417.07L610.15 417.11L610.40 417.15L610.65 417.20L610.90 417.24L611.15 417.29L611.40 417.33L611.65 417.37L611.90 417.41L612.15 417.45L612.40 417.49L612.65 417.52L612.90 417.55L613.15 417.58L613.40 417.61L613.65 417.63L613.90 417.65L614.15 417.67L614.40 417.68L614.65 417.69L614.90 417.70L615.15 417.70L615.40 417.70L615.65 417.69L615.90 417.68L616.15 417.67L616.40 417.65L616.65 417.63L616.90 417.61L617.15 417.58L617.40 417.55L617.65 417.52L617.90 417.49L618.15 417.45L618.40 417.41L618.65 417.37" fill="none" stroke="#4a90cc" stroke-width="1.1"/><path d="M520.60 461.00L521.10 432.00L522.10 425.00L522.10 417.38L522.90 416.13L523.70 419.18L524.50 420.67L525.30 419.01L526.10 417.53L526.90 415.52L527.70 415.34L528.50 415.74L529.30 415.76L530.10 416.77L530.90 418.03L531.70 419.99L532.50 418.26L533.30 415.66L534.10 414.29L534.90 415.54L535.70 417.11L536.50 417.36L537.30 417.94L538.10 418.98L538.90 417.55L539.70 416.43L540.50 415.14L541.30 414.47L542.10 415.73L542.90 417.18L543.70 417.72L544.50 417.89L545.30 417.81L546.10 416.63L546.90 415.36L547.70 415.07L548.50 415.60L549.30 416.07L550.10 416.70L550.90 418.28L551.70 418.89L552.50 418.69L553.30 417.90L554.10 417.05L554.90 416.46L555.70 416.64L556.50 416.96L557.30 418.35L558.10 418.60L558.90 419.09L559.70 417.24L560.50 415.33L561.30 415.41L562.10 416.27L562.90 416.92L563.70 418.19L564.50 417.85L565.30 416.99L566.10 416.14L566.90 415.74L567.70 416.43L568.50 417.41L569.30 417.94L570.10 417.87L570.90 417.49L571.70 416.56L572.50 416.07L573.30 416.14L574.10 416.46L574.90 417.38L575.70 417.78L576.50 417.91L577.30 417.81L578.10 417.47L578.90 416.82L579.70 416.16L580.50 416.06L581.30 416.57L582.10 417.13L582.90 417.90L583.70 417.58L584.50 416.90L585.30 416.53L586.10 416.06L586.90 416.56L587.70 417.45L588.50 418.90L589.30 418.79L590.10 417.24L590.90 415.53L591.70 416.28L592.50 416.35L593.30 416.82L594.10 417.29L594.90 417.47L595.70 417.69L596.50 417.78L597.30 417.44L598.10 417.75L598.90 416.60L599.70 415.85L600.50 414.97L601.30 415.38L602.10 415.60L602.90 417.28L603.70 418.21L604.50 418.61L605.30 418.38L606.10 417.33L606.90 415.62L607.70 415.37L608.50 415.44L609.30 416.39L610.10 418.11L610.90 418.64L611.70 417.48L612.50 416.36L613.30 416.02L614.10 416.66L614.90 417.30L615.70 417.98L616.50 417.86L617.30 417.63L618.10 417.00" fill="none" stroke="#f2cf5a" stroke-width="0.85"/><rect x="620.8" y="400.7" width="10.4" height="60.3" fill="#3a3a40"/><rect x="633" y="400.7" width="9.9" height="60.3" fill="#3a3a40"/><rect x="620.8" y="414.7" width="10.4" height="46.3" fill="#fdd46c"/><rect x="620.8" y="411.8" width="10.4" height="1" fill="#d8b04c"/><rect x="633" y="415" width="9.9" height="46" fill="#4a8ccb"/><rect x="633" y="412.6" width="9.9" height="0.9" fill="#3f6e9a"/><rect x="643.6" y="405.3" width="3.2" height="0.6" fill="#8b8c92"/><rect x="643.6" y="416.5" width="3.2" height="0.6" fill="#8b8c92"/><rect x="643.6" y="427.4" width="3.2" height="0.6" fill="#8b8c92"/><rect x="643.6" y="438.5" width="3.2" height="0.6" fill="#8b8c92"/><rect x="643.6" y="449.4" width="3.2" height="0.6" fill="#8b8c92"/><rect x="516.6" y="461" width="0.6" height="2.4" fill="#8b8c92"/><rect x="550.9000000000001" y="461" width="0.6" height="2.4" fill="#8b8c92"/><rect x="584.1" y="461" width="0.6" height="2.4" fill="#8b8c92"/><rect x="618.4000000000001" y="461" width="0.6" height="2.4" fill="#8b8c92"/><g transform="translate(517.8 481.2) scale(0.9)"><path d="M-3.4 3.4L0.9 -0.9" stroke="#c9cacf" stroke-width="1.7" stroke-linecap="round"/><circle cx="1.2" cy="-1.2" r="2.5" fill="#c9cacf"/><circle cx="2.6" cy="-2.6" r="1.25" fill="#1b1b20"/></g></svg>
<div class="t" style="left:613.00px;top:378.49px;font-size:6.6px;line-height:9.24px;color:#d4d5d9;font-weight:normal;">-10</div>
<div class="t" style="left:613.00px;top:389.69px;font-size:6.6px;line-height:9.24px;color:#d4d5d9;font-weight:normal;">-20</div>
<div class="t" style="left:613.00px;top:400.59px;font-size:6.6px;line-height:9.24px;color:#d4d5d9;font-weight:normal;">-30</div>
<div class="t" style="left:613.00px;top:411.69px;font-size:6.6px;line-height:9.24px;color:#d4d5d9;font-weight:normal;">-40</div>
<div class="t" style="left:613.00px;top:422.59px;font-size:6.6px;line-height:9.24px;color:#d4d5d9;font-weight:normal;">-50</div>
<div class="t" style="left:589.20px;width:80px;text-align:center;top:403.89px;font-size:6.6px;line-height:9.24px;color:#d4d5d9;font-weight:normal;transform:rotate(-90deg);transform-origin:center center;">Loudness (LUFS)</div>
<div class="t" style="left:467.90px;width:30px;text-align:center;top:441.59px;font-size:6.6px;line-height:9.24px;color:#d4d5d9;font-weight:normal;">-30</div>
<div class="t" style="left:502.20px;width:30px;text-align:center;top:441.59px;font-size:6.6px;line-height:9.24px;color:#d4d5d9;font-weight:normal;">-20</div>
<div class="t" style="left:535.40px;width:30px;text-align:center;top:441.59px;font-size:6.6px;line-height:9.24px;color:#d4d5d9;font-weight:normal;">-10</div>
<div class="t" style="left:569.70px;width:30px;text-align:center;top:441.59px;font-size:6.6px;line-height:9.24px;color:#d4d5d9;font-weight:normal;">0</div>
<div class="t" style="left:503.60px;width:60px;text-align:center;top:453.29px;font-size:6.6px;line-height:9.24px;color:#d4d5d9;font-weight:normal;">Time (s)</div>
<div class="btn" style="left:609.40px;top:445.70px;width:28.60px;height:14.00px;border-radius:2.5px;box-shadow:0 0.5px 0.5px rgba(0,0,0,0.35)"></div>
<div style="left:623.20px;top:446.20px;width:1.00px;height:13.00px;background:rgba(150,152,160,0.45)"></div>
<svg style="left:609.00px;top:445.50px;width:30px;height:15px;" viewBox="643 468 30 15" width="30" height="15"><circle cx="650.6" cy="475.2" r="2.8" fill="none" stroke="#111" stroke-width="1.1"/><rect x="662.2" y="471.8" width="1.9" height="6.8" fill="#111"/><rect x="665.4" y="471.8" width="1.9" height="6.8" fill="#111"/></svg>
<div class="t" style="left:627.00px;width:100px;text-align:center;top:373.43px;font-size:6.7px;line-height:9.38px;color:#eeeef0;font-weight:normal;">Momentary (LUFS)</div>
<div class="t" style="left:627.00px;width:100px;text-align:center;top:380.89px;font-size:10.8px;line-height:15.12px;color:#f6cf5a;font-weight:bold;">-18.2 (-15.7)</div>
<div class="t" style="left:627.00px;width:100px;text-align:center;top:398.03px;font-size:6.7px;line-height:9.38px;color:#eeeef0;font-weight:normal;">Short-term (LUFS)</div>
<div class="t" style="left:627.00px;width:100px;text-align:center;top:404.89px;font-size:10.8px;line-height:15.12px;color:#4a90cc;font-weight:bold;">-18.7 (-17.5)</div>
<div class="t" style="left:627.00px;width:100px;text-align:center;top:422.23px;font-size:6.7px;line-height:9.38px;color:#eeeef0;font-weight:normal;">Integrated (LUFS)</div>
<div class="t" style="left:627.00px;width:100px;text-align:center;top:429.39px;font-size:10.8px;line-height:15.12px;color:#f4f4f6;font-weight:bold;">-18.6</div>
<div class="t" style="left:627.00px;width:100px;text-align:center;top:447.03px;font-size:6.7px;line-height:9.38px;color:#eeeef0;font-weight:normal;">Loudness Range (LU)</div>
<div class="t" style="left:627.00px;width:100px;text-align:center;top:453.79px;font-size:10.8px;line-height:15.12px;color:#f4f4f6;font-weight:bold;">2.1</div>
<div style="left:722.00px;top:353.50px;width:2.00px;height:115.00px;background:#3b3e46"></div>
<div style="left:723.90px;top:353.50px;width:208.10px;height:15.00px;background:#363941"></div>
<div class="t" style="left:727.40px;top:356.67px;font-size:7.2px;line-height:10.08px;color:#ebebed;font-weight:normal;">Spectrum Analyzer</div>
<svg style="left:920.80px;top:357.00px;width:8px;height:8px;" viewBox="954.8 379.5 8 8" width="8" height="8"><path d="M956.6999999999999 381.4L960.9 385.6M960.9 381.4L956.6999999999999 385.6" stroke="#f2f2f4" stroke-width="1.5"/></svg>
<div style="left:723.90px;top:368.50px;width:208.10px;height:100.00px;background:#1b1b20"></div>
<svg style="left:724.00px;top:368.50px;width:208px;height:100px;" viewBox="758 391 208 100" width="208" height="100"><rect x="782" y="400" width="172.20000000000005" height="65.80000000000001" fill="#222227"/><rect x="778.4" y="400.5" width="3.2" height="0.6" fill="#8b8c92"/><rect x="778.4" y="414.09999999999997" width="3.2" height="0.6" fill="#8b8c92"/><rect x="778.4" y="427.4" width="3.2" height="0.6" fill="#8b8c92"/><rect x="778.4" y="440.7" width="3.2" height="0.6" fill="#8b8c92"/><rect x="778.4" y="454.3" width="3.2" height="0.6" fill="#8b8c92"/><rect x="804.3000000000001" y="465.8" width="0.6" height="2.2" fill="#8b8c92"/><rect x="838.2" y="465.8" width="0.6" height="2.2" fill="#8b8c92"/><rect x="877.4000000000001" y="465.8" width="0.6" height="2.2" fill="#8b8c92"/><rect x="916.9000000000001" y="465.8" width="0.6" height="2.2" fill="#8b8c92"/><rect x="950.3000000000001" y="465.8" width="0.6" height="2.2" fill="#8b8c92"/><path d="M782 465.8L781.9 419.0L782.3 418.9L782.8 418.7L783.2 418.4L783.6 418.3L784.0 418.1L784.4 417.8L784.8 417.7L785.2 417.5L785.6 417.3L786.0 417.1L786.4 416.9L786.8 416.7L787.3 416.5L787.7 416.3L788.1 416.2L788.5 416.0L788.9 415.8L789.3 415.5L789.7 415.2L790.1 415.1L790.5 414.9L790.9 414.8L791.3 414.5L791.8 414.4L792.2 414.2L792.6 413.9L793.0 413.7L793.4 413.6L793.8 413.4L794.2 413.2L794.6 413.0L795.1 412.7L795.5 412.4L795.9 412.3L796.3 412.0L796.7 411.8L797.1 411.7L797.5 411.5L797.9 411.3L798.4 411.1L798.8 410.9L799.2 410.6L799.6 410.6L800.0 410.4L800.4 410.4L800.8 410.2L801.2 409.9L801.7 409.9L802.1 409.8L802.5 409.7L802.9 409.5L803.3 409.4L803.7 409.3L804.1 409.1L804.5 408.8L805.0 408.8L805.4 408.7L805.8 408.5L806.2 408.6L806.6 408.5L807.0 408.6L807.4 408.5L807.8 408.4L808.3 408.6L808.7 408.5L809.1 408.5L809.5 408.6L809.9 408.6L810.3 408.4L810.7 408.4L811.1 408.6L811.6 408.5L812.0 408.4L812.4 408.6L812.8 408.5L813.2 408.8L813.6 409.0L814.1 409.1L814.5 409.3L814.9 409.5L815.3 409.8L815.8 410.0L816.2 410.1L816.6 410.4L817.0 410.7L817.5 410.9L817.9 410.8L818.3 411.0L818.8 411.1L819.2 411.0L819.7 411.2L820.1 411.2L820.5 411.3L821.0 411.3L821.4 411.3L821.8 411.2L822.3 411.0L822.7 411.0L823.2 410.8L823.6 410.8L824.0 410.6L824.5 410.5L824.9 410.8L825.3 411.0L825.7 411.3L826.1 411.4L826.5 411.6L826.9 411.9L827.3 411.9L827.7 412.7L828.1 413.4L828.6 413.9L829.0 414.7L829.5 415.3L829.9 416.1L830.3 416.6L830.8 417.0L831.2 417.3L831.6 417.4L832.1 417.9L832.5 418.0L832.9 418.3L833.4 418.7L833.8 419.1L834.3 419.1L834.7 419.2L835.1 419.2L835.6 419.2L836.0 419.2L836.5 419.4L836.9 419.5L837.3 419.5L837.8 419.6L838.2 419.7L838.6 419.8L839.1 419.8L839.5 420.0L840.0 420.0L840.4 420.1L840.8 420.1L841.3 420.1L841.7 419.9L842.2 420.0L842.6 419.8L843.0 419.7L843.5 419.6L843.9 419.6L844.3 419.6L844.8 419.1L845.2 418.7L845.6 418.3L846.0 417.8L846.4 416.5L846.9 414.9L847.4 413.5L847.9 412.1L848.3 412.7L848.7 413.2L849.1 413.8L849.5 414.4L850.0 414.0L850.4 413.5L850.9 413.0L851.4 412.7L851.8 413.1L852.2 413.8L852.6 414.2L853.0 414.7L853.5 416.0L853.9 417.2L854.4 418.3L854.9 419.4L855.3 420.2L855.8 420.7L856.3 421.3L856.7 422.0L857.2 422.0L857.7 422.4L858.1 424.0L858.6 423.1L859.1 424.2L859.5 424.4L860.0 424.2L860.4 425.4L860.8 424.6L861.2 425.4L861.6 423.9L862.0 426.0L862.4 424.5L862.8 425.1L863.3 425.6L863.7 424.8L864.1 427.0L864.5 426.2L864.9 426.4L865.3 426.3L865.7 427.3L866.1 427.9L866.6 428.0L867.0 427.3L867.4 428.3L867.8 428.6L868.2 428.4L868.6 428.4L869.0 428.4L869.4 429.3L869.8 427.9L870.2 429.3L870.6 428.2L871.0 430.0L871.4 427.8L871.8 429.4L872.2 428.0L872.7 428.1L873.1 429.0L873.5 431.0L873.9 430.9L874.3 431.2L874.7 429.9L875.1 431.6L875.5 431.7L875.9 432.0L876.3 432.3L876.7 430.3L877.1 430.3L877.6 432.7L878.0 431.9L878.4 433.0L878.8 433.1L879.2 433.7L879.6 433.2L880.0 434.4L880.4 434.6L880.9 434.3L881.3 435.2L881.7 435.0L882.1 433.4L882.5 436.0L882.9 436.2L883.3 434.8L883.7 436.6L884.2 436.6L884.6 435.0L885.0 436.1L885.4 437.1L885.8 437.4L886.2 437.4L886.6 437.5L887.0 436.2L887.5 435.6L887.9 436.6L888.3 436.3L888.7 436.3L889.1 436.7L889.5 436.7L889.9 436.6L890.3 439.3L890.8 439.3L891.2 439.7L891.6 439.2L892.0 439.8L892.4 440.4L892.8 439.2L893.2 440.8L893.6 441.4L894.1 441.6L894.5 441.5L894.9 441.4L895.3 441.8L895.7 442.4L896.1 443.1L896.5 443.0L896.9 443.5L897.4 443.6L897.8 442.9L898.2 443.5L898.6 442.2L899.0 442.3L899.4 443.4L899.8 442.3L900.2 443.0L900.7 442.7L901.1 442.2L901.5 441.6L901.9 441.0L902.3 441.6L902.7 442.8L903.1 442.1L903.5 442.6L904.0 442.8L904.4 442.3L904.8 442.7L905.2 441.6L905.7 443.5L906.1 442.3L906.5 443.6L906.9 444.6L907.4 443.5L907.8 444.9L908.2 444.6L908.6 445.6L909.0 445.7L909.4 443.5L909.8 445.7L910.3 445.7L910.7 445.8L911.1 445.9L911.5 444.2L911.9 443.4L912.3 445.0L912.7 445.7L913.1 444.1L913.5 445.5L913.9 446.2L914.3 445.1L914.7 446.0L915.1 446.2L915.5 446.2L915.9 446.1L916.4 446.5L916.8 445.6L917.2 444.7L917.6 445.9L918.0 446.8L918.4 445.6L918.8 446.9L919.3 446.4L919.7 445.1L920.1 445.9L920.5 445.0L921.0 445.7L921.4 447.1L921.8 447.3L922.2 446.9L922.7 446.3L923.1 447.4L923.5 447.4L923.9 446.3L924.3 447.5L924.7 447.0L925.1 447.3L925.5 445.9L926.0 448.2L926.4 448.2L926.8 446.9L927.2 447.4L927.6 448.6L928.0 448.7L928.4 448.7L928.8 448.1L929.3 446.9L929.7 449.0L930.1 449.2L930.5 448.3L930.9 449.3L931.3 448.1L931.7 447.5L932.1 448.1L932.6 449.2L933.0 450.1L933.4 451.0L933.8 449.5L934.2 451.0L934.6 451.0L935.0 450.7L935.4 449.6L935.9 451.4L936.3 450.2L936.7 450.2L937.1 452.7L937.5 452.5L937.9 450.8L938.3 451.4L938.7 450.6L939.2 453.0L939.6 452.5L940.0 451.0L940.4 452.6L940.8 452.3L941.2 451.1L941.6 453.5L942.0 453.7L942.5 451.9L942.9 453.0L943.3 453.8L943.7 452.2L944.1 453.9L944.5 454.1L945.0 454.0L945.4 454.4L945.8 454.0L946.2 452.9L946.7 454.1L947.1 452.3L947.5 454.8L947.9 454.8L948.4 454.9L948.8 453.5L949.3 453.7L949.8 452.0L950.2 451.9L950.6 453.2L951.1 453.7L951.5 455.4L951.9 456.2L952.3 458.9L952.8 459.0L953.3 457.5L953.7 459.9L954.2 460.0L954.2 465.8Z" fill="#fdd46c"/><g transform="translate(768.4 481.7) scale(0.9)"><path d="M-3.4 3.4L0.9 -0.9" stroke="#c9cacf" stroke-width="1.7" stroke-linecap="round"/><circle cx="1.2" cy="-1.2" r="2.5" fill="#c9cacf"/><circle cx="2.6" cy="-2.6" r="1.25" fill="#1b1b20"/></g></svg>
<div class="t" style="left:713.60px;width:30px;text-align:right;top:373.69px;font-size:6.6px;line-height:9.24px;color:#d4d5d9;font-weight:normal;">0</div>
<div class="t" style="left:713.60px;width:30px;text-align:right;top:387.29px;font-size:6.6px;line-height:9.24px;color:#d4d5d9;font-weight:normal;">-20</div>
<div class="t" style="left:713.60px;width:30px;text-align:right;top:400.59px;font-size:6.6px;line-height:9.24px;color:#d4d5d9;font-weight:normal;">-40</div>
<div class="t" style="left:713.60px;width:30px;text-align:right;top:413.89px;font-size:6.6px;line-height:9.24px;color:#d4d5d9;font-weight:normal;">-60</div>
<div class="t" style="left:713.60px;width:30px;text-align:right;top:427.49px;font-size:6.6px;line-height:9.24px;color:#d4d5d9;font-weight:normal;">-80</div>
<div class="t" style="left:750.60px;width:40px;text-align:center;top:445.69px;font-size:6.6px;line-height:9.24px;color:#d4d5d9;font-weight:normal;">50</div>
<div class="t" style="left:784.50px;width:40px;text-align:center;top:445.69px;font-size:6.6px;line-height:9.24px;color:#d4d5d9;font-weight:normal;">200</div>
<div class="t" style="left:823.70px;width:40px;text-align:center;top:445.69px;font-size:6.6px;line-height:9.24px;color:#d4d5d9;font-weight:normal;">1000</div>
<div class="t" style="left:863.20px;width:40px;text-align:center;top:445.69px;font-size:6.6px;line-height:9.24px;color:#d4d5d9;font-weight:normal;">5000</div>
<div class="t" style="left:896.60px;width:40px;text-align:center;top:445.69px;font-size:6.6px;line-height:9.24px;color:#d4d5d9;font-weight:normal;">20000</div></div><div class="wb"></div></body></html>
